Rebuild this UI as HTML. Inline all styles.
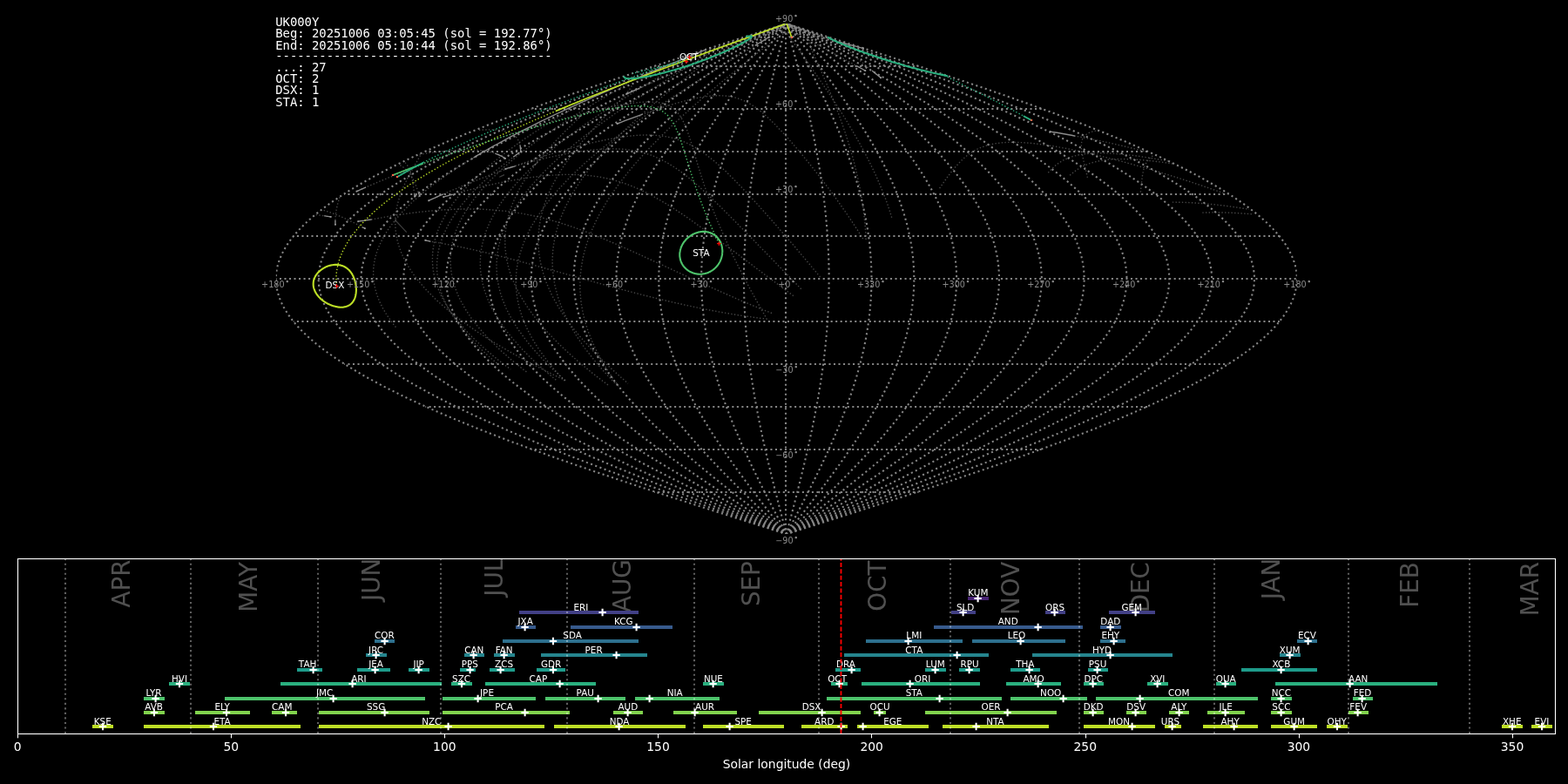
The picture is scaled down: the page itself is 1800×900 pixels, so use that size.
<!DOCTYPE html>
<html lang="en">
<head>
<meta charset="utf-8">
<title>UK000Y shower association</title>
<style>
html,body{margin:0;padding:0;background:#000;overflow:hidden}
body{width:1800px;height:900px}
svg{display:block;position:absolute;left:0;top:0;will-change:transform}
text{font-family:"DejaVu Sans","Liberation Sans",sans-serif}
.mono{font-family:"DejaVu Sans Mono","Liberation Mono",monospace;font-size:13.89px;fill:#fff;white-space:pre}
.gl{font-size:9.64px;fill:#8a8a8a;text-anchor:middle}
.bl{font-size:10.42px;fill:#fff;text-anchor:middle}
.tk{font-size:13.89px;fill:#fff;text-anchor:middle}
.mn{font-size:27.78px;fill:#fff;fill-opacity:0.315}
</style>
</head>
<body>
<svg width="1800" height="900" viewBox="0 0 1800 900">
<rect x="0" y="0" width="1800" height="900" fill="#000"/>
<defs><clipPath id="skyclip"><rect x="316.80" y="27.10" width="1172.00" height="586.00"/></clipPath></defs>
<g clip-path="url(#skyclip)" fill="none">
<g id="grid" stroke="#858585" stroke-width="2.083" stroke-dasharray="2.083 3.437">
<path d="M751.13 565L1054.47 565" stroke-dashoffset="1.4"/>
<path d="M609.80 516L1195.80 516" stroke-dashoffset="1.4"/>
<path d="M488.43 467L1317.17 467" stroke-dashoffset="1.4"/>
<path d="M395.31 418L1410.29 418" stroke-dashoffset="1.4"/>
<path d="M336.77 369L1468.83 369" stroke-dashoffset="1.4"/>
<path d="M316.80 320L1488.80 320" stroke-dashoffset="1.4"/>
<path d="M336.77 271L1468.83 271" stroke-dashoffset="1.4"/>
<path d="M395.31 223L1410.29 223" stroke-dashoffset="1.4"/>
<path d="M488.43 174L1317.17 174" stroke-dashoffset="1.4"/>
<path d="M609.80 125L1195.80 125" stroke-dashoffset="1.4"/>
<path d="M751.13 76L1054.47 76" stroke-dashoffset="1.4"/>
<path d="M902.80 613.10L913.03 609.85L923.25 606.59L933.47 603.33L943.68 600.08L953.87 596.82L964.05 593.57L974.22 590.31L984.36 587.06L994.47 583.80L1004.56 580.55L1014.61 577.29L1024.64 574.03L1034.62 570.78L1044.57 567.52L1054.47 564.27L1064.32 561.01L1074.13 557.76L1083.88 554.50L1093.58 551.24L1103.22 547.99L1112.80 544.73L1122.32 541.48L1131.77 538.22L1141.15 534.97L1150.45 531.71L1159.69 528.46L1168.84 525.20L1177.91 521.94L1186.90 518.69L1195.80 515.43L1204.61 512.18L1213.33 508.92L1221.96 505.67L1230.49 502.41L1238.92 499.16L1247.24 495.90L1255.46 492.64L1263.58 489.39L1271.58 486.13L1279.47 482.88L1287.25 479.62L1294.91 476.37L1302.45 473.11L1309.87 469.86L1317.17 466.60L1324.33 463.34L1331.37 460.09L1338.28 456.83L1345.06 453.58L1351.70 450.32L1358.21 447.07L1364.58 443.81L1370.80 440.56L1376.88 437.30L1382.82 434.04L1388.62 430.79L1394.26 427.53L1399.76 424.28L1405.10 421.02L1410.29 417.77L1415.33 414.51L1420.21 411.26L1424.93 408.00L1429.49 404.74L1433.90 401.49L1438.14 398.23L1442.22 394.98L1446.13 391.72L1449.88 388.47L1453.46 385.21L1456.88 381.96L1460.12 378.70L1463.20 375.44L1466.10 372.19L1468.83 368.93L1471.39 365.68L1473.78 362.42L1476.00 359.17L1478.03 355.91L1479.90 352.66L1481.59 349.40L1483.10 346.14L1484.43 342.89L1485.59 339.63L1486.57 336.38L1487.37 333.12L1488.00 329.87L1488.44 326.61L1488.71 323.36L1488.80 320.10L1488.71 316.84L1488.44 313.59L1488.00 310.33L1487.37 307.08L1486.57 303.82L1485.59 300.57L1484.43 297.31L1483.10 294.06L1481.59 290.80L1479.90 287.54L1478.03 284.29L1476.00 281.03L1473.78 277.78L1471.39 274.52L1468.83 271.27L1466.10 268.01L1463.20 264.76L1460.12 261.50L1456.88 258.24L1453.46 254.99L1449.88 251.73L1446.13 248.48L1442.22 245.22L1438.14 241.97L1433.90 238.71L1429.49 235.46L1424.93 232.20L1420.21 228.94L1415.33 225.69L1410.29 222.43L1405.10 219.18L1399.76 215.92L1394.26 212.67L1388.62 209.41L1382.82 206.16L1376.88 202.90L1370.80 199.64L1364.58 196.39L1358.21 193.13L1351.70 189.88L1345.06 186.62L1338.28 183.37L1331.37 180.11L1324.33 176.86L1317.17 173.60L1309.87 170.34L1302.45 167.09L1294.91 163.83L1287.25 160.58L1279.47 157.32L1271.58 154.07L1263.58 150.81L1255.46 147.56L1247.24 144.30L1238.92 141.04L1230.49 137.79L1221.96 134.53L1213.33 131.28L1204.61 128.02L1195.80 124.77L1186.90 121.51L1177.91 118.26L1168.84 115.00L1159.69 111.74L1150.45 108.49L1141.15 105.23L1131.77 101.98L1122.32 98.72L1112.80 95.47L1103.22 92.21L1093.58 88.96L1083.88 85.70L1074.13 82.44L1064.32 79.19L1054.47 75.93L1044.57 72.68L1034.62 69.42L1024.64 66.17L1014.61 62.91L1004.56 59.65L994.47 56.40L984.36 53.14L974.22 49.89L964.05 46.63L953.87 43.38L943.68 40.12L933.47 36.87L923.25 33.61L913.03 30.35L902.80 27.10" stroke-dashoffset="0.75"/>
<path d="M902.80 613.10L912.17 609.85L921.55 606.59L930.91 603.33L940.27 600.08L949.62 596.82L958.95 593.57L968.26 590.31L977.56 587.06L986.83 583.80L996.08 580.55L1005.30 577.29L1014.48 574.03L1023.64 570.78L1032.75 567.52L1041.83 564.27L1050.86 561.01L1059.85 557.76L1068.79 554.50L1077.68 551.24L1086.52 547.99L1095.30 544.73L1104.03 541.48L1112.69 538.22L1121.29 534.97L1129.82 531.71L1138.28 528.46L1146.67 525.20L1154.99 521.94L1163.22 518.69L1171.38 515.43L1179.46 512.18L1187.46 508.92L1195.36 505.67L1203.18 502.41L1210.91 499.16L1218.54 495.90L1226.08 492.64L1233.51 489.39L1240.85 486.13L1248.08 482.88L1255.21 479.62L1262.24 476.37L1269.15 473.11L1275.95 469.86L1282.64 466.60L1289.21 463.34L1295.66 460.09L1301.99 456.83L1308.21 453.58L1314.29 450.32L1320.26 447.07L1326.09 443.81L1331.80 440.56L1337.38 437.30L1342.82 434.04L1348.13 430.79L1353.31 427.53L1358.34 424.28L1363.24 421.02L1368.00 417.77L1372.62 414.51L1377.09 411.26L1381.42 408.00L1385.60 404.74L1389.64 401.49L1393.53 398.23L1397.27 394.98L1400.85 391.72L1404.29 388.47L1407.57 385.21L1410.70 381.96L1413.68 378.70L1416.50 375.44L1419.16 372.19L1421.66 368.93L1424.01 365.68L1426.20 362.42L1428.23 359.17L1430.10 355.91L1431.81 352.66L1433.35 349.40L1434.74 346.14L1435.96 342.89L1437.03 339.63L1437.92 336.38L1438.66 333.12L1439.23 329.87L1439.64 326.61L1439.89 323.36L1439.97 320.10L1439.89 316.84L1439.64 313.59L1439.23 310.33L1438.66 307.08L1437.92 303.82L1437.03 300.57L1435.96 297.31L1434.74 294.06L1433.35 290.80L1431.81 287.54L1430.10 284.29L1428.23 281.03L1426.20 277.78L1424.01 274.52L1421.66 271.27L1419.16 268.01L1416.50 264.76L1413.68 261.50L1410.70 258.24L1407.57 254.99L1404.29 251.73L1400.85 248.48L1397.27 245.22L1393.53 241.97L1389.64 238.71L1385.60 235.46L1381.42 232.20L1377.09 228.94L1372.62 225.69L1368.00 222.43L1363.24 219.18L1358.34 215.92L1353.31 212.67L1348.13 209.41L1342.82 206.16L1337.38 202.90L1331.80 199.64L1326.09 196.39L1320.26 193.13L1314.29 189.88L1308.21 186.62L1301.99 183.37L1295.66 180.11L1289.21 176.86L1282.64 173.60L1275.95 170.34L1269.15 167.09L1262.24 163.83L1255.21 160.58L1248.08 157.32L1240.85 154.07L1233.51 150.81L1226.08 147.56L1218.54 144.30L1210.91 141.04L1203.18 137.79L1195.36 134.53L1187.46 131.28L1179.46 128.02L1171.38 124.77L1163.22 121.51L1154.99 118.26L1146.67 115.00L1138.28 111.74L1129.82 108.49L1121.29 105.23L1112.69 101.98L1104.03 98.72L1095.30 95.47L1086.52 92.21L1077.68 88.96L1068.79 85.70L1059.85 82.44L1050.86 79.19L1041.83 75.93L1032.75 72.68L1023.64 69.42L1014.48 66.17L1005.30 62.91L996.08 59.65L986.83 56.40L977.56 53.14L968.26 49.89L958.95 46.63L949.62 43.38L940.27 40.12L930.91 36.87L921.55 33.61L912.17 30.35L902.80 27.10" stroke-dashoffset="0.75"/>
<path d="M902.80 613.10L911.32 609.85L919.84 606.59L928.36 603.33L936.86 600.08L945.36 596.82L953.84 593.57L962.31 590.31L970.76 587.06L979.19 583.80L987.60 580.55L995.98 577.29L1004.33 574.03L1012.65 570.78L1020.94 567.52L1029.19 564.27L1037.40 561.01L1045.58 557.76L1053.70 554.50L1061.79 551.24L1069.82 547.99L1077.80 544.73L1085.73 541.48L1093.61 538.22L1101.42 534.97L1109.18 531.71L1116.87 528.46L1124.50 525.20L1132.06 521.94L1139.55 518.69L1146.97 515.43L1154.31 512.18L1161.58 508.92L1168.77 505.67L1175.87 502.41L1182.90 499.16L1189.84 495.90L1196.69 492.64L1203.45 489.39L1210.12 486.13L1216.70 482.88L1223.18 479.62L1229.56 476.37L1235.84 473.11L1242.03 469.86L1248.10 466.60L1254.08 463.34L1259.95 460.09L1265.70 456.83L1271.35 453.58L1276.89 450.32L1282.31 447.07L1287.61 443.81L1292.80 440.56L1297.87 437.30L1302.82 434.04L1307.65 430.79L1312.35 427.53L1316.93 424.28L1321.38 421.02L1325.71 417.77L1329.91 414.51L1333.97 411.26L1337.91 408.00L1341.71 404.74L1345.38 401.49L1348.92 398.23L1352.31 394.98L1355.58 391.72L1358.70 388.47L1361.68 385.21L1364.53 381.96L1367.23 378.70L1369.80 375.44L1372.22 372.19L1374.49 368.93L1376.63 365.68L1378.62 362.42L1380.46 359.17L1382.16 355.91L1383.72 352.66L1385.12 349.40L1386.38 346.14L1387.49 342.89L1388.46 339.63L1389.28 336.38L1389.94 333.12L1390.47 329.87L1390.84 326.61L1391.06 323.36L1391.13 320.10L1391.06 316.84L1390.84 313.59L1390.47 310.33L1389.94 307.08L1389.28 303.82L1388.46 300.57L1387.49 297.31L1386.38 294.06L1385.12 290.80L1383.72 287.54L1382.16 284.29L1380.46 281.03L1378.62 277.78L1376.63 274.52L1374.49 271.27L1372.22 268.01L1369.80 264.76L1367.23 261.50L1364.53 258.24L1361.68 254.99L1358.70 251.73L1355.58 248.48L1352.31 245.22L1348.92 241.97L1345.38 238.71L1341.71 235.46L1337.91 232.20L1333.97 228.94L1329.91 225.69L1325.71 222.43L1321.38 219.18L1316.93 215.92L1312.35 212.67L1307.65 209.41L1302.82 206.16L1297.87 202.90L1292.80 199.64L1287.61 196.39L1282.31 193.13L1276.89 189.88L1271.35 186.62L1265.70 183.37L1259.95 180.11L1254.08 176.86L1248.10 173.60L1242.03 170.34L1235.84 167.09L1229.56 163.83L1223.18 160.58L1216.70 157.32L1210.12 154.07L1203.45 150.81L1196.69 147.56L1189.84 144.30L1182.90 141.04L1175.87 137.79L1168.77 134.53L1161.58 131.28L1154.31 128.02L1146.97 124.77L1139.55 121.51L1132.06 118.26L1124.50 115.00L1116.87 111.74L1109.18 108.49L1101.42 105.23L1093.61 101.98L1085.73 98.72L1077.80 95.47L1069.82 92.21L1061.79 88.96L1053.70 85.70L1045.58 82.44L1037.40 79.19L1029.19 75.93L1020.94 72.68L1012.65 69.42L1004.33 66.17L995.98 62.91L987.60 59.65L979.19 56.40L970.76 53.14L962.31 49.89L953.84 46.63L945.36 43.38L936.86 40.12L928.36 36.87L919.84 33.61L911.32 30.35L902.80 27.10" stroke-dashoffset="0.75"/>
<path d="M902.80 613.10L910.47 609.85L918.14 606.59L925.80 603.33L933.46 600.08L941.11 596.82L948.74 593.57L956.36 590.31L963.97 587.06L971.55 583.80L979.12 580.55L986.66 577.29L994.18 574.03L1001.67 570.78L1009.12 567.52L1016.55 564.27L1023.94 561.01L1031.30 557.76L1038.61 554.50L1045.89 551.24L1053.12 547.99L1060.30 544.73L1067.44 541.48L1074.53 538.22L1081.56 534.97L1088.54 531.71L1095.46 528.46L1102.33 525.20L1109.13 521.94L1115.87 518.69L1122.55 515.43L1129.16 512.18L1135.70 508.92L1142.17 505.67L1148.57 502.41L1154.89 499.16L1161.13 495.90L1167.30 492.64L1173.38 489.39L1179.39 486.13L1185.31 482.88L1191.14 479.62L1196.88 476.37L1202.54 473.11L1208.10 469.86L1213.57 466.60L1218.95 463.34L1224.23 460.09L1229.41 456.83L1234.50 453.58L1239.48 450.32L1244.36 447.07L1249.13 443.81L1253.80 440.56L1258.36 437.30L1262.82 434.04L1267.16 430.79L1271.40 427.53L1275.52 424.28L1279.53 421.02L1283.42 417.77L1287.20 414.51L1290.86 411.26L1294.40 408.00L1297.82 404.74L1301.12 401.49L1304.30 398.23L1307.36 394.98L1310.30 391.72L1313.11 388.47L1315.80 385.21L1318.36 381.96L1320.79 378.70L1323.10 375.44L1325.28 372.19L1327.33 368.93L1329.25 365.68L1331.04 362.42L1332.70 359.17L1334.23 355.91L1335.62 352.66L1336.89 349.40L1338.02 346.14L1339.02 342.89L1339.89 339.63L1340.63 336.38L1341.23 333.12L1341.70 329.87L1342.03 326.61L1342.23 323.36L1342.30 320.10L1342.23 316.84L1342.03 313.59L1341.70 310.33L1341.23 307.08L1340.63 303.82L1339.89 300.57L1339.02 297.31L1338.02 294.06L1336.89 290.80L1335.62 287.54L1334.23 284.29L1332.70 281.03L1331.04 277.78L1329.25 274.52L1327.33 271.27L1325.28 268.01L1323.10 264.76L1320.79 261.50L1318.36 258.24L1315.80 254.99L1313.11 251.73L1310.30 248.48L1307.36 245.22L1304.30 241.97L1301.12 238.71L1297.82 235.46L1294.40 232.20L1290.86 228.94L1287.20 225.69L1283.42 222.43L1279.53 219.18L1275.52 215.92L1271.40 212.67L1267.16 209.41L1262.82 206.16L1258.36 202.90L1253.80 199.64L1249.13 196.39L1244.36 193.13L1239.48 189.88L1234.50 186.62L1229.41 183.37L1224.23 180.11L1218.95 176.86L1213.57 173.60L1208.10 170.34L1202.54 167.09L1196.88 163.83L1191.14 160.58L1185.31 157.32L1179.39 154.07L1173.38 150.81L1167.30 147.56L1161.13 144.30L1154.89 141.04L1148.57 137.79L1142.17 134.53L1135.70 131.28L1129.16 128.02L1122.55 124.77L1115.87 121.51L1109.13 118.26L1102.33 115.00L1095.46 111.74L1088.54 108.49L1081.56 105.23L1074.53 101.98L1067.44 98.72L1060.30 95.47L1053.12 92.21L1045.89 88.96L1038.61 85.70L1031.30 82.44L1023.94 79.19L1016.55 75.93L1009.12 72.68L1001.67 69.42L994.18 66.17L986.66 62.91L979.12 59.65L971.55 56.40L963.97 53.14L956.36 49.89L948.74 46.63L941.11 43.38L933.46 40.12L925.80 36.87L918.14 33.61L910.47 30.35L902.80 27.10" stroke-dashoffset="0.75"/>
<path d="M902.80 613.10L909.62 609.85L916.43 606.59L923.25 603.33L930.05 600.08L936.85 596.82L943.64 593.57L950.41 590.31L957.17 587.06L963.91 583.80L970.64 580.55L977.34 577.29L984.02 574.03L990.68 570.78L997.31 567.52L1003.91 564.27L1010.48 561.01L1017.02 557.76L1023.52 554.50L1029.99 551.24L1036.42 547.99L1042.80 544.73L1049.15 541.48L1055.45 538.22L1061.70 534.97L1067.90 531.71L1074.06 528.46L1080.16 525.20L1086.21 521.94L1092.20 518.69L1098.13 515.43L1104.01 512.18L1109.82 508.92L1115.57 505.67L1121.26 502.41L1126.88 499.16L1132.43 495.90L1137.91 492.64L1143.32 489.39L1148.66 486.13L1153.92 482.88L1159.10 479.62L1164.21 476.37L1169.23 473.11L1174.18 469.86L1179.04 466.60L1183.82 463.34L1188.52 460.09L1193.12 456.83L1197.64 453.58L1202.07 450.32L1206.41 447.07L1210.65 443.81L1214.80 440.56L1218.86 437.30L1222.82 434.04L1226.68 430.79L1230.44 427.53L1234.10 424.28L1237.67 421.02L1241.13 417.77L1244.49 414.51L1247.74 411.26L1250.89 408.00L1253.93 404.74L1256.87 401.49L1259.69 398.23L1262.41 394.98L1265.02 391.72L1267.52 388.47L1269.91 385.21L1272.18 381.96L1274.35 378.70L1276.40 375.44L1278.33 372.19L1280.16 368.93L1281.86 365.68L1283.45 362.42L1284.93 359.17L1286.29 355.91L1287.53 352.66L1288.66 349.40L1289.67 346.14L1290.56 342.89L1291.33 339.63L1291.98 336.38L1292.52 333.12L1292.93 329.87L1293.23 326.61L1293.41 323.36L1293.47 320.10L1293.41 316.84L1293.23 313.59L1292.93 310.33L1292.52 307.08L1291.98 303.82L1291.33 300.57L1290.56 297.31L1289.67 294.06L1288.66 290.80L1287.53 287.54L1286.29 284.29L1284.93 281.03L1283.45 277.78L1281.86 274.52L1280.16 271.27L1278.33 268.01L1276.40 264.76L1274.35 261.50L1272.18 258.24L1269.91 254.99L1267.52 251.73L1265.02 248.48L1262.41 245.22L1259.69 241.97L1256.87 238.71L1253.93 235.46L1250.89 232.20L1247.74 228.94L1244.49 225.69L1241.13 222.43L1237.67 219.18L1234.10 215.92L1230.44 212.67L1226.68 209.41L1222.82 206.16L1218.86 202.90L1214.80 199.64L1210.65 196.39L1206.41 193.13L1202.07 189.88L1197.64 186.62L1193.12 183.37L1188.52 180.11L1183.82 176.86L1179.04 173.60L1174.18 170.34L1169.23 167.09L1164.21 163.83L1159.10 160.58L1153.92 157.32L1148.66 154.07L1143.32 150.81L1137.91 147.56L1132.43 144.30L1126.88 141.04L1121.26 137.79L1115.57 134.53L1109.82 131.28L1104.01 128.02L1098.13 124.77L1092.20 121.51L1086.21 118.26L1080.16 115.00L1074.06 111.74L1067.90 108.49L1061.70 105.23L1055.45 101.98L1049.15 98.72L1042.80 95.47L1036.42 92.21L1029.99 88.96L1023.52 85.70L1017.02 82.44L1010.48 79.19L1003.91 75.93L997.31 72.68L990.68 69.42L984.02 66.17L977.34 62.91L970.64 59.65L963.91 56.40L957.17 53.14L950.41 49.89L943.64 46.63L936.85 43.38L930.05 40.12L923.25 36.87L916.43 33.61L909.62 30.35L902.80 27.10" stroke-dashoffset="0.75"/>
<path d="M902.80 613.10L908.77 609.85L914.73 606.59L920.69 603.33L926.65 600.08L932.59 596.82L938.53 593.57L944.46 590.31L950.37 587.06L956.27 583.80L962.16 580.55L968.03 577.29L973.87 574.03L979.70 570.78L985.50 567.52L991.27 564.27L997.02 561.01L1002.74 557.76L1008.43 554.50L1014.09 551.24L1019.71 547.99L1025.30 544.73L1030.85 541.48L1036.37 538.22L1041.84 534.97L1047.27 531.71L1052.65 528.46L1057.99 525.20L1063.28 521.94L1068.52 518.69L1073.72 515.43L1078.86 512.18L1083.94 508.92L1088.98 505.67L1093.95 502.41L1098.87 499.16L1103.73 495.90L1108.52 492.64L1113.25 489.39L1117.92 486.13L1122.53 482.88L1127.06 479.62L1131.53 476.37L1135.93 473.11L1140.26 469.86L1144.51 466.60L1148.69 463.34L1152.80 460.09L1156.83 456.83L1160.79 453.58L1164.66 450.32L1168.45 447.07L1172.17 443.81L1175.80 440.56L1179.35 437.30L1182.81 434.04L1186.19 430.79L1189.49 427.53L1192.69 424.28L1195.81 421.02L1198.84 417.77L1201.77 414.51L1204.62 411.26L1207.38 408.00L1210.04 404.74L1212.61 401.49L1215.08 398.23L1217.46 394.98L1219.74 391.72L1221.93 388.47L1224.02 385.21L1226.01 381.96L1227.90 378.70L1229.70 375.44L1231.39 372.19L1232.99 368.93L1234.48 365.68L1235.87 362.42L1237.16 359.17L1238.35 355.91L1239.44 352.66L1240.43 349.40L1241.31 346.14L1242.09 342.89L1242.76 339.63L1243.33 336.38L1243.80 333.12L1244.17 329.87L1244.43 326.61L1244.58 323.36L1244.63 320.10L1244.58 316.84L1244.43 313.59L1244.17 310.33L1243.80 307.08L1243.33 303.82L1242.76 300.57L1242.09 297.31L1241.31 294.06L1240.43 290.80L1239.44 287.54L1238.35 284.29L1237.16 281.03L1235.87 277.78L1234.48 274.52L1232.99 271.27L1231.39 268.01L1229.70 264.76L1227.90 261.50L1226.01 258.24L1224.02 254.99L1221.93 251.73L1219.74 248.48L1217.46 245.22L1215.08 241.97L1212.61 238.71L1210.04 235.46L1207.38 232.20L1204.62 228.94L1201.77 225.69L1198.84 222.43L1195.81 219.18L1192.69 215.92L1189.49 212.67L1186.19 209.41L1182.81 206.16L1179.35 202.90L1175.80 199.64L1172.17 196.39L1168.45 193.13L1164.66 189.88L1160.79 186.62L1156.83 183.37L1152.80 180.11L1148.69 176.86L1144.51 173.60L1140.26 170.34L1135.93 167.09L1131.53 163.83L1127.06 160.58L1122.53 157.32L1117.92 154.07L1113.25 150.81L1108.52 147.56L1103.73 144.30L1098.87 141.04L1093.95 137.79L1088.98 134.53L1083.94 131.28L1078.86 128.02L1073.72 124.77L1068.52 121.51L1063.28 118.26L1057.99 115.00L1052.65 111.74L1047.27 108.49L1041.84 105.23L1036.37 101.98L1030.85 98.72L1025.30 95.47L1019.71 92.21L1014.09 88.96L1008.43 85.70L1002.74 82.44L997.02 79.19L991.27 75.93L985.50 72.68L979.70 69.42L973.87 66.17L968.03 62.91L962.16 59.65L956.27 56.40L950.37 53.14L944.46 49.89L938.53 46.63L932.59 43.38L926.65 40.12L920.69 36.87L914.73 33.61L908.77 30.35L902.80 27.10" stroke-dashoffset="0.75"/>
<path d="M902.80 613.10L907.91 609.85L913.03 606.59L918.13 603.33L923.24 600.08L928.34 596.82L933.43 593.57L938.51 590.31L943.58 587.06L948.64 583.80L953.68 580.55L958.71 577.29L963.72 574.03L968.71 570.78L973.68 567.52L978.63 564.27L983.56 561.01L988.47 557.76L993.34 554.50L998.19 551.24L1003.01 547.99L1007.80 544.73L1012.56 541.48L1017.28 538.22L1021.97 534.97L1026.63 531.71L1031.24 528.46L1035.82 525.20L1040.36 521.94L1044.85 518.69L1049.30 515.43L1053.71 512.18L1058.07 508.92L1062.38 505.67L1066.64 502.41L1070.86 499.16L1075.02 495.90L1079.13 492.64L1083.19 489.39L1087.19 486.13L1091.14 482.88L1095.03 479.62L1098.86 476.37L1102.63 473.11L1106.34 469.86L1109.98 466.60L1113.57 463.34L1117.09 460.09L1120.54 456.83L1123.93 453.58L1127.25 450.32L1130.50 447.07L1133.69 443.81L1136.80 440.56L1139.84 437.30L1142.81 434.04L1145.71 430.79L1148.53 427.53L1151.28 424.28L1153.95 421.02L1156.55 417.77L1159.06 414.51L1161.50 411.26L1163.87 408.00L1166.15 404.74L1168.35 401.49L1170.47 398.23L1172.51 394.98L1174.47 391.72L1176.34 388.47L1178.13 385.21L1179.84 381.96L1181.46 378.70L1183.00 375.44L1184.45 372.19L1185.82 368.93L1187.10 365.68L1188.29 362.42L1189.40 359.17L1190.42 355.91L1191.35 352.66L1192.19 349.40L1192.95 346.14L1193.62 342.89L1194.20 339.63L1194.69 336.38L1195.09 333.12L1195.40 329.87L1195.62 326.61L1195.76 323.36L1195.80 320.10L1195.76 316.84L1195.62 313.59L1195.40 310.33L1195.09 307.08L1194.69 303.82L1194.20 300.57L1193.62 297.31L1192.95 294.06L1192.19 290.80L1191.35 287.54L1190.42 284.29L1189.40 281.03L1188.29 277.78L1187.10 274.52L1185.82 271.27L1184.45 268.01L1183.00 264.76L1181.46 261.50L1179.84 258.24L1178.13 254.99L1176.34 251.73L1174.47 248.48L1172.51 245.22L1170.47 241.97L1168.35 238.71L1166.15 235.46L1163.87 232.20L1161.50 228.94L1159.06 225.69L1156.55 222.43L1153.95 219.18L1151.28 215.92L1148.53 212.67L1145.71 209.41L1142.81 206.16L1139.84 202.90L1136.80 199.64L1133.69 196.39L1130.50 193.13L1127.25 189.88L1123.93 186.62L1120.54 183.37L1117.09 180.11L1113.57 176.86L1109.98 173.60L1106.34 170.34L1102.63 167.09L1098.86 163.83L1095.03 160.58L1091.14 157.32L1087.19 154.07L1083.19 150.81L1079.13 147.56L1075.02 144.30L1070.86 141.04L1066.64 137.79L1062.38 134.53L1058.07 131.28L1053.71 128.02L1049.30 124.77L1044.85 121.51L1040.36 118.26L1035.82 115.00L1031.24 111.74L1026.63 108.49L1021.97 105.23L1017.28 101.98L1012.56 98.72L1007.80 95.47L1003.01 92.21L998.19 88.96L993.34 85.70L988.47 82.44L983.56 79.19L978.63 75.93L973.68 72.68L968.71 69.42L963.72 66.17L958.71 62.91L953.68 59.65L948.64 56.40L943.58 53.14L938.51 49.89L933.43 46.63L928.34 43.38L923.24 40.12L918.13 36.87L913.03 33.61L907.91 30.35L902.80 27.10" stroke-dashoffset="0.75"/>
<path d="M902.80 613.10L907.06 609.85L911.32 606.59L915.58 603.33L919.83 600.08L924.08 596.82L928.32 593.57L932.56 590.31L936.78 587.06L941.00 583.80L945.20 580.55L949.39 577.29L953.57 574.03L957.73 570.78L961.87 567.52L966.00 564.27L970.10 561.01L974.19 557.76L978.25 554.50L982.29 551.24L986.31 547.99L990.30 544.73L994.27 541.48L998.20 538.22L1002.11 534.97L1005.99 531.71L1009.84 528.46L1013.65 525.20L1017.43 521.94L1021.17 518.69L1024.88 515.43L1028.56 512.18L1032.19 508.92L1035.78 505.67L1039.34 502.41L1042.85 499.16L1046.32 495.90L1049.74 492.64L1053.12 489.39L1056.46 486.13L1059.75 482.88L1062.99 479.62L1066.18 476.37L1069.32 473.11L1072.41 469.86L1075.45 466.60L1078.44 463.34L1081.37 460.09L1084.25 456.83L1087.08 453.58L1089.84 450.32L1092.55 447.07L1095.21 443.81L1097.80 440.56L1100.34 437.30L1102.81 434.04L1105.22 430.79L1107.58 427.53L1109.87 424.28L1112.09 421.02L1114.25 417.77L1116.35 414.51L1118.39 411.26L1120.35 408.00L1122.26 404.74L1124.09 401.49L1125.86 398.23L1127.56 394.98L1129.19 391.72L1130.75 388.47L1132.24 385.21L1133.66 381.96L1135.02 378.70L1136.30 375.44L1137.51 372.19L1138.65 368.93L1139.71 365.68L1140.71 362.42L1141.63 359.17L1142.48 355.91L1143.26 352.66L1143.96 349.40L1144.59 346.14L1145.15 342.89L1145.63 339.63L1146.04 336.38L1146.37 333.12L1146.63 329.87L1146.82 326.61L1146.93 323.36L1146.97 320.10L1146.93 316.84L1146.82 313.59L1146.63 310.33L1146.37 307.08L1146.04 303.82L1145.63 300.57L1145.15 297.31L1144.59 294.06L1143.96 290.80L1143.26 287.54L1142.48 284.29L1141.63 281.03L1140.71 277.78L1139.71 274.52L1138.65 271.27L1137.51 268.01L1136.30 264.76L1135.02 261.50L1133.66 258.24L1132.24 254.99L1130.75 251.73L1129.19 248.48L1127.56 245.22L1125.86 241.97L1124.09 238.71L1122.26 235.46L1120.35 232.20L1118.39 228.94L1116.35 225.69L1114.25 222.43L1112.09 219.18L1109.87 215.92L1107.58 212.67L1105.22 209.41L1102.81 206.16L1100.34 202.90L1097.80 199.64L1095.21 196.39L1092.55 193.13L1089.84 189.88L1087.08 186.62L1084.25 183.37L1081.37 180.11L1078.44 176.86L1075.45 173.60L1072.41 170.34L1069.32 167.09L1066.18 163.83L1062.99 160.58L1059.75 157.32L1056.46 154.07L1053.12 150.81L1049.74 147.56L1046.32 144.30L1042.85 141.04L1039.34 137.79L1035.78 134.53L1032.19 131.28L1028.56 128.02L1024.88 124.77L1021.17 121.51L1017.43 118.26L1013.65 115.00L1009.84 111.74L1005.99 108.49L1002.11 105.23L998.20 101.98L994.27 98.72L990.30 95.47L986.31 92.21L982.29 88.96L978.25 85.70L974.19 82.44L970.10 79.19L966.00 75.93L961.87 72.68L957.73 69.42L953.57 66.17L949.39 62.91L945.20 59.65L941.00 56.40L936.78 53.14L932.56 49.89L928.32 46.63L924.08 43.38L919.83 40.12L915.58 36.87L911.32 33.61L907.06 30.35L902.80 27.10" stroke-dashoffset="0.75"/>
<path d="M902.80 613.10L906.21 609.85L909.62 606.59L913.02 603.33L916.43 600.08L919.82 596.82L923.22 593.57L926.61 590.31L929.99 587.06L933.36 583.80L936.72 580.55L940.07 577.29L943.41 574.03L946.74 570.78L950.06 567.52L953.36 564.27L956.64 561.01L959.91 557.76L963.16 554.50L966.39 551.24L969.61 547.99L972.80 544.73L975.97 541.48L979.12 538.22L982.25 534.97L985.35 531.71L988.43 528.46L991.48 525.20L994.50 521.94L997.50 518.69L1000.47 515.43L1003.40 512.18L1006.31 508.92L1009.19 505.67L1012.03 502.41L1014.84 499.16L1017.61 495.90L1020.35 492.64L1023.06 489.39L1025.73 486.13L1028.36 482.88L1030.95 479.62L1033.50 476.37L1036.02 473.11L1038.49 469.86L1040.92 466.60L1043.31 463.34L1045.66 460.09L1047.96 456.83L1050.22 453.58L1052.43 450.32L1054.60 447.07L1056.73 443.81L1058.80 440.56L1060.83 437.30L1062.81 434.04L1064.74 430.79L1066.62 427.53L1068.45 424.28L1070.23 421.02L1071.96 417.77L1073.64 414.51L1075.27 411.26L1076.84 408.00L1078.36 404.74L1079.83 401.49L1081.25 398.23L1082.61 394.98L1083.91 391.72L1085.16 388.47L1086.35 385.21L1087.49 381.96L1088.57 378.70L1089.60 375.44L1090.57 372.19L1091.48 368.93L1092.33 365.68L1093.13 362.42L1093.87 359.17L1094.54 355.91L1095.17 352.66L1095.73 349.40L1096.23 346.14L1096.68 342.89L1097.06 339.63L1097.39 336.38L1097.66 333.12L1097.87 329.87L1098.01 326.61L1098.10 323.36L1098.13 320.10L1098.10 316.84L1098.01 313.59L1097.87 310.33L1097.66 307.08L1097.39 303.82L1097.06 300.57L1096.68 297.31L1096.23 294.06L1095.73 290.80L1095.17 287.54L1094.54 284.29L1093.87 281.03L1093.13 277.78L1092.33 274.52L1091.48 271.27L1090.57 268.01L1089.60 264.76L1088.57 261.50L1087.49 258.24L1086.35 254.99L1085.16 251.73L1083.91 248.48L1082.61 245.22L1081.25 241.97L1079.83 238.71L1078.36 235.46L1076.84 232.20L1075.27 228.94L1073.64 225.69L1071.96 222.43L1070.23 219.18L1068.45 215.92L1066.62 212.67L1064.74 209.41L1062.81 206.16L1060.83 202.90L1058.80 199.64L1056.73 196.39L1054.60 193.13L1052.43 189.88L1050.22 186.62L1047.96 183.37L1045.66 180.11L1043.31 176.86L1040.92 173.60L1038.49 170.34L1036.02 167.09L1033.50 163.83L1030.95 160.58L1028.36 157.32L1025.73 154.07L1023.06 150.81L1020.35 147.56L1017.61 144.30L1014.84 141.04L1012.03 137.79L1009.19 134.53L1006.31 131.28L1003.40 128.02L1000.47 124.77L997.50 121.51L994.50 118.26L991.48 115.00L988.43 111.74L985.35 108.49L982.25 105.23L979.12 101.98L975.97 98.72L972.80 95.47L969.61 92.21L966.39 88.96L963.16 85.70L959.91 82.44L956.64 79.19L953.36 75.93L950.06 72.68L946.74 69.42L943.41 66.17L940.07 62.91L936.72 59.65L933.36 56.40L929.99 53.14L926.61 49.89L923.22 46.63L919.82 43.38L916.43 40.12L913.02 36.87L909.62 33.61L906.21 30.35L902.80 27.10" stroke-dashoffset="0.75"/>
<path d="M902.80 613.10L905.36 609.85L907.91 606.59L910.47 603.33L913.02 600.08L915.57 596.82L918.11 593.57L920.65 590.31L923.19 587.06L925.72 583.80L928.24 580.55L930.75 577.29L933.26 574.03L935.76 570.78L938.24 567.52L940.72 564.27L943.18 561.01L945.63 557.76L948.07 554.50L950.50 551.24L952.91 547.99L955.30 544.73L957.68 541.48L960.04 538.22L962.39 534.97L964.71 531.71L967.02 528.46L969.31 525.20L971.58 521.94L973.82 518.69L976.05 515.43L978.25 512.18L980.43 508.92L982.59 505.67L984.72 502.41L986.83 499.16L988.91 495.90L990.97 492.64L992.99 489.39L995.00 486.13L996.97 482.88L998.91 479.62L1000.83 476.37L1002.71 473.11L1004.57 469.86L1006.39 466.60L1008.18 463.34L1009.94 460.09L1011.67 456.83L1013.37 453.58L1015.03 450.32L1016.65 447.07L1018.24 443.81L1019.80 440.56L1021.32 437.30L1022.81 434.04L1024.25 430.79L1025.67 427.53L1027.04 424.28L1028.38 421.02L1029.67 417.77L1030.93 414.51L1032.15 411.26L1033.33 408.00L1034.47 404.74L1035.57 401.49L1036.63 398.23L1037.65 394.98L1038.63 391.72L1039.57 388.47L1040.47 385.21L1041.32 381.96L1042.13 378.70L1042.90 375.44L1043.63 372.19L1044.31 368.93L1044.95 365.68L1045.55 362.42L1046.10 359.17L1046.61 355.91L1047.07 352.66L1047.50 349.40L1047.87 346.14L1048.21 342.89L1048.50 339.63L1048.74 336.38L1048.94 333.12L1049.10 329.87L1049.21 326.61L1049.28 323.36L1049.30 320.10L1049.28 316.84L1049.21 313.59L1049.10 310.33L1048.94 307.08L1048.74 303.82L1048.50 300.57L1048.21 297.31L1047.87 294.06L1047.50 290.80L1047.07 287.54L1046.61 284.29L1046.10 281.03L1045.55 277.78L1044.95 274.52L1044.31 271.27L1043.63 268.01L1042.90 264.76L1042.13 261.50L1041.32 258.24L1040.47 254.99L1039.57 251.73L1038.63 248.48L1037.65 245.22L1036.63 241.97L1035.57 238.71L1034.47 235.46L1033.33 232.20L1032.15 228.94L1030.93 225.69L1029.67 222.43L1028.38 219.18L1027.04 215.92L1025.67 212.67L1024.25 209.41L1022.81 206.16L1021.32 202.90L1019.80 199.64L1018.24 196.39L1016.65 193.13L1015.03 189.88L1013.37 186.62L1011.67 183.37L1009.94 180.11L1008.18 176.86L1006.39 173.60L1004.57 170.34L1002.71 167.09L1000.83 163.83L998.91 160.58L996.97 157.32L995.00 154.07L992.99 150.81L990.97 147.56L988.91 144.30L986.83 141.04L984.72 137.79L982.59 134.53L980.43 131.28L978.25 128.02L976.05 124.77L973.82 121.51L971.58 118.26L969.31 115.00L967.02 111.74L964.71 108.49L962.39 105.23L960.04 101.98L957.68 98.72L955.30 95.47L952.91 92.21L950.50 88.96L948.07 85.70L945.63 82.44L943.18 79.19L940.72 75.93L938.24 72.68L935.76 69.42L933.26 66.17L930.75 62.91L928.24 59.65L925.72 56.40L923.19 53.14L920.65 49.89L918.11 46.63L915.57 43.38L913.02 40.12L910.47 36.87L907.91 33.61L905.36 30.35L902.80 27.10" stroke-dashoffset="0.75"/>
<path d="M902.80 613.10L904.50 609.85L906.21 606.59L907.91 603.33L909.61 600.08L911.31 596.82L913.01 593.57L914.70 590.31L916.39 587.06L918.08 583.80L919.76 580.55L921.44 577.29L923.11 574.03L924.77 570.78L926.43 567.52L928.08 564.27L929.72 561.01L931.36 557.76L932.98 554.50L934.60 551.24L936.20 547.99L937.80 544.73L939.39 541.48L940.96 538.22L942.52 534.97L944.08 531.71L945.61 528.46L947.14 525.20L948.65 521.94L950.15 518.69L951.63 515.43L953.10 512.18L954.56 508.92L955.99 505.67L957.41 502.41L958.82 499.16L960.21 495.90L961.58 492.64L962.93 489.39L964.26 486.13L965.58 482.88L966.88 479.62L968.15 476.37L969.41 473.11L970.65 469.86L971.86 466.60L973.06 463.34L974.23 460.09L975.38 456.83L976.51 453.58L977.62 450.32L978.70 447.07L979.76 443.81L980.80 440.56L981.81 437.30L982.80 434.04L983.77 430.79L984.71 427.53L985.63 424.28L986.52 421.02L987.38 417.77L988.22 414.51L989.03 411.26L989.82 408.00L990.58 404.74L991.32 401.49L992.02 398.23L992.70 394.98L993.36 391.72L993.98 388.47L994.58 385.21L995.15 381.96L995.69 378.70L996.20 375.44L996.68 372.19L997.14 368.93L997.57 365.68L997.96 362.42L998.33 359.17L998.67 355.91L998.98 352.66L999.26 349.40L999.52 346.14L999.74 342.89L999.93 339.63L1000.10 336.38L1000.23 333.12L1000.33 329.87L1000.41 326.61L1000.45 323.36L1000.47 320.10L1000.45 316.84L1000.41 313.59L1000.33 310.33L1000.23 307.08L1000.10 303.82L999.93 300.57L999.74 297.31L999.52 294.06L999.26 290.80L998.98 287.54L998.67 284.29L998.33 281.03L997.96 277.78L997.57 274.52L997.14 271.27L996.68 268.01L996.20 264.76L995.69 261.50L995.15 258.24L994.58 254.99L993.98 251.73L993.36 248.48L992.70 245.22L992.02 241.97L991.32 238.71L990.58 235.46L989.82 232.20L989.03 228.94L988.22 225.69L987.38 222.43L986.52 219.18L985.63 215.92L984.71 212.67L983.77 209.41L982.80 206.16L981.81 202.90L980.80 199.64L979.76 196.39L978.70 193.13L977.62 189.88L976.51 186.62L975.38 183.37L974.23 180.11L973.06 176.86L971.86 173.60L970.65 170.34L969.41 167.09L968.15 163.83L966.88 160.58L965.58 157.32L964.26 154.07L962.93 150.81L961.58 147.56L960.21 144.30L958.82 141.04L957.41 137.79L955.99 134.53L954.56 131.28L953.10 128.02L951.63 124.77L950.15 121.51L948.65 118.26L947.14 115.00L945.61 111.74L944.08 108.49L942.52 105.23L940.96 101.98L939.39 98.72L937.80 95.47L936.20 92.21L934.60 88.96L932.98 85.70L931.36 82.44L929.72 79.19L928.08 75.93L926.43 72.68L924.77 69.42L923.11 66.17L921.44 62.91L919.76 59.65L918.08 56.40L916.39 53.14L914.70 49.89L913.01 46.63L911.31 43.38L909.61 40.12L907.91 36.87L906.21 33.61L904.50 30.35L902.80 27.10" stroke-dashoffset="0.75"/>
<path d="M902.80 613.10L903.65 609.85L904.50 606.59L905.36 603.33L906.21 600.08L907.06 596.82L907.90 593.57L908.75 590.31L909.60 587.06L910.44 583.80L911.28 580.55L912.12 577.29L912.95 574.03L913.79 570.78L914.61 567.52L915.44 564.27L916.26 561.01L917.08 557.76L917.89 554.50L918.70 551.24L919.50 547.99L920.30 544.73L921.09 541.48L921.88 538.22L922.66 534.97L923.44 531.71L924.21 528.46L924.97 525.20L925.73 521.94L926.47 518.69L927.22 515.43L927.95 512.18L928.68 508.92L929.40 505.67L930.11 502.41L930.81 499.16L931.50 495.90L932.19 492.64L932.86 489.39L933.53 486.13L934.19 482.88L934.84 479.62L935.48 476.37L936.10 473.11L936.72 469.86L937.33 466.60L937.93 463.34L938.51 460.09L939.09 456.83L939.66 453.58L940.21 450.32L940.75 447.07L941.28 443.81L941.80 440.56L942.31 437.30L942.80 434.04L943.28 430.79L943.76 427.53L944.21 424.28L944.66 421.02L945.09 417.77L945.51 414.51L945.92 411.26L946.31 408.00L946.69 404.74L947.06 401.49L947.41 398.23L947.75 394.98L948.08 391.72L948.39 388.47L948.69 385.21L948.97 381.96L949.24 378.70L949.50 375.44L949.74 372.19L949.97 368.93L950.18 365.68L950.38 362.42L950.57 359.17L950.74 355.91L950.89 352.66L951.03 349.40L951.16 346.14L951.27 342.89L951.37 339.63L951.45 336.38L951.51 333.12L951.57 329.87L951.60 326.61L951.63 323.36L951.63 320.10L951.63 316.84L951.60 313.59L951.57 310.33L951.51 307.08L951.45 303.82L951.37 300.57L951.27 297.31L951.16 294.06L951.03 290.80L950.89 287.54L950.74 284.29L950.57 281.03L950.38 277.78L950.18 274.52L949.97 271.27L949.74 268.01L949.50 264.76L949.24 261.50L948.97 258.24L948.69 254.99L948.39 251.73L948.08 248.48L947.75 245.22L947.41 241.97L947.06 238.71L946.69 235.46L946.31 232.20L945.92 228.94L945.51 225.69L945.09 222.43L944.66 219.18L944.21 215.92L943.76 212.67L943.28 209.41L942.80 206.16L942.31 202.90L941.80 199.64L941.28 196.39L940.75 193.13L940.21 189.88L939.66 186.62L939.09 183.37L938.51 180.11L937.93 176.86L937.33 173.60L936.72 170.34L936.10 167.09L935.48 163.83L934.84 160.58L934.19 157.32L933.53 154.07L932.86 150.81L932.19 147.56L931.50 144.30L930.81 141.04L930.11 137.79L929.40 134.53L928.68 131.28L927.95 128.02L927.22 124.77L926.47 121.51L925.73 118.26L924.97 115.00L924.21 111.74L923.44 108.49L922.66 105.23L921.88 101.98L921.09 98.72L920.30 95.47L919.50 92.21L918.70 88.96L917.89 85.70L917.08 82.44L916.26 79.19L915.44 75.93L914.61 72.68L913.79 69.42L912.95 66.17L912.12 62.91L911.28 59.65L910.44 56.40L909.60 53.14L908.75 49.89L907.90 46.63L907.06 43.38L906.21 40.12L905.36 36.87L904.50 33.61L903.65 30.35L902.80 27.10" stroke-dashoffset="0.75"/>
<path d="M902.00 613.10L902.00 609.85L902.00 606.59L902.00 603.33L902.00 600.08L902.00 596.82L902.00 593.57L902.00 590.31L902.00 587.06L902.00 583.80L902.00 580.55L902.00 577.29L902.00 574.03L902.00 570.78L902.00 567.52L902.00 564.27L902.00 561.01L902.00 557.76L902.00 554.50L902.00 551.24L902.00 547.99L902.00 544.73L902.00 541.48L902.00 538.22L902.00 534.97L902.00 531.71L902.00 528.46L902.00 525.20L902.00 521.94L902.00 518.69L902.00 515.43L902.00 512.18L902.00 508.92L902.00 505.67L902.00 502.41L902.00 499.16L902.00 495.90L902.00 492.64L902.00 489.39L902.00 486.13L902.00 482.88L902.00 479.62L902.00 476.37L902.00 473.11L902.00 469.86L902.00 466.60L902.00 463.34L902.00 460.09L902.00 456.83L902.00 453.58L902.00 450.32L902.00 447.07L902.00 443.81L902.00 440.56L902.00 437.30L902.00 434.04L902.00 430.79L902.00 427.53L902.00 424.28L902.00 421.02L902.00 417.77L902.00 414.51L902.00 411.26L902.00 408.00L902.00 404.74L902.00 401.49L902.00 398.23L902.00 394.98L902.00 391.72L902.00 388.47L902.00 385.21L902.00 381.96L902.00 378.70L902.00 375.44L902.00 372.19L902.00 368.93L902.00 365.68L902.00 362.42L902.00 359.17L902.00 355.91L902.00 352.66L902.00 349.40L902.00 346.14L902.00 342.89L902.00 339.63L902.00 336.38L902.00 333.12L902.00 329.87L902.00 326.61L902.00 323.36L902.00 320.10L902.00 316.84L902.00 313.59L902.00 310.33L902.00 307.08L902.00 303.82L902.00 300.57L902.00 297.31L902.00 294.06L902.00 290.80L902.00 287.54L902.00 284.29L902.00 281.03L902.00 277.78L902.00 274.52L902.00 271.27L902.00 268.01L902.00 264.76L902.00 261.50L902.00 258.24L902.00 254.99L902.00 251.73L902.00 248.48L902.00 245.22L902.00 241.97L902.00 238.71L902.00 235.46L902.00 232.20L902.00 228.94L902.00 225.69L902.00 222.43L902.00 219.18L902.00 215.92L902.00 212.67L902.00 209.41L902.00 206.16L902.00 202.90L902.00 199.64L902.00 196.39L902.00 193.13L902.00 189.88L902.00 186.62L902.00 183.37L902.00 180.11L902.00 176.86L902.00 173.60L902.00 170.34L902.00 167.09L902.00 163.83L902.00 160.58L902.00 157.32L902.00 154.07L902.00 150.81L902.00 147.56L902.00 144.30L902.00 141.04L902.00 137.79L902.00 134.53L902.00 131.28L902.00 128.02L902.00 124.77L902.00 121.51L902.00 118.26L902.00 115.00L902.00 111.74L902.00 108.49L902.00 105.23L902.00 101.98L902.00 98.72L902.00 95.47L902.00 92.21L902.00 88.96L902.00 85.70L902.00 82.44L902.00 79.19L902.00 75.93L902.00 72.68L902.00 69.42L902.00 66.17L902.00 62.91L902.00 59.65L902.00 56.40L902.00 53.14L902.00 49.89L902.00 46.63L902.00 43.38L902.00 40.12L902.00 36.87L902.00 33.61L902.00 30.35L902.00 27.10" stroke-dashoffset="0.75"/>
<path d="M902.80 613.10L901.95 609.85L901.10 606.59L900.24 603.33L899.39 600.08L898.54 596.82L897.70 593.57L896.85 590.31L896.00 587.06L895.16 583.80L894.32 580.55L893.48 577.29L892.65 574.03L891.81 570.78L890.99 567.52L890.16 564.27L889.34 561.01L888.52 557.76L887.71 554.50L886.90 551.24L886.10 547.99L885.30 544.73L884.51 541.48L883.72 538.22L882.94 534.97L882.16 531.71L881.39 528.46L880.63 525.20L879.87 521.94L879.13 518.69L878.38 515.43L877.65 512.18L876.92 508.92L876.20 505.67L875.49 502.41L874.79 499.16L874.10 495.90L873.41 492.64L872.74 489.39L872.07 486.13L871.41 482.88L870.76 479.62L870.12 476.37L869.50 473.11L868.88 469.86L868.27 466.60L867.67 463.34L867.09 460.09L866.51 456.83L865.94 453.58L865.39 450.32L864.85 447.07L864.32 443.81L863.80 440.56L863.29 437.30L862.80 434.04L862.32 430.79L861.84 427.53L861.39 424.28L860.94 421.02L860.51 417.77L860.09 414.51L859.68 411.26L859.29 408.00L858.91 404.74L858.54 401.49L858.19 398.23L857.85 394.98L857.52 391.72L857.21 388.47L856.91 385.21L856.63 381.96L856.36 378.70L856.10 375.44L855.86 372.19L855.63 368.93L855.42 365.68L855.22 362.42L855.03 359.17L854.86 355.91L854.71 352.66L854.57 349.40L854.44 346.14L854.33 342.89L854.23 339.63L854.15 336.38L854.09 333.12L854.03 329.87L854.00 326.61L853.97 323.36L853.97 320.10L853.97 316.84L854.00 313.59L854.03 310.33L854.09 307.08L854.15 303.82L854.23 300.57L854.33 297.31L854.44 294.06L854.57 290.80L854.71 287.54L854.86 284.29L855.03 281.03L855.22 277.78L855.42 274.52L855.63 271.27L855.86 268.01L856.10 264.76L856.36 261.50L856.63 258.24L856.91 254.99L857.21 251.73L857.52 248.48L857.85 245.22L858.19 241.97L858.54 238.71L858.91 235.46L859.29 232.20L859.68 228.94L860.09 225.69L860.51 222.43L860.94 219.18L861.39 215.92L861.84 212.67L862.32 209.41L862.80 206.16L863.29 202.90L863.80 199.64L864.32 196.39L864.85 193.13L865.39 189.88L865.94 186.62L866.51 183.37L867.09 180.11L867.67 176.86L868.27 173.60L868.88 170.34L869.50 167.09L870.12 163.83L870.76 160.58L871.41 157.32L872.07 154.07L872.74 150.81L873.41 147.56L874.10 144.30L874.79 141.04L875.49 137.79L876.20 134.53L876.92 131.28L877.65 128.02L878.38 124.77L879.13 121.51L879.87 118.26L880.63 115.00L881.39 111.74L882.16 108.49L882.94 105.23L883.72 101.98L884.51 98.72L885.30 95.47L886.10 92.21L886.90 88.96L887.71 85.70L888.52 82.44L889.34 79.19L890.16 75.93L890.99 72.68L891.81 69.42L892.65 66.17L893.48 62.91L894.32 59.65L895.16 56.40L896.00 53.14L896.85 49.89L897.70 46.63L898.54 43.38L899.39 40.12L900.24 36.87L901.10 33.61L901.95 30.35L902.80 27.10" stroke-dashoffset="0.75"/>
<path d="M902.80 613.10L901.10 609.85L899.39 606.59L897.69 603.33L895.99 600.08L894.29 596.82L892.59 593.57L890.90 590.31L889.21 587.06L887.52 583.80L885.84 580.55L884.16 577.29L882.49 574.03L880.83 570.78L879.17 567.52L877.52 564.27L875.88 561.01L874.24 557.76L872.62 554.50L871.00 551.24L869.40 547.99L867.80 544.73L866.21 541.48L864.64 538.22L863.08 534.97L861.52 531.71L859.99 528.46L858.46 525.20L856.95 521.94L855.45 518.69L853.97 515.43L852.50 512.18L851.04 508.92L849.61 505.67L848.19 502.41L846.78 499.16L845.39 495.90L844.02 492.64L842.67 489.39L841.34 486.13L840.02 482.88L838.72 479.62L837.45 476.37L836.19 473.11L834.95 469.86L833.74 466.60L832.54 463.34L831.37 460.09L830.22 456.83L829.09 453.58L827.98 450.32L826.90 447.07L825.84 443.81L824.80 440.56L823.79 437.30L822.80 434.04L821.83 430.79L820.89 427.53L819.97 424.28L819.08 421.02L818.22 417.77L817.38 414.51L816.57 411.26L815.78 408.00L815.02 404.74L814.28 401.49L813.58 398.23L812.90 394.98L812.24 391.72L811.62 388.47L811.02 385.21L810.45 381.96L809.91 378.70L809.40 375.44L808.92 372.19L808.46 368.93L808.03 365.68L807.64 362.42L807.27 359.17L806.93 355.91L806.62 352.66L806.34 349.40L806.08 346.14L805.86 342.89L805.67 339.63L805.50 336.38L805.37 333.12L805.27 329.87L805.19 326.61L805.15 323.36L805.13 320.10L805.15 316.84L805.19 313.59L805.27 310.33L805.37 307.08L805.50 303.82L805.67 300.57L805.86 297.31L806.08 294.06L806.34 290.80L806.62 287.54L806.93 284.29L807.27 281.03L807.64 277.78L808.03 274.52L808.46 271.27L808.92 268.01L809.40 264.76L809.91 261.50L810.45 258.24L811.02 254.99L811.62 251.73L812.24 248.48L812.90 245.22L813.58 241.97L814.28 238.71L815.02 235.46L815.78 232.20L816.57 228.94L817.38 225.69L818.22 222.43L819.08 219.18L819.97 215.92L820.89 212.67L821.83 209.41L822.80 206.16L823.79 202.90L824.80 199.64L825.84 196.39L826.90 193.13L827.98 189.88L829.09 186.62L830.22 183.37L831.37 180.11L832.54 176.86L833.74 173.60L834.95 170.34L836.19 167.09L837.45 163.83L838.72 160.58L840.02 157.32L841.34 154.07L842.67 150.81L844.02 147.56L845.39 144.30L846.78 141.04L848.19 137.79L849.61 134.53L851.04 131.28L852.50 128.02L853.97 124.77L855.45 121.51L856.95 118.26L858.46 115.00L859.99 111.74L861.52 108.49L863.08 105.23L864.64 101.98L866.21 98.72L867.80 95.47L869.40 92.21L871.00 88.96L872.62 85.70L874.24 82.44L875.88 79.19L877.52 75.93L879.17 72.68L880.83 69.42L882.49 66.17L884.16 62.91L885.84 59.65L887.52 56.40L889.21 53.14L890.90 49.89L892.59 46.63L894.29 43.38L895.99 40.12L897.69 36.87L899.39 33.61L901.10 30.35L902.80 27.10" stroke-dashoffset="0.75"/>
<path d="M902.80 613.10L900.24 609.85L897.69 606.59L895.13 603.33L892.58 600.08L890.03 596.82L887.49 593.57L884.95 590.31L882.41 587.06L879.88 583.80L877.36 580.55L874.85 577.29L872.34 574.03L869.84 570.78L867.36 567.52L864.88 564.27L862.42 561.01L859.97 557.76L857.53 554.50L855.10 551.24L852.69 547.99L850.30 544.73L847.92 541.48L845.56 538.22L843.21 534.97L840.89 531.71L838.58 528.46L836.29 525.20L834.02 521.94L831.78 518.69L829.55 515.43L827.35 512.18L825.17 508.92L823.01 505.67L820.88 502.41L818.77 499.16L816.69 495.90L814.63 492.64L812.61 489.39L810.60 486.13L808.63 482.88L806.69 479.62L804.77 476.37L802.89 473.11L801.03 469.86L799.21 466.60L797.42 463.34L795.66 460.09L793.93 456.83L792.23 453.58L790.57 450.32L788.95 447.07L787.36 443.81L785.80 440.56L784.28 437.30L782.79 434.04L781.35 430.79L779.93 427.53L778.56 424.28L777.22 421.02L775.93 417.77L774.67 414.51L773.45 411.26L772.27 408.00L771.13 404.74L770.03 401.49L768.97 398.23L767.95 394.98L766.97 391.72L766.03 388.47L765.13 385.21L764.28 381.96L763.47 378.70L762.70 375.44L761.97 372.19L761.29 368.93L760.65 365.68L760.05 362.42L759.50 359.17L758.99 355.91L758.53 352.66L758.10 349.40L757.73 346.14L757.39 342.89L757.10 339.63L756.86 336.38L756.66 333.12L756.50 329.87L756.39 326.61L756.32 323.36L756.30 320.10L756.32 316.84L756.39 313.59L756.50 310.33L756.66 307.08L756.86 303.82L757.10 300.57L757.39 297.31L757.73 294.06L758.10 290.80L758.53 287.54L758.99 284.29L759.50 281.03L760.05 277.78L760.65 274.52L761.29 271.27L761.97 268.01L762.70 264.76L763.47 261.50L764.28 258.24L765.13 254.99L766.03 251.73L766.97 248.48L767.95 245.22L768.97 241.97L770.03 238.71L771.13 235.46L772.27 232.20L773.45 228.94L774.67 225.69L775.93 222.43L777.22 219.18L778.56 215.92L779.93 212.67L781.35 209.41L782.79 206.16L784.28 202.90L785.80 199.64L787.36 196.39L788.95 193.13L790.57 189.88L792.23 186.62L793.93 183.37L795.66 180.11L797.42 176.86L799.21 173.60L801.03 170.34L802.89 167.09L804.77 163.83L806.69 160.58L808.63 157.32L810.60 154.07L812.61 150.81L814.63 147.56L816.69 144.30L818.77 141.04L820.88 137.79L823.01 134.53L825.17 131.28L827.35 128.02L829.55 124.77L831.78 121.51L834.02 118.26L836.29 115.00L838.58 111.74L840.89 108.49L843.21 105.23L845.56 101.98L847.92 98.72L850.30 95.47L852.69 92.21L855.10 88.96L857.53 85.70L859.97 82.44L862.42 79.19L864.88 75.93L867.36 72.68L869.84 69.42L872.34 66.17L874.85 62.91L877.36 59.65L879.88 56.40L882.41 53.14L884.95 49.89L887.49 46.63L890.03 43.38L892.58 40.12L895.13 36.87L897.69 33.61L900.24 30.35L902.80 27.10" stroke-dashoffset="0.75"/>
<path d="M902.80 613.10L899.39 609.85L895.98 606.59L892.58 603.33L889.17 600.08L885.78 596.82L882.38 593.57L878.99 590.31L875.61 587.06L872.24 583.80L868.88 580.55L865.53 577.29L862.19 574.03L858.86 570.78L855.54 567.52L852.24 564.27L848.96 561.01L845.69 557.76L842.44 554.50L839.21 551.24L835.99 547.99L832.80 544.73L829.63 541.48L826.48 538.22L823.35 534.97L820.25 531.71L817.17 528.46L814.12 525.20L811.10 521.94L808.10 518.69L805.13 515.43L802.20 512.18L799.29 508.92L796.41 505.67L793.57 502.41L790.76 499.16L787.99 495.90L785.25 492.64L782.54 489.39L779.87 486.13L777.24 482.88L774.65 479.62L772.10 476.37L769.58 473.11L767.11 469.86L764.68 466.60L762.29 463.34L759.94 460.09L757.64 456.83L755.38 453.58L753.17 450.32L751.00 447.07L748.87 443.81L746.80 440.56L744.77 437.30L742.79 434.04L740.86 430.79L738.98 427.53L737.15 424.28L735.37 421.02L733.64 417.77L731.96 414.51L730.33 411.26L728.76 408.00L727.24 404.74L725.77 401.49L724.35 398.23L722.99 394.98L721.69 391.72L720.44 388.47L719.25 385.21L718.11 381.96L717.03 378.70L716.00 375.44L715.03 372.19L714.12 368.93L713.27 365.68L712.47 362.42L711.73 359.17L711.06 355.91L710.43 352.66L709.87 349.40L709.37 346.14L708.92 342.89L708.54 339.63L708.21 336.38L707.94 333.12L707.73 329.87L707.59 326.61L707.50 323.36L707.47 320.10L707.50 316.84L707.59 313.59L707.73 310.33L707.94 307.08L708.21 303.82L708.54 300.57L708.92 297.31L709.37 294.06L709.87 290.80L710.43 287.54L711.06 284.29L711.73 281.03L712.47 277.78L713.27 274.52L714.12 271.27L715.03 268.01L716.00 264.76L717.03 261.50L718.11 258.24L719.25 254.99L720.44 251.73L721.69 248.48L722.99 245.22L724.35 241.97L725.77 238.71L727.24 235.46L728.76 232.20L730.33 228.94L731.96 225.69L733.64 222.43L735.37 219.18L737.15 215.92L738.98 212.67L740.86 209.41L742.79 206.16L744.77 202.90L746.80 199.64L748.87 196.39L751.00 193.13L753.17 189.88L755.38 186.62L757.64 183.37L759.94 180.11L762.29 176.86L764.68 173.60L767.11 170.34L769.58 167.09L772.10 163.83L774.65 160.58L777.24 157.32L779.87 154.07L782.54 150.81L785.25 147.56L787.99 144.30L790.76 141.04L793.57 137.79L796.41 134.53L799.29 131.28L802.20 128.02L805.13 124.77L808.10 121.51L811.10 118.26L814.12 115.00L817.17 111.74L820.25 108.49L823.35 105.23L826.48 101.98L829.63 98.72L832.80 95.47L835.99 92.21L839.21 88.96L842.44 85.70L845.69 82.44L848.96 79.19L852.24 75.93L855.54 72.68L858.86 69.42L862.19 66.17L865.53 62.91L868.88 59.65L872.24 56.40L875.61 53.14L878.99 49.89L882.38 46.63L885.78 43.38L889.17 40.12L892.58 36.87L895.98 33.61L899.39 30.35L902.80 27.10" stroke-dashoffset="0.75"/>
<path d="M902.80 613.10L898.54 609.85L894.28 606.59L890.02 603.33L885.77 600.08L881.52 596.82L877.28 593.57L873.04 590.31L868.82 587.06L864.60 583.80L860.40 580.55L856.21 577.29L852.03 574.03L847.87 570.78L843.73 567.52L839.60 564.27L835.50 561.01L831.41 557.76L827.35 554.50L823.31 551.24L819.29 547.99L815.30 544.73L811.33 541.48L807.40 538.22L803.49 534.97L799.61 531.71L795.76 528.46L791.95 525.20L788.17 521.94L784.43 518.69L780.72 515.43L777.04 512.18L773.41 508.92L769.82 505.67L766.26 502.41L762.75 499.16L759.28 495.90L755.86 492.64L752.48 489.39L749.14 486.13L745.85 482.88L742.61 479.62L739.42 476.37L736.28 473.11L733.19 469.86L730.15 466.60L727.16 463.34L724.23 460.09L721.35 456.83L718.52 453.58L715.76 450.32L713.05 447.07L710.39 443.81L707.80 440.56L705.26 437.30L702.79 434.04L700.38 430.79L698.02 427.53L695.73 424.28L693.51 421.02L691.35 417.77L689.25 414.51L687.21 411.26L685.25 408.00L683.34 404.74L681.51 401.49L679.74 398.23L678.04 394.98L676.41 391.72L674.85 388.47L673.36 385.21L671.94 381.96L670.58 378.70L669.30 375.44L668.09 372.19L666.95 368.93L665.89 365.68L664.89 362.42L663.97 359.17L663.12 355.91L662.34 352.66L661.64 349.40L661.01 346.14L660.45 342.89L659.97 339.63L659.56 336.38L659.23 333.12L658.97 329.87L658.78 326.61L658.67 323.36L658.63 320.10L658.67 316.84L658.78 313.59L658.97 310.33L659.23 307.08L659.56 303.82L659.97 300.57L660.45 297.31L661.01 294.06L661.64 290.80L662.34 287.54L663.12 284.29L663.97 281.03L664.89 277.78L665.89 274.52L666.95 271.27L668.09 268.01L669.30 264.76L670.58 261.50L671.94 258.24L673.36 254.99L674.85 251.73L676.41 248.48L678.04 245.22L679.74 241.97L681.51 238.71L683.34 235.46L685.25 232.20L687.21 228.94L689.25 225.69L691.35 222.43L693.51 219.18L695.73 215.92L698.02 212.67L700.38 209.41L702.79 206.16L705.26 202.90L707.80 199.64L710.39 196.39L713.05 193.13L715.76 189.88L718.52 186.62L721.35 183.37L724.23 180.11L727.16 176.86L730.15 173.60L733.19 170.34L736.28 167.09L739.42 163.83L742.61 160.58L745.85 157.32L749.14 154.07L752.48 150.81L755.86 147.56L759.28 144.30L762.75 141.04L766.26 137.79L769.82 134.53L773.41 131.28L777.04 128.02L780.72 124.77L784.43 121.51L788.17 118.26L791.95 115.00L795.76 111.74L799.61 108.49L803.49 105.23L807.40 101.98L811.33 98.72L815.30 95.47L819.29 92.21L823.31 88.96L827.35 85.70L831.41 82.44L835.50 79.19L839.60 75.93L843.73 72.68L847.87 69.42L852.03 66.17L856.21 62.91L860.40 59.65L864.60 56.40L868.82 53.14L873.04 49.89L877.28 46.63L881.52 43.38L885.77 40.12L890.02 36.87L894.28 33.61L898.54 30.35L902.80 27.10" stroke-dashoffset="0.75"/>
<path d="M902.80 613.10L897.69 609.85L892.57 606.59L887.47 603.33L882.36 600.08L877.26 596.82L872.17 593.57L867.09 590.31L862.02 587.06L856.96 583.80L851.92 580.55L846.89 577.29L841.88 574.03L836.89 570.78L831.92 567.52L826.97 564.27L822.04 561.01L817.13 557.76L812.26 554.50L807.41 551.24L802.59 547.99L797.80 544.73L793.04 541.48L788.32 538.22L783.63 534.97L778.97 531.71L774.36 528.46L769.78 525.20L765.24 521.94L760.75 518.69L756.30 515.43L751.89 512.18L747.53 508.92L743.22 505.67L738.96 502.41L734.74 499.16L730.58 495.90L726.47 492.64L722.41 489.39L718.41 486.13L714.46 482.88L710.57 479.62L706.74 476.37L702.97 473.11L699.26 469.86L695.62 466.60L692.03 463.34L688.51 460.09L685.06 456.83L681.67 453.58L678.35 450.32L675.10 447.07L671.91 443.81L668.80 440.56L665.76 437.30L662.79 434.04L659.89 430.79L657.07 427.53L654.32 424.28L651.65 421.02L649.05 417.77L646.54 414.51L644.10 411.26L641.73 408.00L639.45 404.74L637.25 401.49L635.13 398.23L633.09 394.98L631.13 391.72L629.26 388.47L627.47 385.21L625.76 381.96L624.14 378.70L622.60 375.44L621.15 372.19L619.78 368.93L618.50 365.68L617.31 362.42L616.20 359.17L615.18 355.91L614.25 352.66L613.41 349.40L612.65 346.14L611.98 342.89L611.40 339.63L610.91 336.38L610.51 333.12L610.20 329.87L609.98 326.61L609.84 323.36L609.80 320.10L609.84 316.84L609.98 313.59L610.20 310.33L610.51 307.08L610.91 303.82L611.40 300.57L611.98 297.31L612.65 294.06L613.41 290.80L614.25 287.54L615.18 284.29L616.20 281.03L617.31 277.78L618.50 274.52L619.78 271.27L621.15 268.01L622.60 264.76L624.14 261.50L625.76 258.24L627.47 254.99L629.26 251.73L631.13 248.48L633.09 245.22L635.13 241.97L637.25 238.71L639.45 235.46L641.73 232.20L644.10 228.94L646.54 225.69L649.05 222.43L651.65 219.18L654.32 215.92L657.07 212.67L659.89 209.41L662.79 206.16L665.76 202.90L668.80 199.64L671.91 196.39L675.10 193.13L678.35 189.88L681.67 186.62L685.06 183.37L688.51 180.11L692.03 176.86L695.62 173.60L699.26 170.34L702.97 167.09L706.74 163.83L710.57 160.58L714.46 157.32L718.41 154.07L722.41 150.81L726.47 147.56L730.58 144.30L734.74 141.04L738.96 137.79L743.22 134.53L747.53 131.28L751.89 128.02L756.30 124.77L760.75 121.51L765.24 118.26L769.78 115.00L774.36 111.74L778.97 108.49L783.63 105.23L788.32 101.98L793.04 98.72L797.80 95.47L802.59 92.21L807.41 88.96L812.26 85.70L817.13 82.44L822.04 79.19L826.97 75.93L831.92 72.68L836.89 69.42L841.88 66.17L846.89 62.91L851.92 59.65L856.96 56.40L862.02 53.14L867.09 49.89L872.17 46.63L877.26 43.38L882.36 40.12L887.47 36.87L892.57 33.61L897.69 30.35L902.80 27.10" stroke-dashoffset="0.75"/>
<path d="M902.80 613.10L896.83 609.85L890.87 606.59L884.91 603.33L878.95 600.08L873.01 596.82L867.07 593.57L861.14 590.31L855.23 587.06L849.33 583.80L843.44 580.55L837.57 577.29L831.73 574.03L825.90 570.78L820.10 567.52L814.33 564.27L808.58 561.01L802.86 557.76L797.17 554.50L791.51 551.24L785.89 547.99L780.30 544.73L774.75 541.48L769.23 538.22L763.76 534.97L758.33 531.71L752.95 528.46L747.61 525.20L742.32 521.94L737.08 518.69L731.88 515.43L726.74 512.18L721.66 508.92L716.62 505.67L711.65 502.41L706.73 499.16L701.87 495.90L697.08 492.64L692.35 489.39L687.68 486.13L683.07 482.88L678.54 479.62L674.07 476.37L669.67 473.11L665.34 469.86L661.09 466.60L656.91 463.34L652.80 460.09L648.77 456.83L644.81 453.58L640.94 450.32L637.15 447.07L633.43 443.81L629.80 440.56L626.25 437.30L622.79 434.04L619.41 430.79L616.11 427.53L612.91 424.28L609.79 421.02L606.76 417.77L603.83 414.51L600.98 411.26L598.22 408.00L595.56 404.74L592.99 401.49L590.52 398.23L588.14 394.98L585.86 391.72L583.67 388.47L581.58 385.21L579.59 381.96L577.70 378.70L575.90 375.44L574.21 372.19L572.61 368.93L571.12 365.68L569.73 362.42L568.44 359.17L567.25 355.91L566.16 352.66L565.17 349.40L564.29 346.14L563.51 342.89L562.84 339.63L562.27 336.38L561.80 333.12L561.43 329.87L561.17 326.61L561.02 323.36L560.97 320.10L561.02 316.84L561.17 313.59L561.43 310.33L561.80 307.08L562.27 303.82L562.84 300.57L563.51 297.31L564.29 294.06L565.17 290.80L566.16 287.54L567.25 284.29L568.44 281.03L569.73 277.78L571.12 274.52L572.61 271.27L574.21 268.01L575.90 264.76L577.70 261.50L579.59 258.24L581.58 254.99L583.67 251.73L585.86 248.48L588.14 245.22L590.52 241.97L592.99 238.71L595.56 235.46L598.22 232.20L600.98 228.94L603.83 225.69L606.76 222.43L609.79 219.18L612.91 215.92L616.11 212.67L619.41 209.41L622.79 206.16L626.25 202.90L629.80 199.64L633.43 196.39L637.15 193.13L640.94 189.88L644.81 186.62L648.77 183.37L652.80 180.11L656.91 176.86L661.09 173.60L665.34 170.34L669.67 167.09L674.07 163.83L678.54 160.58L683.07 157.32L687.68 154.07L692.35 150.81L697.08 147.56L701.87 144.30L706.73 141.04L711.65 137.79L716.62 134.53L721.66 131.28L726.74 128.02L731.88 124.77L737.08 121.51L742.32 118.26L747.61 115.00L752.95 111.74L758.33 108.49L763.76 105.23L769.23 101.98L774.75 98.72L780.30 95.47L785.89 92.21L791.51 88.96L797.17 85.70L802.86 82.44L808.58 79.19L814.33 75.93L820.10 72.68L825.90 69.42L831.73 66.17L837.57 62.91L843.44 59.65L849.33 56.40L855.23 53.14L861.14 49.89L867.07 46.63L873.01 43.38L878.95 40.12L884.91 36.87L890.87 33.61L896.83 30.35L902.80 27.10" stroke-dashoffset="0.75"/>
<path d="M902.80 613.10L895.98 609.85L889.17 606.59L882.35 603.33L875.55 600.08L868.75 596.82L861.96 593.57L855.19 590.31L848.43 587.06L841.69 583.80L834.96 580.55L828.26 577.29L821.58 574.03L814.92 570.78L808.29 567.52L801.69 564.27L795.12 561.01L788.58 557.76L782.08 554.50L775.61 551.24L769.18 547.99L762.80 544.73L756.45 541.48L750.15 538.22L743.90 534.97L737.70 531.71L731.54 528.46L725.44 525.20L719.39 521.94L713.40 518.69L707.47 515.43L701.59 512.18L695.78 508.92L690.03 505.67L684.34 502.41L678.72 499.16L673.17 495.90L667.69 492.64L662.28 489.39L656.94 486.13L651.68 482.88L646.50 479.62L641.39 476.37L636.37 473.11L631.42 469.86L626.56 466.60L621.78 463.34L617.08 460.09L612.48 456.83L607.96 453.58L603.53 450.32L599.19 447.07L594.95 443.81L590.80 440.56L586.74 437.30L582.78 434.04L578.92 430.79L575.16 427.53L571.50 424.28L567.93 421.02L564.47 417.77L561.11 414.51L557.86 411.26L554.71 408.00L551.67 404.74L548.73 401.49L545.91 398.23L543.19 394.98L540.58 391.72L538.08 388.47L535.69 385.21L533.42 381.96L531.25 378.70L529.20 375.44L527.27 372.19L525.44 368.93L523.74 365.68L522.15 362.42L520.67 359.17L519.31 355.91L518.07 352.66L516.94 349.40L515.93 346.14L515.04 342.89L514.27 339.63L513.62 336.38L513.08 333.12L512.67 329.87L512.37 326.61L512.19 323.36L512.13 320.10L512.19 316.84L512.37 313.59L512.67 310.33L513.08 307.08L513.62 303.82L514.27 300.57L515.04 297.31L515.93 294.06L516.94 290.80L518.07 287.54L519.31 284.29L520.67 281.03L522.15 277.78L523.74 274.52L525.44 271.27L527.27 268.01L529.20 264.76L531.25 261.50L533.42 258.24L535.69 254.99L538.08 251.73L540.58 248.48L543.19 245.22L545.91 241.97L548.73 238.71L551.67 235.46L554.71 232.20L557.86 228.94L561.11 225.69L564.47 222.43L567.93 219.18L571.50 215.92L575.16 212.67L578.92 209.41L582.78 206.16L586.74 202.90L590.80 199.64L594.95 196.39L599.19 193.13L603.53 189.88L607.96 186.62L612.48 183.37L617.08 180.11L621.78 176.86L626.56 173.60L631.42 170.34L636.37 167.09L641.39 163.83L646.50 160.58L651.68 157.32L656.94 154.07L662.28 150.81L667.69 147.56L673.17 144.30L678.72 141.04L684.34 137.79L690.03 134.53L695.78 131.28L701.59 128.02L707.47 124.77L713.40 121.51L719.39 118.26L725.44 115.00L731.54 111.74L737.70 108.49L743.90 105.23L750.15 101.98L756.45 98.72L762.80 95.47L769.18 92.21L775.61 88.96L782.08 85.70L788.58 82.44L795.12 79.19L801.69 75.93L808.29 72.68L814.92 69.42L821.58 66.17L828.26 62.91L834.96 59.65L841.69 56.40L848.43 53.14L855.19 49.89L861.96 46.63L868.75 43.38L875.55 40.12L882.35 36.87L889.17 33.61L895.98 30.35L902.80 27.10" stroke-dashoffset="0.75"/>
<path d="M902.80 613.10L895.13 609.85L887.46 606.59L879.80 603.33L872.14 600.08L864.49 596.82L856.86 593.57L849.24 590.31L841.63 587.06L834.05 583.80L826.48 580.55L818.94 577.29L811.42 574.03L803.93 570.78L796.48 567.52L789.05 564.27L781.66 561.01L774.30 557.76L766.99 554.50L759.71 551.24L752.48 547.99L745.30 544.73L738.16 541.48L731.07 538.22L724.04 534.97L717.06 531.71L710.14 528.46L703.27 525.20L696.47 521.94L689.73 518.69L683.05 515.43L676.44 512.18L669.90 508.92L663.43 505.67L657.03 502.41L650.71 499.16L644.47 495.90L638.30 492.64L632.22 489.39L626.21 486.13L620.29 482.88L614.46 479.62L608.72 476.37L603.06 473.11L597.50 469.86L592.03 466.60L586.65 463.34L581.37 460.09L576.19 456.83L571.10 453.58L566.12 450.32L561.24 447.07L556.47 443.81L551.80 440.56L547.24 437.30L542.78 434.04L538.44 430.79L534.20 427.53L530.08 424.28L526.07 421.02L522.18 417.77L518.40 414.51L514.74 411.26L511.20 408.00L507.78 404.74L504.48 401.49L501.30 398.23L498.24 394.98L495.30 391.72L492.49 388.47L489.80 385.21L487.24 381.96L484.81 378.70L482.50 375.44L480.32 372.19L478.27 368.93L476.35 365.68L474.56 362.42L472.90 359.17L471.37 355.91L469.98 352.66L468.71 349.40L467.58 346.14L466.58 342.89L465.71 339.63L464.97 336.38L464.37 333.12L463.90 329.87L463.57 326.61L463.37 323.36L463.30 320.10L463.37 316.84L463.57 313.59L463.90 310.33L464.37 307.08L464.97 303.82L465.71 300.57L466.58 297.31L467.58 294.06L468.71 290.80L469.98 287.54L471.37 284.29L472.90 281.03L474.56 277.78L476.35 274.52L478.27 271.27L480.32 268.01L482.50 264.76L484.81 261.50L487.24 258.24L489.80 254.99L492.49 251.73L495.30 248.48L498.24 245.22L501.30 241.97L504.48 238.71L507.78 235.46L511.20 232.20L514.74 228.94L518.40 225.69L522.18 222.43L526.07 219.18L530.08 215.92L534.20 212.67L538.44 209.41L542.78 206.16L547.24 202.90L551.80 199.64L556.47 196.39L561.24 193.13L566.12 189.88L571.10 186.62L576.19 183.37L581.37 180.11L586.65 176.86L592.03 173.60L597.50 170.34L603.06 167.09L608.72 163.83L614.46 160.58L620.29 157.32L626.21 154.07L632.22 150.81L638.30 147.56L644.47 144.30L650.71 141.04L657.03 137.79L663.43 134.53L669.90 131.28L676.44 128.02L683.05 124.77L689.73 121.51L696.47 118.26L703.27 115.00L710.14 111.74L717.06 108.49L724.04 105.23L731.07 101.98L738.16 98.72L745.30 95.47L752.48 92.21L759.71 88.96L766.99 85.70L774.30 82.44L781.66 79.19L789.05 75.93L796.48 72.68L803.93 69.42L811.42 66.17L818.94 62.91L826.48 59.65L834.05 56.40L841.63 53.14L849.24 49.89L856.86 46.63L864.49 43.38L872.14 40.12L879.80 36.87L887.46 33.61L895.13 30.35L902.80 27.10" stroke-dashoffset="0.75"/>
<path d="M902.80 613.10L894.28 609.85L885.76 606.59L877.24 603.33L868.74 600.08L860.24 596.82L851.76 593.57L843.29 590.31L834.84 587.06L826.41 583.80L818.00 580.55L809.62 577.29L801.27 574.03L792.95 570.78L784.66 567.52L776.41 564.27L768.20 561.01L760.02 557.76L751.90 554.50L743.81 551.24L735.78 547.99L727.80 544.73L719.87 541.48L711.99 538.22L704.18 534.97L696.42 531.71L688.73 528.46L681.10 525.20L673.54 521.94L666.05 518.69L658.63 515.43L651.29 512.18L644.02 508.92L636.83 505.67L629.73 502.41L622.70 499.16L615.76 495.90L608.91 492.64L602.15 489.39L595.48 486.13L588.90 482.88L582.42 479.62L576.04 476.37L569.76 473.11L563.57 469.86L557.50 466.60L551.52 463.34L545.65 460.09L539.90 456.83L534.25 453.58L528.71 450.32L523.29 447.07L517.99 443.81L512.80 440.56L507.73 437.30L502.78 434.04L497.95 430.79L493.25 427.53L488.67 424.28L484.22 421.02L479.89 417.77L475.69 414.51L471.63 411.26L467.69 408.00L463.89 404.74L460.22 401.49L456.68 398.23L453.29 394.98L450.02 391.72L446.90 388.47L443.92 385.21L441.07 381.96L438.37 378.70L435.80 375.44L433.38 372.19L431.11 368.93L428.97 365.68L426.98 362.42L425.14 359.17L423.44 355.91L421.88 352.66L420.48 349.40L419.22 346.14L418.11 342.89L417.14 339.63L416.32 336.38L415.66 333.12L415.13 329.87L414.76 326.61L414.54 323.36L414.47 320.10L414.54 316.84L414.76 313.59L415.13 310.33L415.66 307.08L416.32 303.82L417.14 300.57L418.11 297.31L419.22 294.06L420.48 290.80L421.88 287.54L423.44 284.29L425.14 281.03L426.98 277.78L428.97 274.52L431.11 271.27L433.38 268.01L435.80 264.76L438.37 261.50L441.07 258.24L443.92 254.99L446.90 251.73L450.02 248.48L453.29 245.22L456.68 241.97L460.22 238.71L463.89 235.46L467.69 232.20L471.63 228.94L475.69 225.69L479.89 222.43L484.22 219.18L488.67 215.92L493.25 212.67L497.95 209.41L502.78 206.16L507.73 202.90L512.80 199.64L517.99 196.39L523.29 193.13L528.71 189.88L534.25 186.62L539.90 183.37L545.65 180.11L551.52 176.86L557.50 173.60L563.57 170.34L569.76 167.09L576.04 163.83L582.42 160.58L588.90 157.32L595.48 154.07L602.15 150.81L608.91 147.56L615.76 144.30L622.70 141.04L629.73 137.79L636.83 134.53L644.02 131.28L651.29 128.02L658.63 124.77L666.05 121.51L673.54 118.26L681.10 115.00L688.73 111.74L696.42 108.49L704.18 105.23L711.99 101.98L719.87 98.72L727.80 95.47L735.78 92.21L743.81 88.96L751.90 85.70L760.02 82.44L768.20 79.19L776.41 75.93L784.66 72.68L792.95 69.42L801.27 66.17L809.62 62.91L818.00 59.65L826.41 56.40L834.84 53.14L843.29 49.89L851.76 46.63L860.24 43.38L868.74 40.12L877.24 36.87L885.76 33.61L894.28 30.35L902.80 27.10" stroke-dashoffset="0.75"/>
<path d="M902.80 613.10L893.43 609.85L884.05 606.59L874.69 603.33L865.33 600.08L855.98 596.82L846.65 593.57L837.34 590.31L828.04 587.06L818.77 583.80L809.52 580.55L800.30 577.29L791.12 574.03L781.96 570.78L772.85 567.52L763.77 564.27L754.74 561.01L745.75 557.76L736.81 554.50L727.92 551.24L719.08 547.99L710.30 544.73L701.57 541.48L692.91 538.22L684.31 534.97L675.78 531.71L667.32 528.46L658.93 525.20L650.61 521.94L642.38 518.69L634.22 515.43L626.14 512.18L618.14 508.92L610.24 505.67L602.42 502.41L594.69 499.16L587.06 495.90L579.52 492.64L572.09 489.39L564.75 486.13L557.52 482.88L550.39 479.62L543.36 476.37L536.45 473.11L529.65 469.86L522.96 466.60L516.39 463.34L509.94 460.09L503.61 456.83L497.39 453.58L491.31 450.32L485.34 447.07L479.51 443.81L473.80 440.56L468.22 437.30L462.78 434.04L457.47 430.79L452.29 427.53L447.26 424.28L442.36 421.02L437.60 417.77L432.98 414.51L428.51 411.26L424.18 408.00L420.00 404.74L415.96 401.49L412.07 398.23L408.33 394.98L404.75 391.72L401.31 388.47L398.03 385.21L394.90 381.96L391.92 378.70L389.10 375.44L386.44 372.19L383.94 368.93L381.59 365.68L379.40 362.42L377.37 359.17L375.50 355.91L373.79 352.66L372.25 349.40L370.86 346.14L369.64 342.89L368.57 339.63L367.68 336.38L366.94 333.12L366.37 329.87L365.96 326.61L365.71 323.36L365.63 320.10L365.71 316.84L365.96 313.59L366.37 310.33L366.94 307.08L367.68 303.82L368.57 300.57L369.64 297.31L370.86 294.06L372.25 290.80L373.79 287.54L375.50 284.29L377.37 281.03L379.40 277.78L381.59 274.52L383.94 271.27L386.44 268.01L389.10 264.76L391.92 261.50L394.90 258.24L398.03 254.99L401.31 251.73L404.75 248.48L408.33 245.22L412.07 241.97L415.96 238.71L420.00 235.46L424.18 232.20L428.51 228.94L432.98 225.69L437.60 222.43L442.36 219.18L447.26 215.92L452.29 212.67L457.47 209.41L462.78 206.16L468.22 202.90L473.80 199.64L479.51 196.39L485.34 193.13L491.31 189.88L497.39 186.62L503.61 183.37L509.94 180.11L516.39 176.86L522.96 173.60L529.65 170.34L536.45 167.09L543.36 163.83L550.39 160.58L557.52 157.32L564.75 154.07L572.09 150.81L579.52 147.56L587.06 144.30L594.69 141.04L602.42 137.79L610.24 134.53L618.14 131.28L626.14 128.02L634.22 124.77L642.38 121.51L650.61 118.26L658.93 115.00L667.32 111.74L675.78 108.49L684.31 105.23L692.91 101.98L701.57 98.72L710.30 95.47L719.08 92.21L727.92 88.96L736.81 85.70L745.75 82.44L754.74 79.19L763.77 75.93L772.85 72.68L781.96 69.42L791.12 66.17L800.30 62.91L809.52 59.65L818.77 56.40L828.04 53.14L837.34 49.89L846.65 46.63L855.98 43.38L865.33 40.12L874.69 36.87L884.05 33.61L893.43 30.35L902.80 27.10" stroke-dashoffset="0.75"/>
<path d="M902.80 613.10L892.57 609.85L882.35 606.59L872.13 603.33L861.92 600.08L851.73 596.82L841.55 593.57L831.38 590.31L821.24 587.06L811.13 583.80L801.04 580.55L790.99 577.29L780.96 574.03L770.98 570.78L761.03 567.52L751.13 564.27L741.28 561.01L731.47 557.76L721.72 554.50L712.02 551.24L702.38 547.99L692.80 544.73L683.28 541.48L673.83 538.22L664.45 534.97L655.15 531.71L645.91 528.46L636.76 525.20L627.69 521.94L618.70 518.69L609.80 515.43L600.99 512.18L592.27 508.92L583.64 505.67L575.11 502.41L566.68 499.16L558.36 495.90L550.14 492.64L542.02 489.39L534.02 486.13L526.13 482.88L518.35 479.62L510.69 476.37L503.15 473.11L495.73 469.86L488.43 466.60L481.27 463.34L474.23 460.09L467.32 456.83L460.54 453.58L453.90 450.32L447.39 447.07L441.02 443.81L434.80 440.56L428.72 437.30L422.78 434.04L416.98 430.79L411.34 427.53L405.84 424.28L400.50 421.02L395.31 417.77L390.27 414.51L385.39 411.26L380.67 408.00L376.11 404.74L371.70 401.49L367.46 398.23L363.38 394.98L359.47 391.72L355.72 388.47L352.14 385.21L348.72 381.96L345.48 378.70L342.40 375.44L339.50 372.19L336.77 368.93L334.21 365.68L331.82 362.42L329.60 359.17L327.57 355.91L325.70 352.66L324.01 349.40L322.50 346.14L321.17 342.89L320.01 339.63L319.03 336.38L318.23 333.12L317.60 329.87L317.16 326.61L316.89 323.36L316.80 320.10L316.89 316.84L317.16 313.59L317.60 310.33L318.23 307.08L319.03 303.82L320.01 300.57L321.17 297.31L322.50 294.06L324.01 290.80L325.70 287.54L327.57 284.29L329.60 281.03L331.82 277.78L334.21 274.52L336.77 271.27L339.50 268.01L342.40 264.76L345.48 261.50L348.72 258.24L352.14 254.99L355.72 251.73L359.47 248.48L363.38 245.22L367.46 241.97L371.70 238.71L376.11 235.46L380.67 232.20L385.39 228.94L390.27 225.69L395.31 222.43L400.50 219.18L405.84 215.92L411.34 212.67L416.98 209.41L422.78 206.16L428.72 202.90L434.80 199.64L441.02 196.39L447.39 193.13L453.90 189.88L460.54 186.62L467.32 183.37L474.23 180.11L481.27 176.86L488.43 173.60L495.73 170.34L503.15 167.09L510.69 163.83L518.35 160.58L526.13 157.32L534.02 154.07L542.02 150.81L550.14 147.56L558.36 144.30L566.68 141.04L575.11 137.79L583.64 134.53L592.27 131.28L600.99 128.02L609.80 124.77L618.70 121.51L627.69 118.26L636.76 115.00L645.91 111.74L655.15 108.49L664.45 105.23L673.83 101.98L683.28 98.72L692.80 95.47L702.38 92.21L712.02 88.96L721.72 85.70L731.47 82.44L741.28 79.19L751.13 75.93L761.03 72.68L770.98 69.42L780.96 66.17L790.99 62.91L801.04 59.65L811.13 56.40L821.24 53.14L831.38 49.89L841.55 46.63L851.73 43.38L861.92 40.12L872.13 36.87L882.35 33.61L892.57 30.35L902.80 27.10" stroke-dashoffset="0.75"/>
</g>
<path d="M420.0 215.0L418.5 215.7L416.9 216.3L415.4 217.0L413.9 217.7L412.4 218.4L410.9 219.0L409.4 219.7" stroke="#8c8c8c" stroke-width="1.389"/>
<path d="M878.7 363.4L875.9 358.5L873.1 353.5L870.4 348.6L867.6 343.7L864.9 338.7L862.2 333.8L859.5 328.8L856.9 323.9L854.3 318.9L851.8 314.0L849.2 309.0L846.7 304.1L844.3 299.1L841.9 294.2L839.5 289.2L837.2 284.3L834.9 279.4L832.7 274.5L830.5 269.5L828.4 264.6L826.3 259.8L824.2 254.9L822.2 250.0L820.3 245.2L818.4 240.4L816.6 235.6L814.8 230.8L813.1 226.0L811.4 221.3L809.8 216.6L808.2 211.9L806.7 207.3L805.2 202.7L803.8 198.1L802.4 193.6L801.0 189.2L799.7 184.7L798.4 180.4L797.1 176.1L795.9 171.8L794.6 167.7L793.4 163.6L792.1 159.6L790.9 155.8L789.6 152.0L788.2 148.3L786.8 144.8L785.3 141.4L783.7 138.2L782.0 135.1L780.2 132.2L778.1 129.5L775.9 127.1L773.3 124.8L770.6 122.9L767.5 121.1L764.0 119.7L760.1 118.5L755.8 117.7L751.1 117.2L745.8 117.0L740.1 117.1L733.8 117.5L726.9 118.2L719.6 119.3L711.7 120.6L703.2 122.2L694.3 124.1L684.9 126.3L675.1 128.7L664.9 131.3L654.3 134.1L643.3 137.1L632.1 140.3L620.6 143.6L608.9 147.1L597.1 150.7L585.1 154.4L573.0 158.3L560.8 162.2L548.6 166.3L536.4 170.4L524.2 174.6L512.1 178.9L500.1 183.2L488.1 187.6L476.3 192.1L464.7 196.6L453.2 201.1L441.9 205.7L430.8 210.3L420.0 215.0" stroke="#808080" stroke-opacity="0.55" stroke-width="1.389" stroke-dasharray="1.389 2.292"/>
<path d="M372.2 247.8L373.3 247.9L374.4 248.1L375.4 248.3L376.5 248.4L377.6 248.6L378.6 248.7L379.7 248.9" stroke="#8c8c8c" stroke-width="1.389"/>
<path d="M1380.3 244.1L1385.8 244.0L1391.3 243.9L1396.9 243.9L1402.5 244.0L1408.3 244.1L1414.1 244.3L1420.0 244.6L1426.0 245.0L1432.1 245.4L1438.3 245.9" stroke="#808080" stroke-opacity="0.55" stroke-width="1.389" stroke-dasharray="1.389 2.292"/>
<path d="M362.7 246.5L367.5 247.1L372.2 247.8" stroke="#808080" stroke-opacity="0.55" stroke-width="1.389" stroke-dasharray="1.389 2.292"/>
<path d="M384.9 252.8L384.9 253.5L384.9 254.2L384.9 254.9L384.9 255.7L384.9 256.4L384.9 257.1L384.9 257.8" stroke="#8c8c8c" stroke-width="1.389"/>
<path d="M1078.6 216.1L1081.0 212.7L1083.3 209.3L1085.6 206.0L1088.0 202.8L1090.3 199.7L1092.7 196.7L1095.0 193.7L1097.4 190.9L1099.9 188.2L1102.4 185.5L1105.0 183.0L1107.7 180.6L1110.4 178.4L1113.3 176.3L1116.3 174.3L1119.5 172.4L1122.8 170.8L1126.3 169.2L1130.0 167.9L1133.9 166.7L1138.0 165.7L1142.4 164.8L1147.0 164.2L1151.8 163.7L1157.0 163.4L1162.4 163.3L1168.1 163.4L1174.2 163.7L1180.5 164.1L1187.1 164.7L1194.0 165.6L1201.2 166.6L1208.7 167.7L1216.5 169.1L1224.6 170.6L1232.9 172.2L1241.4 174.1L1250.2 176.0L1259.2 178.1L1268.4 180.4L1277.8 182.7L1287.4 185.2L1297.0 187.9L1306.9 190.6L1316.8 193.4L1326.7 196.3L1336.8 199.4L1346.9 202.5L1357.0 205.7L1367.1 208.9L1377.2 212.3L1387.2 215.7L1397.2 219.2L1407.1 222.7" stroke="#808080" stroke-opacity="0.55" stroke-width="1.389" stroke-dasharray="1.389 2.292"/>
<path d="M390.0 226.3L388.8 230.0L387.7 233.7L386.8 237.4L386.1 241.2L385.5 245.0L385.1 248.9L384.9 252.8" stroke="#808080" stroke-opacity="0.55" stroke-width="1.389" stroke-dasharray="1.389 2.292"/>
<path d="M426.9 251.9L424.7 252.2L422.4 252.5L420.2 252.8L417.9 253.2L415.6 253.5L413.4 253.8L411.1 254.2" stroke="#8c8c8c" stroke-width="1.389"/>
<path d="M886.0 359.5L880.8 357.5L875.5 355.4L870.3 353.2L865.1 351.1L859.8 348.9L854.6 346.7L849.4 344.5L844.2 342.3L839.0 340.0L833.8 337.7L828.6 335.4L823.5 333.1L818.3 330.8L813.2 328.5L808.0 326.2L802.9 323.9L797.8 321.6L792.7 319.2L787.7 316.9L782.6 314.6L777.6 312.3L772.6 309.9L767.6 307.6L762.6 305.3L757.6 303.0L752.7 300.8L747.8 298.5L742.9 296.3L738.0 294.0L733.2 291.8L728.4 289.7L723.6 287.5L718.8 285.4L714.0 283.3L709.3 281.2L704.5 279.1L699.8 277.1L695.1 275.1L690.4 273.2L685.7 271.3L681.1 269.4L676.4 267.6L671.8 265.8L667.1 264.1L662.5 262.4L657.8 260.7L653.2 259.1L648.5 257.6L643.8 256.1L639.1 254.7L634.4 253.3L629.7 252.0L625.0 250.7L620.2 249.6L615.5 248.4L610.6 247.4L605.8 246.4L600.9 245.4L596.0 244.6L591.0 243.8L586.0 243.1L580.9 242.4L575.8 241.9L570.6 241.4L565.4 241.0L560.1 240.6L554.7 240.3L549.3 240.1L543.8 240.0L538.3 240.0L532.7 240.0L527.0 240.1L521.2 240.3L515.4 240.6L509.5 240.9L503.5 241.3L497.4 241.8L491.3 242.4L485.2 243.0L478.9 243.7L472.6 244.5L466.2 245.4L459.8 246.3L453.3 247.3L446.8 248.3L440.2 249.5L433.6 250.7L426.9 251.9" stroke="#808080" stroke-opacity="0.55" stroke-width="1.389" stroke-dasharray="1.389 2.292"/>
<path d="M415.6 260.6L416.1 260.8L416.5 261.1L417.0 261.3L417.5 261.5L418.0 261.7L418.4 262.0L418.9 262.2" stroke="#8c8c8c" stroke-width="1.389"/>
<path d="M1345.8 232.1L1351.4 232.2L1357.1 232.3L1363.0 232.5L1369.0 232.8L1375.0 233.2L1381.2 233.6L1387.4 234.2L1393.8 234.8L1400.3 235.5L1406.9 236.3L1413.5 237.2L1420.3 238.1L1427.1 239.2L1434.0 240.3" stroke="#808080" stroke-opacity="0.55" stroke-width="1.389" stroke-dasharray="1.389 2.292"/>
<path d="M371.6 241.4L375.5 242.7L379.3 244.0L383.1 245.4L386.8 246.8L390.5 248.4L394.1 249.9L397.7 251.6L401.3 253.3L404.9 255.0L408.5 256.8L412.0 258.7L415.6 260.6" stroke="#808080" stroke-opacity="0.55" stroke-width="1.389" stroke-dasharray="1.389 2.292"/>
<path d="M508.9 222.8L506.5 223.9L504.1 224.9L501.7 226.0L499.3 227.1L496.9 228.1L494.6 229.2L492.2 230.3" stroke="#8c8c8c" stroke-width="1.389"/>
<path d="M941.5 318.0L937.9 313.7L934.3 309.4L930.7 305.0L927.1 300.7L923.5 296.4L919.8 292.1L916.2 287.8L912.6 283.5L908.9 279.3L905.2 275.0L901.6 270.8L897.9 266.6L894.3 262.4L890.6 258.2L887.0 254.1L883.3 250.0L879.7 245.9L876.1 241.9L872.5 237.9L868.9 233.9L865.3 230.0L861.7 226.1L858.1 222.2L854.6 218.5L851.0 214.7L847.5 211.1L844.0 207.5L840.4 203.9L836.9 200.4L833.4 197.1L829.9 193.8L826.4 190.5L822.8 187.4L819.3 184.4L815.7 181.5L812.1 178.7L808.5 176.0L804.8 173.5L801.1 171.1L797.3 168.8L793.4 166.7L789.5 164.7L785.4 162.9L781.2 161.3L777.0 159.8L772.5 158.5L768.0 157.5L763.2 156.6L758.3 155.9L753.2 155.4L747.9 155.1L742.4 155.0L736.7 155.1L730.8 155.4L724.6 156.0L718.2 156.7L711.6 157.6L704.7 158.7L697.7 160.0L690.4 161.5L682.9 163.2L675.2 165.0L667.3 167.0L659.2 169.1L650.9 171.4L642.5 173.8L634.0 176.4L625.3 179.1L616.5 181.9L607.6 184.9L598.7 187.9L589.7 191.0L580.7 194.2L571.6 197.6L562.5 201.0L553.5 204.4L544.4 208.0L535.5 211.6L526.5 215.3L517.7 219.0L508.9 222.8" stroke="#808080" stroke-opacity="0.55" stroke-width="1.389" stroke-dasharray="1.389 2.292"/>
<path d="M519.7 223.1L518.2 223.5L516.7 223.9L515.2 224.4L513.7 224.8L512.2 225.2L510.7 225.7L509.2 226.1" stroke="#8c8c8c" stroke-width="1.389"/>
<path d="M910.8 339.6L906.3 336.3L901.8 333.0L897.3 329.6L892.8 326.3L888.3 323.0L883.8 319.6L879.4 316.3L874.9 312.9L870.4 309.6L866.0 306.2L861.6 302.9L857.1 299.6L852.7 296.3L848.3 293.0L844.0 289.7L839.6 286.5L835.3 283.2L830.9 280.0L826.6 276.8L822.3 273.7L818.1 270.6L813.8 267.5L809.6 264.4L805.4 261.4L801.2 258.4L797.0 255.4L792.9 252.5L788.8 249.6L784.6 246.8L780.5 244.1L776.4 241.4L772.3 238.7L768.2 236.1L764.2 233.6L760.1 231.2L756.0 228.8L751.9 226.5L747.8 224.2L743.7 222.1L739.5 220.0L735.4 218.0L731.2 216.1L726.9 214.3L722.6 212.6L718.3 211.0L713.9 209.5L709.5 208.1L705.0 206.9L700.4 205.7L695.7 204.6L691.0 203.7L686.2 202.8L681.2 202.1L676.2 201.5L671.0 201.1L665.8 200.7L660.4 200.5L654.9 200.4L649.3 200.4L643.5 200.6L637.7 200.9L631.7 201.3L625.5 201.8L619.3 202.4L612.9 203.2L606.3 204.1L599.7 205.1L592.9 206.2L586.0 207.4L579.0 208.8L571.9 210.2L564.7 211.8L557.4 213.4L550.0 215.2L542.5 217.0L535.0 219.0L527.4 221.0L519.7 223.1" stroke="#808080" stroke-opacity="0.55" stroke-width="1.389" stroke-dasharray="1.389 2.292"/>
<path d="M494.4 277.2L493.5 277.0L492.7 276.8L491.8 276.6L490.9 276.4L490.0 276.2L489.2 276.0L488.3 275.8" stroke="#8c8c8c" stroke-width="1.389"/>
<path d="M880.7 366.2L875.2 365.6L869.6 364.9L864.0 364.1L858.4 363.3L852.8 362.5L847.3 361.7L841.7 360.8L836.1 359.8L830.5 358.9L824.9 357.9L819.4 356.8L813.8 355.8L808.2 354.7L802.6 353.5L797.0 352.4L791.4 351.2L785.9 350.0L780.3 348.7L774.7 347.5L769.1 346.2L763.6 344.9L758.0 343.6L752.4 342.2L746.9 340.8L741.4 339.5L735.8 338.1L730.3 336.6L724.8 335.2L719.3 333.8L713.8 332.3L708.3 330.8L702.8 329.4L697.3 327.9L691.9 326.4L686.5 324.9L681.0 323.4L675.6 321.9L670.2 320.4L664.8 318.9L659.5 317.4L654.1 315.9L648.8 314.4L643.5 312.9L638.2 311.4L632.9 310.0L627.6 308.5L622.4 307.0L617.1 305.6L611.9 304.1L606.7 302.7L601.5 301.3L596.3 299.9L591.2 298.5L586.0 297.2L580.9 295.9L575.8 294.5L570.6 293.2L565.5 292.0L560.4 290.7L555.4 289.5L550.3 288.3L545.2 287.1L540.1 286.0L535.1 284.9L530.0 283.8L524.9 282.8L519.8 281.7L514.8 280.8L509.7 279.8L504.6 278.9L499.5 278.0L494.4 277.2" stroke="#808080" stroke-opacity="0.55" stroke-width="1.389" stroke-dasharray="1.389 2.292"/>
<path d="M543.9 180.8L547.6 178.6L551.3 176.4L555.1 174.2L558.9 172.0L562.7 169.8L566.6 167.6L570.6 165.5L574.6 163.3L578.6 161.1L582.7 158.9L586.8 156.7L591.0 154.5L595.2 152.3L599.5 150.1L603.8 147.9L608.1 145.8L612.5 143.6L616.9 141.4L621.3 139.2L625.8 137.0L630.3 134.8L634.9 132.7L639.4 130.5L644.1 128.3L648.7 126.1L653.4 124.0L658.1 121.8L662.9 119.6L667.6 117.4L672.4 115.3L677.3 113.1L682.1 110.9L687.0 108.8L691.9 106.6L696.8 104.5L701.8 102.3L706.7 100.1L711.7 98.0L716.7 95.9L721.7 93.7L726.7 91.6L731.8 89.4L736.8 87.3L741.9 85.2L746.9 83.1L752.0 81.0L757.0 78.9L762.1 76.8L767.1 74.7L772.1 72.6L777.1 70.6L782.1 68.5L787.0 66.5L791.9 64.5L796.7 62.5L801.4 60.6L806.1 58.7L810.6 56.8" stroke="#8c8c8c" stroke-width="1.389"/>
<path d="M454.4 375.6L450.0 370.0L446.0 364.5L442.4 358.9L439.2 353.3L436.4 347.7L434.1 342.2L432.1 336.6L430.6 331.0L429.5 325.5L428.8 319.9L428.6 314.3L428.7 308.8L429.3 303.2L430.3 297.6L431.7 292.1L433.6 286.5L435.9 280.9L438.5 275.4L441.6 269.8L445.1 264.2L449.1 258.7L453.4 253.1L458.1 247.5L463.2 242.0L468.7 236.4L474.6 230.8L480.9 225.3L487.5 219.7L494.5 214.1L501.9 208.6L509.6 203.0L517.7 197.5L526.1 191.9L534.8 186.4L543.9 180.8" stroke="#808080" stroke-opacity="0.55" stroke-width="1.389" stroke-dasharray="1.389 2.292"/>
<path d="M568.3 176.1L570.2 176.8L572.0 177.5L573.7 178.3L575.4 179.1L577.0 180.0L578.5 180.9L580.0 181.9" stroke="#8c8c8c" stroke-width="1.389"/>
<path d="M1309.3 220.6L1309.7 217.4L1310.0 214.2L1310.3 211.2L1310.6 208.2L1311.0 205.3L1311.3 202.4L1311.8 199.7L1312.3 197.1L1312.9 194.5L1313.6 192.1L1314.5 189.8L1315.5 187.6L1316.7 185.5L1318.1 183.6L1319.7 181.8L1321.6 180.1L1323.7 178.6" stroke="#808080" stroke-opacity="0.55" stroke-width="1.389" stroke-dasharray="1.389 2.292"/>
<path d="M481.6 177.2L489.7 176.0L497.5 174.9L505.0 174.0L512.1 173.2L518.9 172.6L525.3 172.2L531.4 172.0L537.1 171.9L542.5 172.0L547.6 172.3L552.4 172.7L556.8 173.3L560.9 174.1L564.7 175.0L568.3 176.1" stroke="#808080" stroke-opacity="0.55" stroke-width="1.389" stroke-dasharray="1.389 2.292"/>
<path d="M596.9 166.4L597.1 167.4L597.3 168.5L597.5 169.6L597.6 170.7L597.7 171.9L597.7 173.0L597.8 174.2" stroke="#8c8c8c" stroke-width="1.389"/>
<path d="M1248.4 203.9L1247.6 200.2L1246.8 196.6L1245.9 193.1L1245.1 189.7L1244.3 186.3L1243.6 183.0L1242.9 179.9L1242.3 176.8L1241.8 173.9L1241.5 171.1L1241.3 168.4L1241.3 165.9L1241.6 163.5L1242.1 161.2L1242.9 159.1L1244.1 157.2L1245.6 155.5L1247.5 154.0L1249.8 152.6L1252.5 151.5L1255.8 150.5L1259.5 149.8" stroke="#808080" stroke-opacity="0.55" stroke-width="1.389" stroke-dasharray="1.389 2.292"/>
<path d="M549.9 149.3L556.2 149.0L562.0 148.9L567.3 149.0L572.1 149.4L576.3 149.9L580.1 150.7L583.5 151.7L586.4 152.9L588.8 154.3L591.0 155.9L592.7 157.6L594.2 159.6L595.3 161.7L596.2 164.0L596.9 166.4" stroke="#808080" stroke-opacity="0.55" stroke-width="1.389" stroke-dasharray="1.389 2.292"/>
<path d="M589.2 180.3L590.1 179.6L591.0 179.0L591.9 178.3L592.8 177.6L593.8 176.9L594.7 176.3L595.6 175.6" stroke="#8c8c8c" stroke-width="1.389"/>
<path d="M570.5 417.0L564.0 411.5L557.8 406.0L551.9 400.5L546.3 395.0L541.0 389.5L536.0 384.0L531.4 378.5L527.1 373.0L523.1 367.5L519.4 362.0L516.0 356.4L513.1 350.9L510.4 345.4L508.1 339.9L506.1 334.4L504.5 328.9L503.2 323.3L502.3 317.8L501.7 312.3L501.5 306.8L501.6 301.3L502.1 295.7L502.9 290.2L504.1 284.7L505.6 279.2L507.5 273.7L509.7 268.2L512.3 262.7L515.2 257.1L518.4 251.6L522.0 246.1L525.9 240.6L530.1 235.1L534.7 229.6L539.6 224.1L544.7 218.6L550.2 213.1L556.0 207.7L562.1 202.2L568.4 196.7L575.1 191.2L582.0 185.8L589.2 180.3" stroke="#808080" stroke-opacity="0.55" stroke-width="1.389" stroke-dasharray="1.389 2.292"/>
<path d="M591.7 190.6L590.1 191.1L588.5 191.5L586.8 192.0L585.2 192.5L583.6 192.9L581.9 193.4L580.3 193.9" stroke="#8c8c8c" stroke-width="1.389"/>
<path d="M919.7 331.8L915.9 327.8L912.0 323.8L908.1 319.8L904.2 315.8L900.3 311.8L896.4 307.8L892.5 303.8L888.6 299.8L884.7 295.8L880.9 291.9L877.0 287.9L873.1 284.0L869.3 280.0L865.5 276.1L861.7 272.2L857.9 268.4L854.1 264.5L850.3 260.7L846.6 256.9L842.9 253.2L839.2 249.5L835.5 245.8L831.8 242.1L828.2 238.5L824.6 235.0L821.0 231.5L817.4 228.0L813.8 224.7L810.2 221.3L806.7 218.1L803.2 214.9L799.6 211.7L796.1 208.7L792.5 205.7L789.0 202.8L785.4 200.0L781.8 197.3L778.2 194.7L774.6 192.2L770.9 189.9L767.2 187.6L763.4 185.5L759.5 183.4L755.6 181.6L751.6 179.8L747.5 178.2L743.2 176.8L738.9 175.5L734.4 174.3L729.8 173.3L725.1 172.5L720.2 171.8L715.1 171.3L709.9 171.0L704.4 170.9L698.8 170.9L693.0 171.1L687.0 171.5L680.8 172.0L674.4 172.7L667.7 173.6L660.9 174.6L653.9 175.8L646.7 177.2L639.3 178.7L631.8 180.3L624.1 182.1L616.2 184.1L608.2 186.1L600.0 188.3L591.7 190.6" stroke="#808080" stroke-opacity="0.55" stroke-width="1.389" stroke-dasharray="1.389 2.292"/>
<path d="M737.8 131.1L733.7 132.6L729.6 134.1L725.5 135.6L721.3 137.2L717.1 138.7L712.9 140.4L708.6 142.0" stroke="#8c8c8c" stroke-width="1.389"/>
<path d="M990.7 274.2L987.6 269.2L984.4 264.2L981.2 259.2L977.9 254.2L974.6 249.3L971.2 244.3L967.8 239.4L964.4 234.5L960.9 229.6L957.4 224.7L953.8 219.8L950.2 215.0L946.6 210.2L942.9 205.4L939.3 200.7L935.6 196.0L931.9 191.3L928.2 186.7L924.4 182.1L920.7 177.6L917.0 173.1L913.2 168.7L909.5 164.4L905.8 160.1L902.0 155.9L898.3 151.8L894.5 147.9L890.8 144.0L887.0 140.2L883.3 136.6L879.5 133.1L875.7 129.9L871.9 126.7L868.0 123.8L864.0 121.1L860.0 118.7L855.8 116.5L851.6 114.6L847.1 113.0L842.5 111.6L837.7 110.7L832.6 110.0L827.3 109.8L821.6 109.8L815.7 110.2L809.3 111.0L802.7 112.1L795.7 113.5L788.3 115.3L780.6 117.3L772.6 119.6L764.3 122.1L755.7 124.9L746.9 127.9L737.8 131.1" stroke="#808080" stroke-opacity="0.55" stroke-width="1.389" stroke-dasharray="1.389 2.292"/>
<path d="M734.4 101.1L732.2 102.1L730.1 103.0L727.9 104.0L725.8 104.9L723.7 105.9L721.5 106.8L719.4 107.8" stroke="#8c8c8c" stroke-width="1.389"/>
<path d="M1023.7 249.8L1022.0 244.2L1020.2 238.6L1018.3 233.0L1016.2 227.4L1014.1 221.9L1011.8 216.3L1009.5 210.7L1007.1 205.1L1004.6 199.5L1001.9 193.9L999.2 188.3L996.5 182.8L993.6 177.2L990.6 171.6L987.6 166.0L984.5 160.4L981.3 154.9L978.1 149.3L974.7 143.7L971.4 138.1L967.9 132.5L964.4 127.0L960.9 121.4L957.3 115.8L953.6 110.3L949.9 104.7L946.2 99.1L942.4 93.6L938.6 88.0L934.8 82.5L930.9 76.9L927.0 71.4L923.2 65.9L919.3 60.4L915.4 55.0L911.5 49.6L907.7 44.4L904.0 39.6L900.3 35.7L895.6 34.4L887.2 36.9L876.0 41.2L863.7 46.3L850.9 51.5L837.9 56.9L824.8 62.4L811.7 67.9L798.6 73.4L785.6 78.9L772.6 84.4L759.8 90.0L747.0 95.5L734.4 101.1" stroke="#808080" stroke-opacity="0.55" stroke-width="1.389" stroke-dasharray="1.389 2.292"/>
<path d="M962.2 47.8L966.1 48.8L970.0 49.9L974.1 51.0L978.3 52.1L982.5 53.2L986.8 54.4L991.1 55.6" stroke="#8c8c8c" stroke-width="1.389"/>
<path d="M994.1 274.9L993.9 269.3L993.5 263.7L993.1 258.2L992.5 252.6L991.9 247.0L991.3 241.4L990.5 235.9L989.7 230.3L988.7 224.7L987.8 219.2L986.7 213.6L985.5 208.0L984.3 202.5L983.0 196.9L981.7 191.3L980.3 185.8L978.8 180.2L977.2 174.6L975.6 169.1L973.9 163.5L972.1 158.0L970.3 152.4L968.4 146.9L966.5 141.3L964.5 135.8L962.5 130.3L960.4 124.7L958.3 119.2L956.1 113.7L953.9 108.2L951.6 102.7L949.3 97.2L947.0 91.8L944.7 86.3L942.3 80.9L940.0 75.6L937.6 70.3L935.3 65.0L933.1 59.9L931.0 55.0L929.2 50.3L928.0 46.2L928.0 43.0L930.4 41.4L937.0 41.8L947.9 44.2L962.2 47.8" stroke="#808080" stroke-opacity="0.55" stroke-width="1.389" stroke-dasharray="1.389 2.292"/>
<path d="M983.3 75.6L984.7 76.4L986.2 77.2L987.6 78.0L989.0 78.7L990.4 79.5L991.9 80.3L993.3 81.1" stroke="#8c8c8c" stroke-width="1.389"/>
<path d="M710.0 443.3L706.0 437.8L702.1 432.2L698.4 426.6L694.9 421.0L691.6 415.4L688.5 409.9L685.6 404.3L682.8 398.7L680.3 393.1L678.0 387.5L675.8 381.9L673.9 376.4L672.2 370.8L670.6 365.2L669.3 359.6L668.2 354.0L667.3 348.5L666.6 342.9L666.2 337.3L665.9 331.7L665.9 326.1L666.0 320.5L666.4 315.0L667.0 309.4L667.8 303.8L668.8 298.2L670.0 292.6L671.4 287.0L673.1 281.5L674.9 275.9L677.0 270.3L679.2 264.7L681.7 259.1L684.3 253.5L687.1 248.0L690.2 242.4L693.4 236.8L696.8 231.2L700.4 225.6L704.2 220.1L708.1 214.5L712.3 208.9L716.6 203.3L721.0 197.7L725.6 192.2L730.4 186.6L735.4 181.0L740.4 175.4L745.7 169.9L751.1 164.3L756.6 158.7L762.2 153.1L767.9 147.6L773.8 142.0L779.8 136.4L785.9 130.9L792.1 125.3L798.4 119.7L804.8 114.2L811.3 108.6L817.8 103.1L824.4 97.5L831.1 92.0L837.8 86.5L844.6 81.0L851.4 75.5L858.2 70.0L865.0 64.6L871.8 59.2L878.5 53.9L885.1 48.8L891.5 44.0L897.5 39.8L903.0 37.0L908.7 37.1L915.9 39.8L924.4 44.1L933.7 48.9L943.4 54.0L953.3 59.3L963.3 64.7L973.3 70.1L983.3 75.6" stroke="#808080" stroke-opacity="0.55" stroke-width="1.389" stroke-dasharray="1.389 2.292"/>
<path d="M1001.1 81.1L1002.5 82.3L1003.9 83.4L1005.3 84.6L1006.8 85.8L1008.2 86.9L1009.7 88.1L1011.1 89.3" stroke="#8c8c8c" stroke-width="1.389"/>
<path d="M648.7 436.6L642.5 431.0L636.5 425.5L630.7 420.0L625.1 414.5L619.8 409.0L614.7 403.4L609.9 397.9L605.4 392.4L601.1 386.9L597.1 381.3L593.3 375.8L589.8 370.3L586.6 364.7L583.6 359.2L581.0 353.7L578.6 348.1L576.5 342.6L574.7 337.0L573.2 331.5L572.0 326.0L571.1 320.4L570.4 314.9L570.1 309.4L570.0 303.8L570.3 298.3L570.8 292.8L571.6 287.2L572.7 281.7L574.2 276.1L575.9 270.6L577.8 265.1L580.1 259.5L582.7 254.0L585.5 248.5L588.6 243.0L592.0 237.4L595.6 231.9L599.6 226.4L603.8 220.9L608.2 215.3L612.9 209.8L617.9 204.3L623.1 198.8L628.5 193.3L634.2 187.8L640.1 182.3L646.2 176.8L652.5 171.3L659.1 165.9L665.8 160.4L672.7 154.9L679.9 149.5L687.1 144.0L694.6 138.6L702.2 133.2L709.9 127.8L717.8 122.4L725.8 117.1L733.9 111.7L742.0 106.4L750.2 101.2L758.4 96.0L766.6 90.8L774.8 85.8L782.8 80.8L790.6 76.0L798.1 71.4L805.1 66.9L811.4 62.9L816.5 59.2L820.1 56.2L821.3 54.0" stroke="#808080" stroke-opacity="0.55" stroke-width="1.389" stroke-dasharray="1.389 2.292"/>
<path d="M980.9 52.9L975.3 52.9L973.1 54.1L973.6 56.4L975.9 59.4L979.7 63.1L984.3 67.2L989.6 71.6L995.2 76.3L1001.1 81.1" stroke="#808080" stroke-opacity="0.55" stroke-width="1.389" stroke-dasharray="1.389 2.292"/>
<path d="M1234.4 156.2L1230.0 155.3L1225.7 154.5L1221.5 153.7L1217.4 153.0L1213.4 152.3L1209.4 151.7L1205.6 151.1" stroke="#8c8c8c" stroke-width="1.389"/>
<path d="M649.2 436.7L641.4 433.1L633.6 429.3L625.9 425.5L618.3 421.6L610.7 417.7L603.2 413.8L595.9 409.8L588.6 405.7L581.4 401.6L574.4 397.5L567.5 393.3L560.7 389.2L554.1 384.9L547.7 380.7L541.4 376.4L535.3 372.1L529.4 367.8L523.7 363.5L518.2 359.2L512.9 354.8L507.8 350.4L502.9 346.1L498.2 341.7L493.8 337.3L489.5 332.9L485.5 328.5L481.8 324.1L478.2 319.7L474.9 315.2L471.9 310.8L469.1 306.4L466.5 302.0L464.2 297.6L462.1 293.3L460.2 288.9L458.6 284.5L457.2 280.2L456.1 275.8L455.2 271.5L454.5 267.2L454.0 262.9L453.8 258.7L453.8 254.4L453.9 250.2L454.3 246.0L454.9 241.9L455.6 237.8L456.6 233.7L457.7 229.6L458.9 225.6L460.3 221.7L461.8 217.8L463.4 213.9L465.2 210.1L467.0 206.4L468.8 202.7L470.8 199.1L472.7 195.6L474.7 192.2L476.6 188.8L478.5 185.6L480.3 182.4L482.0 179.4L483.6 176.4" stroke="#808080" stroke-opacity="0.55" stroke-width="1.389" stroke-dasharray="1.389 2.292"/>
<path d="M1313.6 173.6L1302.8 170.9L1292.2 168.3L1281.8 165.9L1271.7 163.6L1261.8 161.5L1252.3 159.6L1243.2 157.8L1234.4 156.2" stroke="#808080" stroke-opacity="0.55" stroke-width="1.389" stroke-dasharray="1.389 2.292"/>
<path d="M866.7 52.3L869.0 50.9L871.3 49.5L873.6 48.1L875.9 46.8L878.2 45.4L880.5 44.0L882.7 42.7" stroke="#8c8c8c" stroke-width="1.389"/>
<path d="M648.3 437.3L643.1 431.7L638.1 426.1L633.3 420.6L628.8 415.0L624.6 409.4L620.6 403.8L616.8 398.2L613.3 392.6L610.1 387.0L607.1 381.4L604.4 375.9L602.0 370.3L599.8 364.7L597.9 359.1L596.3 353.5L594.9 347.9L593.9 342.3L593.1 336.7L592.5 331.2L592.3 325.6L592.3 320.0L592.6 314.4L593.2 308.8L594.1 303.2L595.3 297.6L596.7 292.0L598.4 286.5L600.4 280.9L602.6 275.3L605.1 269.7L607.9 264.1L610.9 258.5L614.3 252.9L617.8 247.3L621.6 241.8L625.7 236.2L630.0 230.6L634.6 225.0L639.4 219.4L644.5 213.8L649.7 208.2L655.2 202.6L661.0 197.1L666.9 191.5L673.1 185.9L679.4 180.3L686.0 174.7L692.7 169.1L699.7 163.6L706.8 158.0L714.1 152.4L721.5 146.8L729.2 141.2L737.0 135.6L744.9 130.1L752.9 124.5L761.1 118.9L769.5 113.3L777.9 107.7L786.5 102.2L795.1 96.6L803.9 91.0L812.7 85.5L821.6 79.9L830.5 74.3L839.6 68.8L848.6 63.3L857.7 57.8L866.7 52.3" stroke="#808080" stroke-opacity="0.55" stroke-width="1.389" stroke-dasharray="1.389 2.292"/>
<path d="M475.6 222.2L475.7 222.7L475.7 223.2L475.8 223.6L475.9 224.1L476.0 224.6L476.0 225.1L476.1 225.6" stroke="#8c8c8c" stroke-width="1.389"/>
<path d="M1203.3 198.3L1205.4 196.0L1207.6 193.7L1209.9 191.5L1212.2 189.5L1214.8 187.6L1217.5 185.8L1220.3 184.1L1223.4 182.6L1226.6 181.2L1230.1 180.0L1233.8 178.9L1237.7 178.0L1241.9 177.2L1246.4 176.6L1251.2 176.2L1256.2 175.9L1261.6 175.8L1267.3 175.8L1273.2 176.0L1279.5 176.4L1286.1 176.9L1293.0 177.6L1300.3 178.4L1307.8 179.4L1315.6 180.6L1323.7 181.9L1332.1 183.3L1340.8 184.9" stroke="#808080" stroke-opacity="0.55" stroke-width="1.389" stroke-dasharray="1.389 2.292"/>
<path d="M465.1 186.6L466.7 188.5L468.0 190.4L469.2 192.5L470.2 194.7L471.1 197.1L471.8 199.5L472.4 202.0L473.0 204.7L473.5 207.4L473.9 210.2L474.3 213.1L474.8 216.0L475.2 219.1L475.6 222.2" stroke="#808080" stroke-opacity="0.55" stroke-width="1.389" stroke-dasharray="1.389 2.292"/>
<path d="M480.2 220.6L480.4 221.2L480.6 221.8L480.8 222.5L481.1 223.1L481.3 223.7L481.5 224.4L481.7 225.0" stroke="#8c8c8c" stroke-width="1.389"/>
<path d="M1228.2 201.3L1230.6 199.2L1233.1 197.2L1235.7 195.3L1238.4 193.5L1241.3 191.8L1244.4 190.3L1247.6 188.9L1251.0 187.6L1254.6 186.5L1258.5 185.5L1262.5 184.6L1266.9 183.9L1271.4 183.3L1276.3 182.9L1281.4 182.7L1286.8 182.6L1292.5 182.6L1298.4 182.8L1304.7 183.2L1311.2 183.7L1318.0 184.3L1325.2 185.1L1332.6 186.0L1340.2 187.1L1348.2 188.3" stroke="#808080" stroke-opacity="0.55" stroke-width="1.389" stroke-dasharray="1.389 2.292"/>
<path d="M459.3 189.7L461.7 191.2L464.0 192.8L466.0 194.5L467.9 196.4L469.5 198.4L471.1 200.4L472.5 202.6L473.8 204.9L475.0 207.3L476.1 209.8L477.2 212.4L478.2 215.0L479.2 217.8L480.2 220.6" stroke="#808080" stroke-opacity="0.55" stroke-width="1.389" stroke-dasharray="1.389 2.292"/>
<path d="M678.6 112.3L672.1 116.0L665.6 119.8L659.0 123.7L652.4 127.6L645.8 131.5L639.3 135.5L632.8 139.5L626.3 143.6L620.0 147.7L613.7 151.8L607.5 155.9L601.4 160.0L595.4 164.2L589.6 168.4L583.9 172.6L578.3 176.8L572.8 181.1L567.6 185.3L562.4 189.6L557.5 193.8L552.7 198.1L548.0 202.4L543.6 206.7L539.3 211.0L535.2 215.3L531.3 219.6L527.6 223.9L524.1 228.2L520.8 232.5L517.7 236.9L514.8 241.2L512.1 245.5L509.6 249.9L507.3 254.2L505.2 258.6L503.4 262.9L501.7 267.3L500.3 271.6L499.1 276.0L498.1 280.4L497.3 284.7L496.8 289.1L496.5 293.4L496.4 297.8L496.5 302.2L496.8 306.5L497.4 310.9L498.2 315.3L499.2 319.6L500.4 324.0L501.9 328.4L503.5 332.7L505.4 337.1L507.5 341.5L509.9 345.8L512.4 350.2L515.1 354.6L518.1 358.9L521.3 363.3L524.7 367.6L528.2 372.0L532.0 376.3L536.0 380.7L540.2 385.0L544.6 389.4L549.2 393.7L553.9 398.1L558.9 402.4L564.0 406.7L569.3 411.1L574.8 415.4L580.4 419.7L586.2 424.0" stroke="#808080" stroke-opacity="0.55" stroke-width="1.389" stroke-dasharray="1.389 2.292"/>
<path d="M719.5 96.7L713.2 100.4L706.7 104.2L700.1 108.0L693.5 112.0L686.7 116.0L680.0 120.1L673.2 124.2L666.5 128.3L659.8 132.5L653.2 136.7L646.6 141.0L640.1 145.3L633.7 149.6L627.4 153.9L621.3 158.3L615.2 162.6L609.3 167.0L603.5 171.4L597.9 175.8L592.4 180.2L587.1 184.6L581.9 189.1L576.9 193.5L572.1 198.0L567.5 202.4L563.0 206.9L558.7 211.3L554.7 215.8L550.8 220.3L547.1 224.8L543.6 229.3L540.3 233.8L537.3 238.3L534.4 242.8L531.8 247.3L529.3 251.8L527.1 256.3L525.1 260.8L523.3 265.3L521.8 269.9L520.4 274.4L519.3 278.9L518.4 283.4L517.7 287.9L517.3 292.5L517.1 297.0L517.1 301.5L517.4 306.1L517.8 310.6L518.5 315.1L519.4 319.6L520.6 324.2L522.0 328.7L523.6 333.2L525.4 337.8L527.4 342.3L529.7 346.8L532.2 351.3L534.9 355.9L537.8 360.4L540.9 364.9L544.3 369.4L547.8 373.9L551.6 378.5L555.6 383.0L559.7 387.5L564.1 392.0L568.7 396.5L573.4 401.0L578.4 405.5L583.5 410.0L588.8 414.5L594.3 419.0L599.9 423.5L605.8 427.9" stroke="#808080" stroke-opacity="0.55" stroke-width="1.389" stroke-dasharray="1.389 2.292"/>
<path d="M759.2 86.5L752.8 90.4L746.2 94.4L739.5 98.5L732.7 102.7L725.9 106.9L719.1 111.2L712.4 115.5L705.6 119.8L698.9 124.2L692.2 128.6L685.7 133.0L679.2 137.5L672.8 141.9L666.5 146.4L660.3 150.9L654.2 155.4L648.3 159.9L642.5 164.5L636.9 169.0L631.4 173.6L626.0 178.1L620.8 182.7L615.7 187.2L610.9 191.8L606.1 196.4L601.6 201.0L597.2 205.6L593.1 210.2L589.1 214.8L585.3 219.4L581.6 224.0L578.2 228.6L575.0 233.2L571.9 237.8L569.1 242.4L566.5 247.0L564.1 251.6L561.8 256.3L559.8 260.9L558.0 265.5L556.4 270.1L555.1 274.8L553.9 279.4L552.9 284.0L552.2 288.6L551.7 293.3L551.4 297.9L551.3 302.5L551.4 307.2L551.8 311.8L552.3 316.4L553.1 321.0L554.1 325.7L555.3 330.3L556.7 334.9L558.4 339.6L560.2 344.2L562.3 348.8L564.5 353.4L567.0 358.1L569.7 362.7L572.6 367.3L575.7 371.9L578.9 376.6L582.4 381.2L586.1 385.8L590.0 390.4L594.1 395.0L598.3 399.7L602.7 404.3L607.4 408.9L612.2 413.5L617.1 418.1L622.3 422.7L627.6 427.3L633.1 431.9L638.7 436.5" stroke="#808080" stroke-opacity="0.55" stroke-width="1.389" stroke-dasharray="1.389 2.292"/>
<path d="M667.8 132.5L664.4 135.7L660.9 139.0L657.4 142.4L653.9 145.8L650.3 149.3L646.7 152.9L643.2 156.4L639.7 160.0L636.2 163.7L632.8 167.4L629.4 171.1L626.2 174.8L622.9 178.6L619.8 182.4L616.7 186.2L613.8 190.1L610.9 193.9L608.1 197.8L605.5 201.7L603.0 205.6L600.5 209.5L598.2 213.5L596.0 217.4L594.0 221.4L592.1 225.4L590.3 229.3L588.6 233.3L587.1 237.3L585.7 241.3L584.4 245.4L583.3 249.4L582.4 253.4L581.6 257.5L580.9 261.5L580.4 265.5L580.0 269.6L579.8 273.6L579.8 277.7L579.8 281.8L580.1 285.8L580.5 289.9L581.0 294.0L581.7 298.0L582.6 302.1L583.6 306.2L584.7 310.2L586.0 314.3L587.5 318.4L589.1 322.5L590.9 326.5L592.8 330.6L594.8 334.7L597.0 338.8L599.4 342.8L601.9 346.9L604.5 351.0L607.3 355.0L610.2 359.1L613.2 363.2L616.4 367.2L619.8 371.3L623.2 375.3L626.8 379.4L630.5 383.4L634.3 387.4L638.3 391.5L642.4 395.5L646.6 399.5L650.9 403.5L655.3 407.5L659.8 411.5L664.4 415.5L669.2 419.5L674.0 423.4L678.9 427.4L683.9 431.3L689.0 435.2L694.2 439.1L699.5 443.0" stroke="#808080" stroke-opacity="0.55" stroke-width="1.389" stroke-dasharray="1.389 2.292"/>
<path d="M725.2 98.4L724.0 100.7L722.4 103.2L720.3 106.0L717.9 108.9L715.2 111.9L712.3 115.1L709.1 118.5L705.8 121.9L702.4 125.5L698.9 129.1L695.3 132.8L691.7 136.6L688.0 140.5L684.4 144.4L680.7 148.4L677.1 152.4L673.5 156.5L670.0 160.6L666.5 164.7L663.1 168.9L659.8 173.1L656.5 177.4L653.4 181.6L650.4 185.9L647.4 190.2L644.6 194.5L641.9 198.9L639.4 203.2L636.9 207.6L634.6 212.0L632.5 216.4L630.5 220.8L628.6 225.2L626.8 229.7L625.2 234.1L623.8 238.6L622.5 243.0L621.4 247.5L620.4 252.0L619.6 256.4L619.0 260.9L618.5 265.4L618.2 269.9L618.0 274.4L618.0 278.9L618.2 283.4L618.5 287.9L619.0 292.4L619.7 296.9L620.5 301.4L621.5 306.0L622.7 310.5L624.0 315.0L625.5 319.5L627.1 324.0L628.9 328.5L630.9 333.0L633.0 337.6L635.3 342.1L637.8 346.6L640.4 351.1L643.1 355.6L646.0 360.1L649.1 364.6L652.3 369.1L655.6 373.6L659.1 378.1L662.7 382.6L666.5 387.0L670.4 391.5L674.4 396.0L678.5 400.5L682.8 404.9L687.2 409.3L691.7 413.8L696.3 418.2L701.1 422.6L705.9 427.0L710.9 431.4L715.9 435.8L721.0 440.2" stroke="#808080" stroke-opacity="0.55" stroke-width="1.389" stroke-dasharray="1.389 2.292"/>
<path d="M811.8 69.7L807.4 73.4L802.5 77.3L797.5 81.3L792.2 85.4L786.9 89.7L781.4 94.0L776.0 98.3L770.5 102.8L765.0 107.2L759.5 111.7L754.1 116.3L748.7 120.8L743.4 125.4L738.1 130.0L733.0 134.6L727.9 139.3L722.9 143.9L718.0 148.6L713.2 153.2L708.5 157.9L703.9 162.6L699.4 167.3L695.1 172.0L690.8 176.7L686.7 181.4L682.8 186.1L679.0 190.8L675.3 195.5L671.7 200.3L668.3 205.0L665.1 209.7L662.0 214.5L659.0 219.2L656.3 223.9L653.6 228.7L651.2 233.4L648.8 238.2L646.7 242.9L644.7 247.7L642.9 252.4L641.2 257.2L639.8 261.9L638.5 266.7L637.3 271.4L636.4 276.2L635.6 280.9L634.9 285.7L634.5 290.5L634.2 295.2L634.1 300.0L634.2 304.7L634.5 309.5L634.9 314.2L635.5 319.0L636.3 323.8L637.2 328.5L638.4 333.3L639.7 338.0L641.1 342.8L642.8 347.6L644.6 352.3L646.5 357.1L648.7 361.8L651.0 366.6L653.5 371.3L656.1 376.1L658.9 380.8L661.8 385.6L664.9 390.4L668.2 395.1L671.6 399.9L675.2 404.6L678.9 409.3L682.7 414.1L686.7 418.8L690.8 423.6L695.1 428.3L699.5 433.0L704.0 437.8L708.7 442.5" stroke="#808080" stroke-opacity="0.55" stroke-width="1.389" stroke-dasharray="1.389 2.292"/>
<path d="M616.9 186.9L611.1 191.1" stroke="#8c8c8c" stroke-opacity="0.45" stroke-width="1.2"/>
<path d="M578.9 200.6L573.3 203.3" stroke="#8c8c8c" stroke-opacity="0.45" stroke-width="1.2"/>
<path d="M453.3 252.2L466.7 266.7" stroke="#8c8c8c" stroke-opacity="0.45" stroke-width="1.2"/>
<rect x="408.5" y="218.8" width="1.8" height="1.8" fill="#9a9a9a" stroke="none"/>
<rect x="378.8" y="248.0" width="1.8" height="1.8" fill="#9a9a9a" stroke="none"/>
<rect x="384.0" y="256.9" width="1.8" height="1.8" fill="#9a9a9a" stroke="none"/>
<rect x="410.2" y="253.3" width="1.8" height="1.8" fill="#9a9a9a" stroke="none"/>
<rect x="418.0" y="261.3" width="1.8" height="1.8" fill="#9a9a9a" stroke="none"/>
<rect x="491.3" y="229.4" width="1.8" height="1.8" fill="#9a9a9a" stroke="none"/>
<rect x="508.3" y="225.2" width="1.8" height="1.8" fill="#9a9a9a" stroke="none"/>
<rect x="487.4" y="274.9" width="1.8" height="1.8" fill="#9a9a9a" stroke="none"/>
<rect x="814.1" y="54.1" width="1.8" height="1.8" fill="#9a9a9a" stroke="none"/>
<rect x="579.1" y="181.0" width="1.8" height="1.8" fill="#9a9a9a" stroke="none"/>
<rect x="596.9" y="173.3" width="1.8" height="1.8" fill="#9a9a9a" stroke="none"/>
<rect x="594.7" y="174.7" width="1.8" height="1.8" fill="#9a9a9a" stroke="none"/>
<rect x="579.4" y="193.0" width="1.8" height="1.8" fill="#9a9a9a" stroke="none"/>
<rect x="707.7" y="141.1" width="1.8" height="1.8" fill="#9a9a9a" stroke="none"/>
<rect x="718.5" y="106.9" width="1.8" height="1.8" fill="#9a9a9a" stroke="none"/>
<rect x="990.2" y="54.7" width="1.8" height="1.8" fill="#9a9a9a" stroke="none"/>
<rect x="992.4" y="80.2" width="1.8" height="1.8" fill="#9a9a9a" stroke="none"/>
<rect x="1010.2" y="88.4" width="1.8" height="1.8" fill="#9a9a9a" stroke="none"/>
<rect x="1204.7" y="150.2" width="1.8" height="1.8" fill="#9a9a9a" stroke="none"/>
<rect x="881.8" y="41.8" width="1.8" height="1.8" fill="#9a9a9a" stroke="none"/>
<rect x="475.2" y="224.7" width="1.8" height="1.8" fill="#9a9a9a" stroke="none"/>
<rect x="480.8" y="224.1" width="1.8" height="1.8" fill="#9a9a9a" stroke="none"/>
<path d="M386.5 328.5L386.3 326.5L386.1 324.4L386.0 322.4L386.0 320.4L386.0 318.4L386.1 316.3L386.2 314.3L386.4 312.3L386.7 310.2L387.0 308.2L387.4 306.2L387.9 304.1L388.4 302.1L389.0 300.1L389.6 298.1L390.3 296.0L391.1 294.0L391.9 292.0L392.8 289.9L393.7 287.9L394.7 285.9L395.8 283.9L396.9 281.8L398.0 279.8L399.3 277.8L400.6 275.7L401.9 273.7L403.4 271.7L404.8 269.7L406.4 267.6L408.0 265.6L409.6 263.6L411.3 261.5L413.1 259.5L414.9 257.5L416.8 255.4L418.7 253.4L420.7 251.4L422.8 249.4L424.9 247.3L427.1 245.3L429.3 243.3L431.6 241.2L433.9 239.2L436.3 237.2L438.7 235.2L441.3 233.1L443.8 231.1L446.4 229.1L449.1 227.0L451.8 225.0L454.6 223.0L457.4 220.9L460.3 218.9L463.2 216.9L466.2 214.9L469.2 212.8L472.3 210.8L475.4 208.8L478.6 206.7L481.9 204.7L485.2 202.7L488.5 200.7L491.9 198.6L495.3 196.6L498.8 194.6L502.3 192.5L505.9 190.5L509.5 188.5L513.2 186.4L516.9 184.4L520.7 182.4L524.5 180.4L528.3 178.3L532.2 176.3L536.2 174.3L540.2 172.2L544.2 170.2L548.3 168.2L552.4 166.2L556.5 164.1L560.7 162.1L565.0 160.1L569.2 158.0L573.5 156.0L577.9 154.0L582.3 152.0L586.7 149.9L591.2 147.9L595.7 145.9L600.2 143.8L604.8 141.8L609.4 139.8L614.1 137.7L618.7 135.7L623.5 133.7L628.2 131.7L633.0 129.6L637.8 127.6" stroke="#bddf26" stroke-width="1.389" stroke-dasharray="1.389 2.292"/>
<path d="M637.8 127.6L638.5 127.3L639.2 127.0L639.9 126.7L640.6 126.4L641.3 126.1L642.0 125.9L642.7 125.6L643.4 125.3L644.1 125.0L644.8 124.7L645.5 124.4L646.2 124.1L646.9 123.8L647.6 123.5L648.3 123.2L649.0 122.9L649.7 122.6L650.4 122.4L651.1 122.1L651.8 121.8L652.5 121.5L653.2 121.2L653.9 120.9L654.6 120.6L655.3 120.3L656.0 120.0L656.7 119.7L657.4 119.4L658.1 119.1L658.8 118.9L659.6 118.6L660.3 118.3L661.0 118.0L661.7 117.7L662.4 117.4L663.1 117.1L663.8 116.8L664.6 116.5L665.3 116.2L666.0 115.9L666.7 115.6L667.4 115.4L668.1 115.1L668.9 114.8L669.6 114.5L670.3 114.2L671.0 113.9L671.7 113.6L672.5 113.3L673.2 113.0L673.9 112.7L674.6 112.4L675.3 112.2L676.1 111.9L676.8 111.6L677.5 111.3L678.3 111.0L679.0 110.7L679.7 110.4L680.4 110.1L681.2 109.8L681.9 109.5L682.6 109.2L683.3 108.9L684.1 108.7L684.8 108.4L685.5 108.1L686.3 107.8L687.0 107.5L687.7 107.2L688.5 106.9L689.2 106.6L689.9 106.3L690.7 106.0L691.4 105.7L692.1 105.4L692.9 105.2L693.6 104.9L694.4 104.6L695.1 104.3L695.8 104.0L696.6 103.7L697.3 103.4L698.1 103.1L698.8 102.8L699.5 102.5L700.3 102.2L701.0 101.9L701.8 101.7L702.5 101.4L703.2 101.1L704.0 100.8L704.7 100.5L705.5 100.2L706.2 99.9L707.0 99.6L707.7 99.3L708.5 99.0L709.2 98.7L710.0 98.5L710.7 98.2L711.5 97.9L712.2 97.6L713.0 97.3L713.7 97.0L714.5 96.7L715.2 96.4L716.0 96.1L716.7 95.8L717.5 95.5L718.2 95.2L719.0 95.0L719.7 94.7L720.5 94.4L721.2 94.1L722.0 93.8L722.7 93.5L723.5 93.2L724.3 92.9L725.0 92.6L725.8 92.3L726.5 92.0L727.3 91.7L728.0 91.5L728.8 91.2L729.6 90.9L730.3 90.6L731.1 90.3L731.8 90.0L732.6 89.7L733.4 89.4L734.1 89.1L734.9 88.8L735.7 88.5L736.4 88.3L737.2 88.0L737.9 87.7L738.7 87.4L739.5 87.1L740.2 86.8L741.0 86.5L741.8 86.2L742.5 85.9L743.3 85.6L744.1 85.3L744.8 85.0L745.6 84.8L746.4 84.5L747.1 84.2L747.9 83.9L748.7 83.6L749.5 83.3L750.2 83.0L751.0 82.7L751.8 82.4L752.5 82.1L753.3 81.8L754.1 81.5L754.9 81.3L755.6 81.0L756.4 80.7L757.2 80.4L758.0 80.1L758.7 79.8L759.5 79.5L760.3 79.2L761.1 78.9L761.8 78.6L762.6 78.3L763.4 78.0L764.2 77.8L764.9 77.5L765.7 77.2L766.5 76.9L767.3 76.6L768.0 76.3L768.8 76.0L769.6 75.7L770.4 75.4L771.2 75.1L771.9 74.8L772.7 74.6L773.5 74.3L774.3 74.0L775.1 73.7L775.8 73.4L776.6 73.1L777.4 72.8L778.2 72.5L779.0 72.2L779.8 71.9L780.5 71.6L781.3 71.3L782.1 71.1L782.9 70.8L783.7 70.5L784.5 70.2L785.2 69.9L786.0 69.6L786.8 69.3L787.6 69.0L788.4 68.7L789.2 68.4L790.0 68.1L790.8 67.8L791.5 67.6L792.3 67.3L793.1 67.0L793.9 66.7L794.7 66.4L795.5 66.1L796.3 65.8L797.1 65.5L797.9 65.2L798.6 64.9L799.4 64.6L800.2 64.3L801.0 64.1L801.8 63.8L802.6 63.5L803.4 63.2L804.2 62.9L805.0 62.6L805.8 62.3L806.6 62.0L807.3 61.7L808.1 61.4L808.9 61.1L809.7 60.9L810.5 60.6L811.3 60.3L812.1 60.0L812.9 59.7L813.7 59.4L814.5 59.1L815.3 58.8L816.1 58.5L816.9 58.2L817.7 57.9L818.5 57.6L819.3 57.4L820.1 57.1L820.9 56.8L821.6 56.5L822.4 56.2L823.2 55.9L824.0 55.6L824.8 55.3L825.6 55.0L826.4 54.7L827.2 54.4L828.0 54.1L828.8 53.9L829.6 53.6L830.4 53.3L831.2 53.0L832.0 52.7L832.8 52.4L833.6 52.1L834.4 51.8L835.2 51.5L836.0 51.2L836.8 50.9L837.6 50.7L838.4 50.4L839.2 50.1L840.0 49.8L840.8 49.5L841.6 49.2L842.4 48.9L843.2 48.6L844.0 48.3L844.8 48.0L845.6 47.7L846.4 47.4L847.2 47.2L848.0 46.9L848.8 46.6L849.6 46.3L850.4 46.0L851.2 45.7L852.0 45.4L852.8 45.1L853.6 44.8L854.4 44.5L855.3 44.2L856.1 43.9L856.9 43.7L857.7 43.4L858.5 43.1L859.3 42.8L860.1 42.5L860.9 42.2L861.7 41.9L862.5 41.6L863.3 41.3L864.1 41.0L864.9 40.7L865.7 40.4L866.5 40.2L867.3 39.9L868.1 39.6L868.9 39.3L869.7 39.0L870.5 38.7L871.3 38.4L872.1 38.1L872.9 37.8L873.7 37.5L874.6 37.2L875.4 37.0L876.2 36.7L877.0 36.4L877.8 36.1L878.6 35.8L879.4 35.5L880.2 35.2L881.0 34.9L881.8 34.6L882.6 34.3L883.4 34.0L884.2 33.7L885.0 33.5L885.8 33.2L886.6 32.9L887.4 32.6L888.2 32.3L889.1 32.0L889.9 31.7L890.7 31.4L891.5 31.1L892.3 30.8L893.1 30.5L893.9 30.3L894.7 30.0L895.5 29.7L896.3 29.4L897.1 29.1L897.9 28.8L898.7 28.5L899.5 28.2L900.3 27.9L901.1 27.7" stroke="#bddf26" stroke-width="1.7"/>
<path d="M903.6 27.4L903.1 27.3L903.1 27.5L903.2 27.8L903.3 28.1L903.5 28.3L903.6 28.6L903.7 28.9L903.8 29.2L903.9 29.5L904.0 29.8L904.1 30.1L904.2 30.4L904.3 30.7L904.4 31.0L904.5 31.2L904.7 31.5L904.8 31.8L904.9 32.1L905.0 32.4L905.1 32.7L905.2 33.0L905.3 33.3L905.4 33.6L905.5 33.9L905.6 34.2L905.7 34.4L905.9 34.7L906.0 35.0L906.1 35.3L906.2 35.6L906.3 35.9L906.4 36.2L906.5 36.5L906.6 36.8L906.7 37.1L906.8 37.4L906.9 37.7L907.0 37.9L907.2 38.2L907.3 38.5L907.4 38.8L907.5 39.1L907.6 39.4L907.7 39.7L907.8 40.0L907.9 40.3L908.0 40.6L908.1 40.9L908.2 41.2L908.4 41.4L908.5 41.7L908.6 42.0L908.7 42.3L908.8 42.6L908.9 42.9" stroke="#bddf26" stroke-width="1.7"/>
<rect x="907.9" y="41.9" width="2.1" height="2.1" fill="#ff6347" stroke="none"/>
<path d="M825.4 279.6L823.8 276.2L822.2 272.9L820.7 269.5L819.2 266.2L817.7 262.9L816.2 259.5L814.7 256.2L813.3 252.9L811.9 249.6L810.6 246.3L809.2 243.0L807.9 239.8L806.6 236.5L805.4 233.2L804.1 230.0L802.9 226.8L801.7 223.5L800.6 220.3L799.5 217.2L798.4 214.0L797.3 210.8L796.2 207.7L795.2 204.6L794.2 201.5L793.2 198.4L792.2 195.3L791.2 192.3L790.3 189.3L789.4 186.3L788.5 183.4L787.6 180.5L786.7 177.6L785.8 174.7L784.9 171.9L784.0 169.2L783.2 166.4L782.3 163.7L781.4 161.1L780.5 158.5L779.5 156.0L778.6 153.5L777.6 151.1L776.6 148.7L775.6 146.4L774.5 144.2L773.3 142.1L772.1 140.0L770.8 138.0L769.5 136.1L768.0 134.3L766.5 132.6L764.8 131.0L763.0 129.5L761.1 128.2L759.1 126.9L756.9 125.8L754.5 124.8L752.0 123.9L749.2 123.1L746.3 122.5L743.2 122.1L739.8 121.7L736.3 121.5L732.5 121.5L728.4 121.6L724.1 121.9L719.6 122.3L714.8 122.8L709.8 123.5L704.5 124.3L699.0 125.2L693.3 126.3L687.3 127.5L681.1 128.8L674.7 130.2L668.0 131.8L661.2 133.4L654.2 135.2L647.1 137.0L639.7 139.0L632.2 141.0L624.6 143.1L616.9 145.3L609.0 147.5L601.1 149.9L593.0 152.3L584.9 154.7L576.7 157.2L568.5 159.8L560.2 162.4L551.9 165.1L543.6 167.8L535.2 170.5L526.9 173.3L518.6 176.1L510.3 179.0L502.0 181.9L493.7 184.8L485.5 187.8" stroke="#4ec36b" stroke-width="1.389" stroke-dasharray="1.389 2.292"/>
<path d="M485.5 187.8L485.4 187.8L485.3 187.9L485.2 187.9L485.1 187.9L485.1 188.0L485.0 188.0L484.9 188.0L484.8 188.1L484.7 188.1L484.6 188.1L484.5 188.2L484.4 188.2L484.4 188.2L484.3 188.3L484.2 188.3L484.1 188.3L484.0 188.4L483.9 188.4L483.8 188.4L483.7 188.5L483.7 188.5L483.6 188.5L483.5 188.5L483.4 188.6L483.3 188.6L483.2 188.6L483.1 188.7L483.0 188.7L482.9 188.7L482.9 188.8L482.8 188.8L482.7 188.8L482.6 188.9L482.5 188.9L482.4 188.9L482.3 189.0L482.2 189.0L482.2 189.0L482.1 189.1L482.0 189.1L481.9 189.1L481.8 189.2L481.7 189.2L481.6 189.2L481.5 189.3L481.5 189.3L481.4 189.3L481.3 189.4L481.2 189.4L481.1 189.4L481.0 189.5L480.9 189.5L480.8 189.5L480.8 189.6L480.7 189.6L480.6 189.6L480.5 189.7L480.4 189.7L480.3 189.7L480.2 189.8L480.1 189.8L480.1 189.8L480.0 189.9L479.9 189.9L479.8 189.9L479.7 190.0L479.6 190.0L479.5 190.0L479.4 190.1L479.4 190.1L479.3 190.1L479.2 190.1L479.1 190.2L479.0 190.2L478.9 190.2L478.8 190.3L478.7 190.3L478.7 190.3L478.6 190.4L478.5 190.4L478.4 190.4L478.3 190.5L478.2 190.5L478.1 190.5L478.0 190.6L478.0 190.6L477.9 190.6L477.8 190.7L477.7 190.7L477.6 190.7L477.5 190.8L477.4 190.8L477.3 190.8L477.3 190.9L477.2 190.9L477.1 190.9L477.0 191.0L476.9 191.0L476.8 191.0L476.7 191.1L476.6 191.1L476.6 191.1L476.5 191.2L476.4 191.2L476.3 191.2L476.2 191.3L476.1 191.3L476.0 191.3L475.9 191.4L475.9 191.4L475.8 191.4L475.7 191.5L475.6 191.5L475.5 191.5L475.4 191.6L475.3 191.6L475.2 191.6L475.2 191.7L475.1 191.7L475.0 191.7L474.9 191.8L474.8 191.8L474.7 191.8L474.6 191.9L474.5 191.9L474.5 191.9L474.4 192.0L474.3 192.0L474.2 192.0L474.1 192.1L474.0 192.1L473.9 192.1L473.8 192.2L473.8 192.2L473.7 192.2L473.6 192.3L473.5 192.3L473.4 192.3L473.3 192.3L473.2 192.4L473.2 192.4L473.1 192.4L473.0 192.5L472.9 192.5L472.8 192.5L472.7 192.6L472.6 192.6L472.5 192.6L472.5 192.7L472.4 192.7L472.3 192.7L472.2 192.8L472.1 192.8L472.0 192.8L471.9 192.9L471.8 192.9L471.8 192.9L471.7 193.0L471.6 193.0L471.5 193.0L471.4 193.1L471.3 193.1L471.2 193.1L471.2 193.2L471.1 193.2L471.0 193.2L470.9 193.3L470.8 193.3L470.7 193.3L470.6 193.4L470.5 193.4L470.5 193.4L470.4 193.5L470.3 193.5L470.2 193.5L470.1 193.6L470.0 193.6L469.9 193.6L469.9 193.7L469.8 193.7L469.7 193.7L469.6 193.8L469.5 193.8L469.4 193.8L469.3 193.9L469.2 193.9L469.2 193.9L469.1 194.0L469.0 194.0L468.9 194.0L468.8 194.1L468.7 194.1L468.6 194.1L468.6 194.2L468.5 194.2L468.4 194.2L468.3 194.3L468.2 194.3L468.1 194.3L468.0 194.4L467.9 194.4L467.9 194.4L467.8 194.5L467.7 194.5L467.6 194.5L467.5 194.6L467.4 194.6L467.3 194.6L467.3 194.7L467.2 194.7L467.1 194.7L467.0 194.8L466.9 194.8L466.8 194.8L466.7 194.9L466.6 194.9L466.6 194.9L466.5 195.0L466.4 195.0L466.3 195.0L466.2 195.1L466.1 195.1L466.0 195.1L466.0 195.2L465.9 195.2L465.8 195.2L465.7 195.3L465.6 195.3L465.5 195.3L465.4 195.4L465.4 195.4L465.3 195.4L465.2 195.5L465.1 195.5L465.0 195.5L464.9 195.6L464.8 195.6L464.8 195.6L464.7 195.7L464.6 195.7L464.5 195.7L464.4 195.8L464.3 195.8L464.2 195.8L464.1 195.9L464.1 195.9L464.0 195.9L463.9 196.0L463.8 196.0L463.7 196.0L463.6 196.1L463.5 196.1L463.5 196.1L463.4 196.2L463.3 196.2L463.2 196.2L463.1 196.3L463.0 196.3L462.9 196.3L462.9 196.4L462.8 196.4L462.7 196.4L462.6 196.5L462.5 196.5L462.4 196.5L462.3 196.6L462.3 196.6L462.2 196.6L462.1 196.7L462.0 196.7L461.9 196.7L461.8 196.8L461.7 196.8L461.7 196.8L461.6 196.9L461.5 196.9L461.4 196.9L461.3 197.0L461.2 197.0L461.1 197.0L461.1 197.1L461.0 197.1L460.9 197.1L460.8 197.2L460.7 197.2L460.6 197.2L460.5 197.3L460.5 197.3L460.4 197.3L460.3 197.4L460.2 197.4L460.1 197.4L460.0 197.5L459.9 197.5L459.9 197.5L459.8 197.6L459.7 197.6L459.6 197.6L459.5 197.7L459.4 197.7L459.3 197.7L459.3 197.8L459.2 197.8L459.1 197.8L459.0 197.9L458.9 197.9L458.8 197.9L458.7 198.0L458.7 198.0L458.6 198.0L458.5 198.1L458.4 198.1L458.3 198.1L458.2 198.2L458.1 198.2L458.1 198.2L458.0 198.3L457.9 198.3L457.8 198.3L457.7 198.4L457.6 198.4L457.5 198.4L457.5 198.5L457.4 198.5L457.3 198.5L457.2 198.6L457.1 198.6L457.0 198.6L456.9 198.7L456.9 198.7L456.8 198.7L456.7 198.8L456.6 198.8L456.5 198.8L456.4 198.9L456.4 198.9L456.3 198.9L456.2 199.0L456.1 199.0L456.0 199.0L455.9 199.1L455.8 199.1L455.8 199.1L455.7 199.2L455.6 199.2L455.5 199.2L455.4 199.3L455.3 199.3L455.2 199.3L455.2 199.4L455.1 199.4L455.0 199.4L454.9 199.5L454.8 199.5L454.7 199.5L454.6 199.6L454.6 199.6L454.5 199.6L454.4 199.7L454.3 199.7L454.2 199.7L454.1 199.8L454.1 199.8L454.0 199.8L453.9 199.9L453.8 199.9L453.7 199.9L453.6 200.0L453.5 200.0L453.5 200.0L453.4 200.1L453.3 200.1L453.2 200.1L453.1 200.2L453.0 200.2L452.9 200.2L452.9 200.3L452.8 200.3L452.7 200.3L452.6 200.4L452.5 200.4L452.4 200.4L452.4 200.5L452.3 200.5L452.2 200.5L452.1 200.6L452.0 200.6L451.9 200.6L451.8 200.7L451.8 200.7L451.7 200.7L451.6 200.8L451.5 200.8L451.4 200.8L451.3 200.9L451.3 200.9L451.2 200.9L451.1 201.0L451.0 201.0" stroke="#4ec36b" stroke-width="1.45"/>
<rect x="449.9" y="199.9" width="2.1" height="2.1" fill="#ff6347" stroke="none"/>
<path d="M791.5 65.7L787.7 67.0L784.9 68.0L781.1 69.3L777.3 70.6L773.6 71.9L770.7 72.8L767.0 74.1L763.2 75.4L759.5 76.7L756.7 77.7L753.0 79.0L749.2 80.3L745.5 81.6L742.7 82.6L739.0 83.9L735.3 85.2L731.7 86.5L728.9 87.5L725.2 88.8L721.6 90.1L717.9 91.4L715.2 92.4L711.5 93.7L707.9 95.0L704.3 96.3L701.6 97.2L698.0 98.5L694.4 99.8L690.8 101.1L688.1 102.1L684.5 103.4L681.0 104.7L677.4 106.0L674.8 107.0L671.3 108.3L667.7 109.6L664.2 110.9L661.6 111.9L658.1 113.2L654.7 114.5L651.2 115.8L648.6 116.8L645.2 118.1L641.8 119.4L638.3 120.7L635.8 121.6L632.4 122.9L629.0 124.2L625.7 125.5L623.2 126.5L619.8 127.8L616.5 129.1L613.2 130.4L610.7 131.4L607.4 132.7L604.1 134.0L600.9 135.3L598.4 136.3L595.2 137.6L592.0 138.9L588.8 140.2L586.4 141.2L583.2 142.5L580.1 143.8L576.9 145.1L574.6 146.0L571.5 147.3L568.4 148.6L565.3 149.9L563.0 150.9L559.9 152.2L556.9 153.5L553.8 154.8L551.6 155.8L548.6 157.1L545.6 158.4L542.7 159.7L540.5 160.7L537.5 162.0L534.6 163.3L531.7 164.6L529.6 165.6L526.7 166.9L523.9 168.2L521.1 169.5L519.0 170.5L516.2 171.8L513.4 173.1L510.6 174.4L508.6 175.3L505.9 176.6L503.2 177.9L500.5 179.2L498.5 180.2L495.8 181.5L493.2 182.8L490.6 184.1L488.7 185.1L486.1 186.4" stroke="#2ab07f" stroke-width="1.389" stroke-dasharray="1.389 2.292"/>
<path d="M486.1 186.4L486.0 186.4L485.9 186.5L485.9 186.5L485.8 186.6L485.7 186.6L485.6 186.7L485.5 186.7L485.5 186.7L485.4 186.8L485.3 186.8L485.2 186.9L485.1 186.9L485.1 186.9L485.0 187.0L484.9 187.0L484.8 187.1L484.7 187.1L484.7 187.2L484.6 187.2L484.5 187.2L484.4 187.3L484.4 187.3L484.3 187.4L484.2 187.4L484.1 187.4L484.0 187.5L484.0 187.5L483.9 187.6L483.8 187.6L483.7 187.7L483.6 187.7L483.6 187.7L483.5 187.8L483.4 187.8L483.3 187.9L483.2 187.9L483.2 187.9L483.1 188.0L483.0 188.0L482.9 188.1L482.8 188.1L482.8 188.2L482.7 188.2L482.6 188.2L482.5 188.3L482.5 188.3L482.4 188.4L482.3 188.4L482.2 188.5L482.1 188.5L482.1 188.5L482.0 188.6L481.9 188.6L481.8 188.7L481.7 188.7L481.7 188.7L481.6 188.8L481.5 188.8L481.4 188.9L481.4 188.9L481.3 189.0L481.2 189.0L481.1 189.0L481.0 189.1L481.0 189.1L480.9 189.2L480.8 189.2L480.7 189.2L480.6 189.3L480.6 189.3L480.5 189.4L480.4 189.4L480.3 189.5L480.3 189.5L480.2 189.5L480.1 189.6L480.0 189.6L479.9 189.7L479.9 189.7L479.8 189.7L479.7 189.8L479.6 189.8L479.6 189.9L479.5 189.9L479.4 190.0L479.3 190.0L479.2 190.0L479.2 190.1L479.1 190.1L479.0 190.2L478.9 190.2L478.9 190.3L478.8 190.3L478.7 190.3L478.6 190.4L478.5 190.4L478.5 190.5L478.4 190.5L478.3 190.5L478.2 190.6L478.2 190.6L478.1 190.7L478.0 190.7L477.9 190.8L477.8 190.8L477.8 190.8L477.7 190.9L477.6 190.9L477.5 191.0L477.5 191.0L477.4 191.0L477.3 191.1L477.2 191.1L477.1 191.2L477.1 191.2L477.0 191.3L476.9 191.3L476.8 191.3L476.8 191.4L476.7 191.4L476.6 191.5L476.5 191.5L476.5 191.5L476.4 191.6L476.3 191.6L476.2 191.7L476.1 191.7L476.1 191.8L476.0 191.8L475.9 191.8L475.8 191.9L475.8 191.9L475.7 192.0L475.6 192.0L475.5 192.1L475.5 192.1L475.4 192.1L475.3 192.2L475.2 192.2L475.1 192.3L475.1 192.3L475.0 192.3L474.9 192.4L474.8 192.4L474.8 192.5L474.7 192.5L474.6 192.6L474.5 192.6L474.5 192.6L474.4 192.7L474.3 192.7L474.2 192.8L474.2 192.8L474.1 192.8L474.0 192.9L473.9 192.9L473.8 193.0L473.8 193.0L473.7 193.1L473.6 193.1L473.5 193.1L473.5 193.2L473.4 193.2L473.3 193.3L473.2 193.3L473.2 193.3L473.1 193.4L473.0 193.4L472.9 193.5L472.9 193.5L472.8 193.6L472.7 193.6L472.6 193.6L472.5 193.7L472.5 193.7L472.4 193.8L472.3 193.8L472.2 193.8L472.2 193.9L472.1 193.9L472.0 194.0L471.9 194.0L471.9 194.1L471.8 194.1L471.7 194.1L471.6 194.2L471.6 194.2L471.5 194.3L471.4 194.3L471.3 194.4L471.3 194.4L471.2 194.4L471.1 194.5L471.0 194.5L471.0 194.6L470.9 194.6L470.8 194.6L470.7 194.7L470.7 194.7L470.6 194.8L470.5 194.8L470.4 194.9L470.4 194.9L470.3 194.9L470.2 195.0L470.1 195.0L470.1 195.1L470.0 195.1L469.9 195.1L469.8 195.2L469.8 195.2L469.7 195.3L469.6 195.3L469.5 195.4L469.5 195.4L469.4 195.4L469.3 195.5L469.2 195.5L469.2 195.6L469.1 195.6L469.0 195.6L468.9 195.7L468.9 195.7L468.8 195.8L468.7 195.8L468.6 195.9L468.6 195.9L468.5 195.9L468.4 196.0L468.3 196.0L468.3 196.1L468.2 196.1L468.1 196.2L468.0 196.2L468.0 196.2L467.9 196.3L467.8 196.3L467.7 196.4L467.7 196.4L467.6 196.4L467.5 196.5L467.4 196.5L467.4 196.6L467.3 196.6L467.2 196.7L467.1 196.7L467.1 196.7L467.0 196.8L466.9 196.8L466.8 196.9L466.8 196.9L466.7 196.9L466.6 197.0L466.5 197.0L466.5 197.1L466.4 197.1L466.3 197.2L466.2 197.2L466.2 197.2L466.1 197.3L466.0 197.3L465.9 197.4L465.9 197.4L465.8 197.4L465.7 197.5L465.6 197.5L465.6 197.6L465.5 197.6L465.4 197.7L465.4 197.7L465.3 197.7L465.2 197.8L465.1 197.8L465.1 197.9L465.0 197.9L464.9 198.0L464.8 198.0L464.8 198.0L464.7 198.1L464.6 198.1L464.5 198.2L464.5 198.2L464.4 198.2L464.3 198.3L464.2 198.3L464.2 198.4L464.1 198.4L464.0 198.5L464.0 198.5L463.9 198.5L463.8 198.6L463.7 198.6L463.7 198.7L463.6 198.7L463.5 198.7L463.4 198.8L463.4 198.8L463.3 198.9L463.2 198.9L463.1 199.0L463.1 199.0L463.0 199.0L462.9 199.1L462.9 199.1L462.8 199.2L462.7 199.2L462.6 199.2L462.6 199.3L462.5 199.3L462.4 199.4L462.3 199.4L462.3 199.5L462.2 199.5L462.1 199.5L462.0 199.6L462.0 199.6L461.9 199.7L461.8 199.7L461.8 199.8L461.7 199.8L461.6 199.8L461.5 199.9L461.5 199.9L461.4 200.0L461.3 200.0L461.2 200.0L461.2 200.1L461.1 200.1L461.0 200.2L461.0 200.2L460.9 200.3L460.8 200.3L460.7 200.3L460.7 200.4L460.6 200.4L460.5 200.5L460.4 200.5L460.4 200.5L460.3 200.6L460.2 200.6L460.2 200.7L460.1 200.7L460.0 200.8L459.9 200.8L459.9 200.8L459.8 200.9L459.7 200.9L459.7 201.0L459.6 201.0L459.5 201.0L459.4 201.1L459.4 201.1L459.3 201.2L459.2 201.2L459.1 201.3L459.1 201.3L459.0 201.3L458.9 201.4L458.9 201.4L458.8 201.5L458.7 201.5L458.6 201.6L458.6 201.6L458.5 201.6L458.4 201.7L458.4 201.7L458.3 201.8L458.2 201.8L458.1 201.8L458.1 201.9L458.0 201.9L457.9 202.0L457.9 202.0L457.8 202.1L457.7 202.1L457.6 202.1L457.6 202.2L457.5 202.2L457.4 202.3L457.4 202.3L457.3 202.3L457.2 202.4L457.1 202.4L457.1 202.5L457.0 202.5L456.9 202.6L456.9 202.6L456.8 202.6L456.7 202.7L456.6 202.7L456.6 202.8L456.5 202.8L456.4 202.8L456.4 202.9L456.3 202.9L456.2 203.0L456.1 203.0L456.1 203.1L456.0 203.1" stroke="#2ab07f" stroke-width="1.45"/>
<rect x="454.9" y="202.0" width="2.1" height="2.1" fill="#ff6347" stroke="none"/>
<path d="M787.8 70.6L786.3 70.9L784.8 71.1L783.2 71.4L781.6 71.7L779.9 72.0L778.2 72.4L776.5 72.7L774.7 73.1L772.9 73.4L771.1 73.8L769.2 74.2L767.3 74.6L765.4 75.1L763.4 75.5L761.4 75.9L759.4 76.4L757.3 76.9L755.3 77.3L753.1 77.8L751.0 78.3L748.8 78.8L746.6 79.3L744.4 79.9L742.2 80.4L739.9 80.9L737.6 81.5L735.3 82.0L733.0 82.6L730.6 83.2L728.3 83.8L725.9 84.3" stroke="#2ab07f" stroke-width="1.389" stroke-dasharray="1.389 2.292"/>
<path d="M1081.1 84.9L1082.2 85.5L1083.4 86.1L1084.6 86.8L1085.8 87.4L1087.0 88.0L1088.3 88.6L1089.5 89.3L1090.8 89.9L1092.1 90.5L1093.4 91.2L1094.7 91.9L1096.0 92.5L1097.3 93.2L1098.6 93.9L1100.0 94.5L1101.3 95.2L1102.7 95.9L1104.1 96.6L1105.4 97.3L1106.8 98.0L1108.2 98.7L1109.6 99.4L1111.0 100.1L1112.4 100.8L1113.8 101.5L1115.3 102.2L1116.7 102.9L1118.1 103.6L1119.6 104.3L1121.0 105.1L1122.4 105.8L1123.9 106.5L1125.3 107.3L1126.8 108.0L1128.2 108.7L1129.7 109.5L1131.2 110.2L1132.6 111.0L1134.1 111.7L1135.6 112.5L1137.0 113.2L1138.5 114.0L1140.0 114.7L1141.4 115.5L1142.9 116.2L1144.4 117.0L1145.8 117.8L1147.3 118.5L1148.8 119.3L1150.3 120.0L1151.7 120.8L1153.2 121.6L1154.7 122.4L1156.1 123.1L1157.6 123.9L1159.1 124.7L1160.5 125.5L1162.0 126.2L1163.5 127.0L1164.9 127.8L1166.4 128.6L1167.8 129.4L1169.3 130.1L1170.8 130.9L1172.2 131.7L1173.7 132.5L1175.1 133.3" stroke="#2ab07f" stroke-width="1.389" stroke-dasharray="1.389 2.292"/>
<path d="M1175.1 133.3L1175.1 133.3L1175.1 133.3L1175.2 133.3L1175.2 133.3L1175.2 133.4L1175.2 133.4L1175.3 133.4L1175.3 133.4L1175.3 133.4L1175.3 133.4L1175.3 133.4L1175.4 133.4L1175.4 133.5L1175.4 133.5L1175.4 133.5L1175.5 133.5L1175.5 133.5L1175.5 133.5L1175.5 133.5L1175.5 133.5L1175.6 133.5L1175.6 133.6L1175.6 133.6L1175.6 133.6L1175.7 133.6L1175.7 133.6L1175.7 133.6L1175.7 133.6L1175.8 133.6L1175.8 133.7L1175.8 133.7L1175.8 133.7L1175.8 133.7L1175.9 133.7L1175.9 133.7L1175.9 133.7L1175.9 133.7L1176.0 133.7L1176.0 133.8L1176.0 133.8L1176.0 133.8L1176.0 133.8L1176.1 133.8L1176.1 133.8L1176.1 133.8L1176.1 133.8L1176.2 133.9L1176.2 133.9L1176.2 133.9L1176.2 133.9L1176.2 133.9L1176.3 133.9L1176.3 133.9L1176.3 133.9L1176.3 133.9L1176.4 134.0L1176.4 134.0L1176.4 134.0L1176.4 134.0L1176.4 134.0L1176.5 134.0L1176.5 134.0L1176.5 134.0L1176.5 134.1L1176.6 134.1L1176.6 134.1L1176.6 134.1L1176.6 134.1L1176.6 134.1L1176.7 134.1L1176.7 134.1L1176.7 134.1L1176.7 134.2L1176.8 134.2L1176.8 134.2L1176.8 134.2L1176.8 134.2L1176.8 134.2L1176.9 134.2L1176.9 134.2L1176.9 134.3L1176.9 134.3L1177.0 134.3L1177.0 134.3L1177.0 134.3L1177.0 134.3L1177.1 134.3L1177.1 134.3L1177.1 134.3L1177.1 134.4L1177.1 134.4L1177.2 134.4L1177.2 134.4L1177.2 134.4L1177.2 134.4L1177.3 134.4L1177.3 134.4L1177.3 134.5L1177.3 134.5L1177.3 134.5L1177.4 134.5L1177.4 134.5L1177.4 134.5L1177.4 134.5L1177.5 134.5L1177.5 134.5L1177.5 134.6L1177.5 134.6L1177.5 134.6L1177.6 134.6L1177.6 134.6L1177.6 134.6L1177.6 134.6L1177.7 134.6L1177.7 134.7L1177.7 134.7L1177.7 134.7L1177.7 134.7L1177.8 134.7L1177.8 134.7L1177.8 134.7L1177.8 134.7L1177.9 134.7L1177.9 134.8L1177.9 134.8L1177.9 134.8L1177.9 134.8L1178.0 134.8L1178.0 134.8L1178.0 134.8L1178.0 134.8L1178.1 134.9L1178.1 134.9L1178.1 134.9L1178.1 134.9L1178.1 134.9L1178.2 134.9L1178.2 134.9L1178.2 134.9L1178.2 134.9L1178.3 135.0L1178.3 135.0L1178.3 135.0L1178.3 135.0L1178.3 135.0L1178.4 135.0L1178.4 135.0L1178.4 135.0L1178.4 135.1L1178.5 135.1L1178.5 135.1L1178.5 135.1L1178.5 135.1L1178.5 135.1L1178.6 135.1L1178.6 135.1L1178.6 135.1L1178.6 135.2L1178.7 135.2L1178.7 135.2L1178.7 135.2L1178.7 135.2L1178.8 135.2L1178.8 135.2L1178.8 135.2L1178.8 135.3L1178.8 135.3L1178.9 135.3L1178.9 135.3L1178.9 135.3L1178.9 135.3L1179.0 135.3L1179.0 135.3L1179.0 135.3L1179.0 135.4L1179.0 135.4L1179.1 135.4L1179.1 135.4L1179.1 135.4L1179.1 135.4L1179.2 135.4L1179.2 135.4L1179.2 135.5L1179.2 135.5L1179.2 135.5L1179.3 135.5L1179.3 135.5L1179.3 135.5L1179.3 135.5L1179.4 135.5L1179.4 135.5L1179.4 135.6L1179.4 135.6L1179.4 135.6L1179.5 135.6L1179.5 135.6L1179.5 135.6L1179.5 135.6L1179.6 135.6L1179.6 135.7L1179.6 135.7L1179.6 135.7L1179.6 135.7L1179.7 135.7L1179.7 135.7L1179.7 135.7L1179.7 135.7L1179.8 135.7L1179.8 135.8L1179.8 135.8L1179.8 135.8L1179.8 135.8L1179.9 135.8L1179.9 135.8L1179.9 135.8L1179.9 135.8L1180.0 135.9L1180.0 135.9L1180.0 135.9L1180.0 135.9L1180.0 135.9L1180.1 135.9L1180.1 135.9L1180.1 135.9L1180.1 135.9L1180.2 136.0L1180.2 136.0L1180.2 136.0L1180.2 136.0L1180.2 136.0L1180.3 136.0L1180.3 136.0L1180.3 136.0L1180.3 136.1L1180.4 136.1L1180.4 136.1L1180.4 136.1L1180.4 136.1L1180.4 136.1L1180.5 136.1L1180.5 136.1L1180.5 136.1L1180.5 136.2L1180.6 136.2L1180.6 136.2L1180.6 136.2L1180.6 136.2L1180.6 136.2L1180.7 136.2L1180.7 136.2L1180.7 136.3L1180.7 136.3L1180.8 136.3L1180.8 136.3L1180.8 136.3L1180.8 136.3L1180.8 136.3L1180.9 136.3L1180.9 136.3L1180.9 136.4L1180.9 136.4L1181.0 136.4L1181.0 136.4L1181.0 136.4L1181.0 136.4L1181.0 136.4L1181.1 136.4L1181.1 136.5L1181.1 136.5L1181.1 136.5L1181.2 136.5L1181.2 136.5L1181.2 136.5L1181.2 136.5L1181.2 136.5L1181.3 136.5L1181.3 136.6L1181.3 136.6L1181.3 136.6L1181.4 136.6L1181.4 136.6L1181.4 136.6L1181.4 136.6L1181.4 136.6L1181.5 136.7L1181.5 136.7L1181.5 136.7L1181.5 136.7L1181.6 136.7L1181.6 136.7L1181.6 136.7L1181.6 136.7L1181.6 136.7L1181.7 136.8L1181.7 136.8L1181.7 136.8L1181.7 136.8L1181.8 136.8L1181.8 136.8L1181.8 136.8L1181.8 136.8L1181.8 136.9L1181.9 136.9L1181.9 136.9L1181.9 136.9L1181.9 136.9L1182.0 136.9L1182.0 136.9L1182.0 136.9L1182.0 136.9L1182.0 137.0L1182.1 137.0L1182.1 137.0L1182.1 137.0L1182.1 137.0L1182.2 137.0L1182.2 137.0L1182.2 137.0L1182.2 137.1L1182.2 137.1L1182.3 137.1L1182.3 137.1L1182.3 137.1L1182.3 137.1L1182.4 137.1L1182.4 137.1L1182.4 137.2L1182.4 137.2L1182.4 137.2L1182.5 137.2L1182.5 137.2L1182.5 137.2L1182.5 137.2L1182.6 137.2L1182.6 137.2L1182.6 137.3L1182.6 137.3L1182.6 137.3L1182.7 137.3L1182.7 137.3L1182.7 137.3L1182.7 137.3L1182.8 137.3L1182.8 137.4L1182.8 137.4L1182.8 137.4L1182.8 137.4L1182.9 137.4L1182.9 137.4L1182.9 137.4L1182.9 137.4L1183.0 137.4L1183.0 137.5L1183.0 137.5L1183.0 137.5L1183.0 137.5L1183.1 137.5L1183.1 137.5L1183.1 137.5L1183.1 137.5L1183.2 137.6L1183.2 137.6L1183.2 137.6L1183.2 137.6L1183.2 137.6L1183.3 137.6L1183.3 137.6L1183.3 137.6L1183.3 137.6L1183.4 137.7L1183.4 137.7L1183.4 137.7L1183.4 137.7L1183.4 137.7L1183.5 137.7L1183.5 137.7L1183.5 137.7L1183.5 137.8L1183.6 137.8L1183.6 137.8L1183.6 137.8L1183.6 137.8L1183.6 137.8L1183.7 137.8L1183.7 137.8L1183.7 137.8L1183.7 137.9L1183.8 137.9L1183.8 137.9L1183.8 137.9L1183.8 137.9L1183.8 137.9L1183.9 137.9L1183.9 137.9L1183.9 138.0L1183.9 138.0L1184.0 138.0L1184.0 138.0L1184.0 138.0" stroke="#2ab07f" stroke-width="1.45"/>
<rect x="1183.0" y="136.9" width="2.1" height="2.1" fill="#ff6347" stroke="none"/>
<path d="M797.3 72.8L795.8 73.3L794.2 73.9L792.7 74.4L791.1 74.9L789.5 75.4L788.0 75.9L786.4 76.4L784.9 76.9L783.3 77.4L781.8 77.9L780.3 78.4L778.8 78.8L777.3 79.3L775.7 79.7L774.2 80.2L772.8 80.6L771.3 81.0L769.8 81.4L768.3 81.8L766.9 82.2L765.5 82.6L764.0 83.0L762.6 83.4L761.2 83.7L759.8 84.1L758.5 84.4L757.1 84.8L755.7 85.1L754.4 85.4L753.1 85.7L751.8 86.0L750.5 86.3L749.3 86.6L748.0 86.8L746.8 87.1L745.6 87.3L744.4 87.6L743.2 87.8L742.0 88.0L740.9 88.2L739.8 88.4L738.7 88.6L737.6 88.8L736.6 89.0L735.5 89.1L734.5 89.3L733.5 89.4L732.6 89.5L731.6 89.7L730.7 89.8L729.8 89.9L729.0 89.9L728.1 90.0L727.3 90.1L726.5 90.1L725.8 90.2L725.1 90.2L724.3 90.2L723.7 90.3L723.0 90.3L722.4 90.2L721.8 90.2L721.3 90.2L720.7 90.2L720.2 90.1L719.8 90.1L719.3 90.0L718.9 89.9L718.5 89.8L718.2 89.7L717.9 89.6L717.6 89.5L717.3 89.3L717.1 89.2L717.0 89.0L716.8 88.9L716.7 88.7L716.6 88.5L716.6 88.3L716.6 88.1L716.6 87.9L716.6 87.7L716.7 87.5" stroke="#2ab07f" stroke-width="2.083" stroke-linejoin="round"/>
<path d="M1088.1 87.2L1086.8 87.0L1085.4 86.7L1084.0 86.4L1082.6 86.1L1081.2 85.9L1079.7 85.6L1078.3 85.2L1076.8 84.9L1075.3 84.6L1073.8 84.3L1072.2 83.9L1070.7 83.6L1069.1 83.2L1067.5 82.8L1065.9 82.4L1064.3 82.0L1062.6 81.6L1061.0 81.2L1059.3 80.8L1057.6 80.4L1055.9 80.0L1054.2 79.5L1052.5 79.1L1050.7 78.6L1049.0 78.1L1047.3 77.7L1045.5 77.2L1043.7 76.7L1041.9 76.2L1040.2 75.7L1038.4 75.2L1036.6 74.7L1034.7 74.1L1032.9 73.6L1031.1 73.1L1029.3 72.5L1027.5 72.0L1025.6 71.4L1023.8 70.9L1022.0 70.3L1020.1 69.7L1018.3 69.1L1016.5 68.6L1014.6 68.0L1012.8 67.4L1010.9 66.8L1009.1 66.2L1007.3 65.6L1005.5 64.9L1003.6 64.3L1001.8 63.7L1000.0 63.1L998.2 62.5L996.4 61.8L994.6 61.2L992.8 60.6L991.1 59.9L989.3 59.3L987.6 58.7L985.9 58.0L984.1 57.4L982.4 56.7L980.8 56.1L979.1 55.5L977.4 54.8L975.8 54.2L974.2 53.5L972.6 52.9L971.1 52.3L969.6 51.7L968.1 51.1L966.6 50.4L965.2 49.8L963.8 49.2L962.4 48.7L961.1 48.1L959.9 47.5L958.7 47.0L957.5 46.4L956.4 45.9L955.4 45.4L954.4 44.9L953.5 44.5L952.7 44.0L952.0 43.6L951.3 43.2L950.8 42.9L950.4 42.6L950.1 42.3" stroke="#2ab07f" stroke-width="2.083" stroke-linejoin="round"/>
<path d="M856.2 42.0L857.4 41.8L858.5 41.7L859.5 41.5L860.4 41.5L861.2 41.4L861.8 41.4L862.2 41.5L862.6 41.6L862.8 41.7L862.9 41.9L862.9 42.2L862.8 42.4L862.6 42.7L862.3 43.1L861.9 43.4L861.4 43.8L860.8 44.2L860.2 44.7L859.5 45.2L858.7 45.7L857.9 46.2L857.0 46.7L856.1 47.2L855.1 47.8L854.1 48.4L853.1 49.0L852.0 49.5L850.9 50.1L849.7 50.7L848.5 51.4L847.3 52.0L846.1 52.6L844.8 53.2L843.5 53.9L842.2 54.5L840.9 55.1L839.5 55.8L838.2 56.4L836.8 57.1L835.4 57.7L834.0 58.3L832.5 59.0L831.1 59.6L829.6 60.2L828.2 60.9L826.7 61.5L825.2 62.1L823.7 62.8L822.2 63.4L820.7 64.0L819.1 64.6L817.6 65.2L816.1 65.9L814.5 66.5L813.0 67.1L811.4 67.7L809.9 68.3L808.3 68.8L806.8 69.4L805.2 70.0L803.6 70.6L802.1 71.1L800.5 71.7L798.9 72.3L797.3 72.8" stroke="#2ab07f" stroke-width="2.083" stroke-linejoin="round"/>
<path d="M408.6 328.2L408.7 328.9L408.7 329.5L408.8 330.1L408.8 330.8L408.9 331.4L408.9 332.1L408.9 332.7L408.9 333.3L408.9 333.9L408.8 334.6L408.8 335.2L408.7 335.8L408.7 336.4L408.6 337.0L408.5 337.6L408.4 338.2L408.3 338.8L408.2 339.3L408.0 339.9L407.9 340.5L407.7 341.0L407.6 341.6L407.4 342.1L407.2 342.6L407.0 343.1L406.7 343.7L406.5 344.1L406.3 344.6L406.0 345.1L405.7 345.6L405.4 346.0L405.1 346.4L404.8 346.9L404.5 347.3L404.1 347.7L403.8 348.1L403.4 348.4L403.0 348.8L402.6 349.1L402.2 349.5L401.8 349.8L401.3 350.1L400.9 350.4L400.4 350.6L400.0 350.9L399.5 351.1L399.0 351.3L398.5 351.5L397.9 351.7L397.4 351.9L396.9 352.1L396.3 352.2L395.7 352.3L395.1 352.4L394.6 352.5L394.0 352.6L393.3 352.7L392.7 352.7L392.1 352.7L391.5 352.7L390.8 352.7L390.2 352.7L389.5 352.6L388.8 352.6L388.2 352.5L387.5 352.4L386.8 352.3L386.1 352.1L385.4 352.0L384.7 351.8L384.0 351.6L383.3 351.4L382.6 351.2L381.9 351.0L381.2 350.8L380.5 350.5L379.8 350.2L379.1 349.9L378.4 349.6L377.7 349.3L377.0 349.0L376.3 348.6L375.6 348.3L374.9 347.9L374.3 347.5L373.6 347.1L372.9 346.7L372.3 346.2L371.7 345.8L371.0 345.3L370.4 344.9L369.8 344.4L369.2 343.9L368.6 343.4L368.1 342.9L367.5 342.4L367.0 341.8L366.4 341.3L365.9 340.8L365.4 340.2L365.0 339.6L364.5 339.1L364.1 338.5L363.7 337.9L363.2 337.3L362.9 336.7L362.5 336.1L362.2 335.5L361.8 334.9L361.5 334.3L361.3 333.6L361.0 333.0L360.8 332.4L360.5 331.7L360.4 331.1L360.2 330.5L360.0 329.8L359.9 329.2L359.8 328.5L359.7 327.9L359.7 327.3L359.7 326.6L359.6 326.0L359.7 325.4L359.7 324.7L359.8 324.1L359.8 323.5L359.9 322.8L360.1 322.2L360.2 321.6L360.4 321.0L360.6 320.4L360.8 319.8L361.0 319.2L361.3 318.6L361.6 318.0L361.9 317.4L362.2 316.9L362.5 316.3L362.9 315.7L363.3 315.2L363.7 314.7L364.1 314.1L364.5 313.6L365.0 313.1L365.4 312.6L365.9 312.1L366.4 311.7L366.9 311.2L367.4 310.7L367.9 310.3L368.5 309.9L369.0 309.5L369.6 309.1L370.2 308.7L370.8 308.3L371.3 307.9L371.9 307.6L372.6 307.3L373.2 306.9L373.8 306.6L374.4 306.3L375.1 306.1L375.7 305.8L376.4 305.6L377.0 305.3L377.7 305.1L378.3 304.9L379.0 304.8L379.6 304.6L380.3 304.5L380.9 304.3L381.6 304.2L382.3 304.1L382.9 304.0L383.6 304.0L384.2 303.9L384.9 303.9L385.5 303.9L386.1 303.9L386.8 303.9L387.4 303.9L388.0 304.0L388.6 304.1L389.3 304.2L389.9 304.3L390.5 304.4L391.1 304.5L391.6 304.7L392.2 304.9L392.8 305.0L393.4 305.2L393.9 305.5L394.5 305.7L395.0 305.9L395.5 306.2L396.0 306.5L396.5 306.8L397.0 307.1L397.5 307.4L398.0 307.8L398.5 308.1L399.0 308.5L399.4 308.9L399.8 309.3L400.3 309.7L400.7 310.1L401.1 310.5L401.5 311.0L401.9 311.4L402.3 311.9L402.6 312.4L403.0 312.9L403.3 313.4L403.7 313.9L404.0 314.4L404.3 314.9L404.6 315.5L404.9 316.0L405.2 316.6L405.5 317.1L405.7 317.7L406.0 318.3L406.2 318.9L406.5 319.5L406.7 320.1L406.9 320.7L407.1 321.3L407.3 321.9L407.5 322.5L407.6 323.1L407.8 323.8L407.9 324.4L408.1 325.0L408.2 325.7L408.3 326.3L408.4 327.0L408.5 327.6L408.6 328.2" stroke="#bddf26" stroke-width="2.083" stroke-linejoin="round"/>
<path d="M829.2 290.6L829.1 291.2L829.1 291.8L829.0 292.5L828.9 293.1L828.7 293.7L828.6 294.4L828.4 295.0L828.3 295.6L828.1 296.2L827.9 296.9L827.7 297.5L827.4 298.1L827.2 298.7L826.9 299.3L826.7 299.9L826.4 300.5L826.1 301.0L825.7 301.6L825.4 302.2L825.1 302.7L824.7 303.3L824.3 303.8L824.0 304.3L823.6 304.8L823.2 305.4L822.7 305.8L822.3 306.3L821.9 306.8L821.4 307.3L820.9 307.7L820.5 308.2L820.0 308.6L819.5 309.0L819.0 309.4L818.5 309.8L817.9 310.2L817.4 310.5L816.8 310.9L816.3 311.2L815.7 311.5L815.2 311.9L814.6 312.1L814.0 312.4L813.4 312.7L812.8 312.9L812.2 313.2L811.6 313.4L811.0 313.6L810.4 313.8L809.8 313.9L809.1 314.1L808.5 314.2L807.9 314.3L807.2 314.4L806.6 314.5L806.0 314.6L805.3 314.7L804.7 314.7L804.1 314.7L803.4 314.7L802.8 314.7L802.1 314.7L801.5 314.6L800.9 314.6L800.2 314.5L799.6 314.4L799.0 314.3L798.3 314.2L797.7 314.0L797.1 313.8L796.5 313.7L795.9 313.5L795.3 313.3L794.7 313.0L794.1 312.8L793.5 312.6L793.0 312.3L792.4 312.0L791.8 311.7L791.3 311.4L790.7 311.1L790.2 310.7L789.7 310.4L789.2 310.0L788.7 309.6L788.2 309.2L787.7 308.8L787.2 308.4L786.8 307.9L786.4 307.5L785.9 307.0L785.5 306.6L785.1 306.1L784.7 305.6L784.4 305.1L784.0 304.6L783.7 304.1L783.3 303.5L783.0 303.0L782.7 302.4L782.4 301.9L782.2 301.3L781.9 300.7L781.7 300.2L781.5 299.6L781.3 299.0L781.1 298.4L780.9 297.8L780.8 297.2L780.7 296.6L780.6 295.9L780.5 295.3L780.4 294.7L780.3 294.1L780.3 293.4L780.3 292.8L780.3 292.2L780.3 291.5L780.3 290.9L780.4 290.2L780.5 289.6L780.6 289.0L780.7 288.3L780.8 287.7L780.9 287.0L781.1 286.4L781.3 285.8L781.5 285.1L781.7 284.5L781.9 283.9L782.2 283.3L782.4 282.7L782.7 282.1L783.0 281.5L783.3 280.9L783.6 280.3L784.0 279.7L784.3 279.1L784.7 278.5L785.1 278.0L785.5 277.4L785.9 276.9L786.4 276.4L786.8 275.8L787.3 275.3L787.7 274.8L788.2 274.3L788.7 273.8L789.2 273.4L789.7 272.9L790.3 272.5L790.8 272.0L791.4 271.6L791.9 271.2L792.5 270.8L793.1 270.4L793.6 270.0L794.2 269.7L794.8 269.3L795.4 269.0L796.0 268.7L796.6 268.4L797.3 268.1L797.9 267.9L798.5 267.6L799.2 267.4L799.8 267.2L800.4 267.0L801.1 266.8L801.7 266.6L802.4 266.5L803.0 266.3L803.7 266.2L804.3 266.1L805.0 266.0L805.6 266.0L806.3 265.9L806.9 265.9L807.5 265.9L808.2 265.9L808.8 265.9L809.4 265.9L810.1 266.0L810.7 266.1L811.3 266.2L811.9 266.3L812.5 266.4L813.2 266.5L813.7 266.7L814.3 266.9L814.9 267.1L815.5 267.3L816.1 267.5L816.6 267.7L817.2 268.0L817.7 268.3L818.3 268.6L818.8 268.9L819.3 269.2L819.8 269.5L820.3 269.9L820.8 270.2L821.3 270.6L821.7 271.0L822.2 271.4L822.6 271.8L823.0 272.2L823.4 272.7L823.9 273.1L824.2 273.6L824.6 274.1L825.0 274.6L825.3 275.1L825.7 275.6L826.0 276.1L826.3 276.6L826.6 277.2L826.9 277.7L827.1 278.3L827.4 278.8L827.6 279.4L827.8 280.0L828.0 280.6L828.2 281.2L828.4 281.8L828.6 282.4L828.7 283.0L828.8 283.6L828.9 284.2L829.0 284.8L829.1 285.5L829.2 286.1L829.2 286.7L829.3 287.4L829.3 288.0L829.3 288.6L829.3 289.3L829.2 289.9L829.2 290.6" stroke="#4ec36b" stroke-width="2.083" stroke-linejoin="round"/>
</g>
<text class="gl" x="902.3" y="25.1">+90<tspan font-size="5px" font-weight="bold" stroke="#8a8a8a" stroke-width="0.9" dx="1.9" dy="-4.0">&#176;</tspan></text>
<text class="gl" x="902.3" y="123.0">+60<tspan font-size="5px" font-weight="bold" stroke="#8a8a8a" stroke-width="0.9" dx="1.9" dy="-4.0">&#176;</tspan></text>
<text class="gl" x="902.3" y="221.0">+30<tspan font-size="5px" font-weight="bold" stroke="#8a8a8a" stroke-width="0.9" dx="1.9" dy="-4.0">&#176;</tspan></text>
<text class="gl" x="902.6" y="428.0">−30<tspan font-size="5px" font-weight="bold" stroke="#8a8a8a" stroke-width="0.9" dx="1.9" dy="-4.0">&#176;</tspan></text>
<text class="gl" x="902.6" y="526.0">−60<tspan font-size="5px" font-weight="bold" stroke="#8a8a8a" stroke-width="0.9" dx="1.9" dy="-4.0">&#176;</tspan></text>
<text class="gl" x="902.6" y="624.0">−90<tspan font-size="5px" font-weight="bold" stroke="#8a8a8a" stroke-width="0.9" dx="1.9" dy="-4.0">&#176;</tspan></text>
<text class="gl" x="902.5" y="330.0">+0<tspan font-size="5px" font-weight="bold" stroke="#8a8a8a" stroke-width="0.9" dx="1.9" dy="-4.0">&#176;</tspan></text>
<text class="gl" x="804.8" y="330.0">+30<tspan font-size="5px" font-weight="bold" stroke="#8a8a8a" stroke-width="0.9" dx="1.9" dy="-4.0">&#176;</tspan></text>
<text class="gl" x="707.2" y="330.0">+60<tspan font-size="5px" font-weight="bold" stroke="#8a8a8a" stroke-width="0.9" dx="1.9" dy="-4.0">&#176;</tspan></text>
<text class="gl" x="609.5" y="330.0">+90<tspan font-size="5px" font-weight="bold" stroke="#8a8a8a" stroke-width="0.9" dx="1.9" dy="-4.0">&#176;</tspan></text>
<text class="gl" x="510.9" y="330.0">+120<tspan font-size="5px" font-weight="bold" stroke="#8a8a8a" stroke-width="0.9" dx="1.9" dy="-4.0">&#176;</tspan></text>
<text class="gl" x="413.3" y="330.0">+150<tspan font-size="5px" font-weight="bold" stroke="#8a8a8a" stroke-width="0.9" dx="1.9" dy="-4.0">&#176;</tspan></text>
<text class="gl" x="315.5" y="330.0">+180<tspan font-size="5px" font-weight="bold" stroke="#8a8a8a" stroke-width="0.9" dx="1.9" dy="-4.0">&#176;</tspan></text>
<text class="gl" x="1488.7" y="330.0">+180<tspan font-size="5px" font-weight="bold" stroke="#8a8a8a" stroke-width="0.9" dx="1.9" dy="-4.0">&#176;</tspan></text>
<text class="gl" x="1389.9" y="330.0">+210<tspan font-size="5px" font-weight="bold" stroke="#8a8a8a" stroke-width="0.9" dx="1.9" dy="-4.0">&#176;</tspan></text>
<text class="gl" x="1292.3" y="330.0">+240<tspan font-size="5px" font-weight="bold" stroke="#8a8a8a" stroke-width="0.9" dx="1.9" dy="-4.0">&#176;</tspan></text>
<text class="gl" x="1194.6" y="330.0">+270<tspan font-size="5px" font-weight="bold" stroke="#8a8a8a" stroke-width="0.9" dx="1.9" dy="-4.0">&#176;</tspan></text>
<text class="gl" x="1096.9" y="330.0">+300<tspan font-size="5px" font-weight="bold" stroke="#8a8a8a" stroke-width="0.9" dx="1.9" dy="-4.0">&#176;</tspan></text>
<text class="gl" x="999.3" y="330.0">+330<tspan font-size="5px" font-weight="bold" stroke="#8a8a8a" stroke-width="0.9" dx="1.9" dy="-4.0">&#176;</tspan></text>
<text class="mono" x="316.2" y="30" xml:space="preserve">UK000Y</text>
<text class="mono" x="316.2" y="43" xml:space="preserve">Beg: 20251006 03:05:45 (sol = 192.77°)</text>
<text class="mono" x="316.2" y="57" xml:space="preserve">End: 20251006 05:10:44 (sol = 192.86°)</text>
<text class="mono" x="316.2" y="69" xml:space="preserve">--------------------------------------</text>
<text class="mono" x="316.2" y="82" xml:space="preserve">...: 27</text>
<text class="mono" x="316.2" y="95" xml:space="preserve">OCT: 2</text>
<text class="mono" x="316.2" y="108" xml:space="preserve">DSX: 1</text>
<text class="mono" x="316.2" y="122" xml:space="preserve">STA: 1</text>
<text class="bl" x="790.8" y="68.8">OCT</text>
<text class="bl" x="384.4" y="331.0">DSX</text>
<text class="bl" x="804.9" y="293.7">STA</text>
<g clip-path="url(#skyclip)"><path d="M384.1 328.5h4.8M386.5 326.1v4.8" stroke="#f00" stroke-width="1.1" fill="none"/><path d="M823.0 279.6h4.8M825.4 277.2v4.8" stroke="#f00" stroke-width="1.1" fill="none"/><path d="M789.1 65.7h4.8M791.5 63.3v4.8" stroke="#f00" stroke-width="1.1" fill="none"/><path d="M785.4 70.6h4.8M787.8 68.2v4.8" stroke="#f00" stroke-width="1.1" fill="none"/></g>
<g id="activity">
<defs><clipPath id="axclip"><rect x="20.5" y="641.5" width="1765.0" height="201.0"/></clipPath></defs>
<g clip-path="url(#axclip)">
<text class="mn" transform="translate(148.9 697.42) rotate(-90)">APR</text>
<text class="mn" transform="translate(294.7 702.83) rotate(-90)">MAY</text>
<text class="mn" transform="translate(435.9 690.01) rotate(-90)">JUN</text>
<text class="mn" transform="translate(576.9 684.76) rotate(-90)">JUL</text>
<text class="mn" transform="translate(724.2 703.05) rotate(-90)">AUG</text>
<text class="mn" transform="translate(871.9 696.08) rotate(-90)">SEP</text>
<text class="mn" transform="translate(1016.9 701.70) rotate(-90)">OCT</text>
<text class="mn" transform="translate(1170.0 705.95) rotate(-90)">NOV</text>
<text class="mn" transform="translate(1318.9 703.33) rotate(-90)">DEC</text>
<text class="mn" transform="translate(1469.2 688.26) rotate(-90)">JAN</text>
<text class="mn" transform="translate(1628.0 697.70) rotate(-90)">FEB</text>
<text class="mn" transform="translate(1765.9 707.20) rotate(-90)">MAR</text>
</g>
<g shape-rendering="crispEdges">
<rect x="106" y="832" width="24" height="4" fill="#bddf26"/>
<rect x="165" y="832" width="180" height="4" fill="#bddf26"/>
<rect x="366" y="832" width="259" height="4" fill="#bddf26"/>
<rect x="636" y="832" width="151" height="4" fill="#bddf26"/>
<rect x="807" y="832" width="93" height="4" fill="#bddf26"/>
<rect x="920" y="832" width="53" height="4" fill="#bddf26"/>
<rect x="984" y="832" width="82" height="4" fill="#bddf26"/>
<rect x="1082" y="832" width="122" height="4" fill="#bddf26"/>
<rect x="1244" y="832" width="82" height="4" fill="#bddf26"/>
<rect x="1337" y="832" width="19" height="4" fill="#bddf26"/>
<rect x="1381" y="832" width="63" height="4" fill="#bddf26"/>
<rect x="1459" y="832" width="53" height="4" fill="#bddf26"/>
<rect x="1523" y="832" width="24" height="4" fill="#bddf26"/>
<rect x="1724" y="832" width="24" height="4" fill="#bddf26"/>
<rect x="1758" y="832" width="24" height="4" fill="#bddf26"/>
<rect x="165" y="816" width="24" height="4" fill="#81d34d"/>
<rect x="224" y="816" width="63" height="4" fill="#81d34d"/>
<rect x="312" y="816" width="29" height="4" fill="#81d34d"/>
<rect x="366" y="816" width="127" height="4" fill="#81d34d"/>
<rect x="508" y="816" width="146" height="4" fill="#81d34d"/>
<rect x="704" y="816" width="34" height="4" fill="#81d34d"/>
<rect x="773" y="816" width="73" height="4" fill="#81d34d"/>
<rect x="871" y="816" width="117" height="4" fill="#81d34d"/>
<rect x="1003" y="816" width="14" height="4" fill="#81d34d"/>
<rect x="1062" y="816" width="151" height="4" fill="#81d34d"/>
<rect x="1244" y="816" width="23" height="4" fill="#81d34d"/>
<rect x="1293" y="816" width="23" height="4" fill="#81d34d"/>
<rect x="1342" y="816" width="23" height="4" fill="#81d34d"/>
<rect x="1386" y="816" width="43" height="4" fill="#81d34d"/>
<rect x="1459" y="816" width="24" height="4" fill="#81d34d"/>
<rect x="1548" y="816" width="23" height="4" fill="#81d34d"/>
<rect x="165" y="800" width="24" height="4" fill="#4ec36b"/>
<rect x="258" y="800" width="230" height="4" fill="#4ec36b"/>
<rect x="508" y="800" width="107" height="4" fill="#4ec36b"/>
<rect x="626" y="800" width="92" height="4" fill="#4ec36b"/>
<rect x="729" y="800" width="97" height="4" fill="#4ec36b"/>
<rect x="949" y="800" width="201" height="4" fill="#4ec36b"/>
<rect x="1160" y="800" width="88" height="4" fill="#4ec36b"/>
<rect x="1258" y="800" width="186" height="4" fill="#4ec36b"/>
<rect x="1459" y="800" width="24" height="4" fill="#4ec36b"/>
<rect x="1553" y="800" width="23" height="4" fill="#4ec36b"/>
<rect x="194" y="783" width="24" height="4" fill="#2ab07f"/>
<rect x="322" y="783" width="185" height="4" fill="#2ab07f"/>
<rect x="518" y="783" width="24" height="4" fill="#2ab07f"/>
<rect x="557" y="783" width="127" height="4" fill="#2ab07f"/>
<rect x="807" y="783" width="24" height="4" fill="#2ab07f"/>
<rect x="954" y="783" width="19" height="4" fill="#2ab07f"/>
<rect x="989" y="783" width="136" height="4" fill="#2ab07f"/>
<rect x="1155" y="783" width="63" height="4" fill="#2ab07f"/>
<rect x="1244" y="783" width="23" height="4" fill="#2ab07f"/>
<rect x="1317" y="783" width="24" height="4" fill="#2ab07f"/>
<rect x="1396" y="783" width="23" height="4" fill="#2ab07f"/>
<rect x="1464" y="783" width="186" height="4" fill="#2ab07f"/>
<rect x="341" y="767" width="29" height="4" fill="#1e9b8a"/>
<rect x="410" y="767" width="38" height="4" fill="#1e9b8a"/>
<rect x="469" y="767" width="24" height="4" fill="#1e9b8a"/>
<rect x="528" y="767" width="18" height="4" fill="#1e9b8a"/>
<rect x="562" y="767" width="29" height="4" fill="#1e9b8a"/>
<rect x="616" y="767" width="33" height="4" fill="#1e9b8a"/>
<rect x="959" y="767" width="29" height="4" fill="#1e9b8a"/>
<rect x="1062" y="767" width="24" height="4" fill="#1e9b8a"/>
<rect x="1101" y="767" width="24" height="4" fill="#1e9b8a"/>
<rect x="1160" y="767" width="34" height="4" fill="#1e9b8a"/>
<rect x="1249" y="767" width="23" height="4" fill="#1e9b8a"/>
<rect x="1425" y="767" width="87" height="4" fill="#1e9b8a"/>
<rect x="420" y="750" width="24" height="4" fill="#25858e"/>
<rect x="533" y="750" width="23" height="4" fill="#25858e"/>
<rect x="567" y="750" width="24" height="4" fill="#25858e"/>
<rect x="621" y="750" width="122" height="4" fill="#25858e"/>
<rect x="969" y="750" width="166" height="4" fill="#25858e"/>
<rect x="1185" y="750" width="161" height="4" fill="#25858e"/>
<rect x="1469" y="750" width="24" height="4" fill="#25858e"/>
<rect x="430" y="734" width="23" height="4" fill="#2d708e"/>
<rect x="577" y="734" width="156" height="4" fill="#2d708e"/>
<rect x="994" y="734" width="111" height="4" fill="#2d708e"/>
<rect x="1116" y="734" width="107" height="4" fill="#2d708e"/>
<rect x="1263" y="734" width="29" height="4" fill="#2d708e"/>
<rect x="1489" y="734" width="23" height="4" fill="#2d708e"/>
<rect x="592" y="718" width="23" height="4" fill="#375a8c"/>
<rect x="655" y="718" width="117" height="4" fill="#375a8c"/>
<rect x="1072" y="718" width="171" height="4" fill="#375a8c"/>
<rect x="1263" y="718" width="24" height="4" fill="#375a8c"/>
<rect x="596" y="701" width="137" height="4" fill="#424086"/>
<rect x="1092" y="701" width="28" height="4" fill="#424086"/>
<rect x="1200" y="701" width="23" height="4" fill="#424086"/>
<rect x="1273" y="701" width="53" height="4" fill="#424086"/>
<rect x="1111" y="685" width="24" height="4" fill="#482475"/>
</g>
<g stroke="#fff" stroke-opacity="0.37" stroke-width="2.083" stroke-dasharray="2.083 3.437">
<path d="M75 842L75 641.5"/>
<path d="M219 842L219 641.5"/>
<path d="M365 842L365 641.5"/>
<path d="M506 842L506 641.5"/>
<path d="M651 842L651 641.5"/>
<path d="M797 842L797 641.5"/>
<path d="M940 842L940 641.5"/>
<path d="M1091 842L1091 641.5"/>
<path d="M1239 842L1239 641.5"/>
<path d="M1394 842L1394 641.5"/>
<path d="M1548 842L1548 641.5"/>
<path d="M1687 842L1687 641.5"/>
</g>
<text class="bl" x="117.8" y="832">KSE</text>
<text class="bl" x="255.1" y="832">ETA</text>
<text class="bl" x="495.3" y="832">NZC</text>
<text class="bl" x="711.0" y="832">NDA</text>
<text class="bl" x="853.2" y="832">SPE</text>
<text class="bl" x="946.3" y="832">ARD</text>
<text class="bl" x="1024.8" y="832">EGE</text>
<text class="bl" x="1142.5" y="832">NTA</text>
<text class="bl" x="1284.6" y="832">MON</text>
<text class="bl" x="1343.5" y="832">URS</text>
<text class="bl" x="1412.1" y="832">AHY</text>
<text class="bl" x="1485.7" y="832">GUM</text>
<text class="bl" x="1534.7" y="832">OHY</text>
<text class="bl" x="1735.7" y="832">XHE</text>
<text class="bl" x="1770.0" y="832">EVI</text>
<text class="bl" x="176.6" y="815">AVB</text>
<text class="bl" x="255.1" y="815">ELY</text>
<text class="bl" x="323.7" y="815">CAM</text>
<text class="bl" x="431.6" y="815">SSG</text>
<text class="bl" x="578.6" y="815">PCA</text>
<text class="bl" x="720.8" y="815">AUD</text>
<text class="bl" x="809.1" y="815">AUR</text>
<text class="bl" x="931.6" y="815">DSX</text>
<text class="bl" x="1010.1" y="815">OCU</text>
<text class="bl" x="1137.6" y="815">OER</text>
<text class="bl" x="1255.2" y="815">DKD</text>
<text class="bl" x="1304.2" y="815">DSV</text>
<text class="bl" x="1353.3" y="815">ALY</text>
<text class="bl" x="1407.2" y="815">JLE</text>
<text class="bl" x="1470.9" y="815">SCC</text>
<text class="bl" x="1559.2" y="815">FEV</text>
<text class="bl" x="176.6" y="799">LYR</text>
<text class="bl" x="372.7" y="799">JMC</text>
<text class="bl" x="559.0" y="799">JPE</text>
<text class="bl" x="671.8" y="799">PAU</text>
<text class="bl" x="774.7" y="799">NIA</text>
<text class="bl" x="1049.3" y="799">STA</text>
<text class="bl" x="1206.2" y="799">NOO</text>
<text class="bl" x="1353.3" y="799">COM</text>
<text class="bl" x="1470.9" y="799">NCC</text>
<text class="bl" x="1564.1" y="799">FED</text>
<text class="bl" x="206.0" y="783">HVI</text>
<text class="bl" x="411.9" y="783">ARI</text>
<text class="bl" x="529.6" y="783">SZC</text>
<text class="bl" x="617.9" y="783">CAP</text>
<text class="bl" x="818.9" y="783">NUE</text>
<text class="bl" x="961.1" y="783">OCT</text>
<text class="bl" x="1059.1" y="783">ORI</text>
<text class="bl" x="1186.6" y="783">AMO</text>
<text class="bl" x="1255.2" y="783">DPC</text>
<text class="bl" x="1328.8" y="783">XVI</text>
<text class="bl" x="1407.2" y="783">QUA</text>
<text class="bl" x="1559.2" y="783">AAN</text>
<text class="bl" x="353.1" y="766">TAH</text>
<text class="bl" x="431.6" y="766">JEA</text>
<text class="bl" x="480.6" y="766">JIP</text>
<text class="bl" x="539.4" y="766">PPS</text>
<text class="bl" x="578.6" y="766">ZCS</text>
<text class="bl" x="632.6" y="766">GDR</text>
<text class="bl" x="970.9" y="766">DRA</text>
<text class="bl" x="1073.8" y="766">LUM</text>
<text class="bl" x="1113.0" y="766">RPU</text>
<text class="bl" x="1176.8" y="766">THA</text>
<text class="bl" x="1260.1" y="766">PSU</text>
<text class="bl" x="1470.9" y="766">XCB</text>
<text class="bl" x="431.6" y="750">JRC</text>
<text class="bl" x="544.3" y="750">CAN</text>
<text class="bl" x="578.6" y="750">FAN</text>
<text class="bl" x="681.6" y="750">PER</text>
<text class="bl" x="1049.3" y="750">CTA</text>
<text class="bl" x="1265.0" y="750">HYD</text>
<text class="bl" x="1480.7" y="750">XUM</text>
<text class="bl" x="441.4" y="733">COR</text>
<text class="bl" x="657.1" y="733">SDA</text>
<text class="bl" x="1049.3" y="733">LMI</text>
<text class="bl" x="1167.0" y="733">LEO</text>
<text class="bl" x="1274.8" y="733">EHY</text>
<text class="bl" x="1500.4" y="733">ECV</text>
<text class="bl" x="603.2" y="717">JXA</text>
<text class="bl" x="715.9" y="717">KCG</text>
<text class="bl" x="1157.2" y="717">AND</text>
<text class="bl" x="1274.8" y="717">DAD</text>
<text class="bl" x="666.9" y="701">ERI</text>
<text class="bl" x="1108.1" y="701">SLD</text>
<text class="bl" x="1211.1" y="701">ORS</text>
<text class="bl" x="1299.3" y="701">GEM</text>
<text class="bl" x="1122.8" y="684">KUM</text>
<g stroke="#fff" stroke-width="2.083" fill="none">
<path d="M113.83 834.00h8.33M118.00 829.83v8.33"/>
<path d="M240.83 834.00h8.33M245.00 829.83v8.33"/>
<path d="M510.43 834.00h8.33M514.60 829.83v8.33"/>
<path d="M706.43 834.00h8.33M710.60 829.83v8.33"/>
<path d="M833.43 834.00h8.33M837.60 829.83v8.33"/>
<path d="M961.43 834.00h8.33M965.60 829.83v8.33"/>
<path d="M986.43 834.00h8.33M990.60 829.83v8.33"/>
<path d="M1116.43 834.00h8.33M1120.60 829.83v8.33"/>
<path d="M1295.43 834.00h8.33M1299.60 829.83v8.33"/>
<path d="M1341.43 834.00h8.33M1345.60 829.83v8.33"/>
<path d="M1412.43 834.00h8.33M1416.60 829.83v8.33"/>
<path d="M1481.43 834.00h8.33M1485.60 829.83v8.33"/>
<path d="M1530.83 834.00h8.33M1535.00 829.83v8.33"/>
<path d="M1731.83 834.00h8.33M1736.00 829.83v8.33"/>
<path d="M1765.83 834.00h8.33M1770.00 829.83v8.33"/>
<path d="M172.83 818.00h8.33M177.00 813.83v8.33"/>
<path d="M255.83 818.00h8.33M260.00 813.83v8.33"/>
<path d="M323.83 818.00h8.33M328.00 813.83v8.33"/>
<path d="M437.43 818.00h8.33M441.60 813.83v8.33"/>
<path d="M598.43 818.00h8.33M602.60 813.83v8.33"/>
<path d="M716.43 818.00h8.33M720.60 813.83v8.33"/>
<path d="M793.43 818.00h8.33M797.60 813.83v8.33"/>
<path d="M939.43 818.00h8.33M943.60 813.83v8.33"/>
<path d="M1005.43 818.00h8.33M1009.60 813.83v8.33"/>
<path d="M1152.43 818.00h8.33M1156.60 813.83v8.33"/>
<path d="M1250.43 818.00h8.33M1254.60 813.83v8.33"/>
<path d="M1299.43 818.00h8.33M1303.60 813.83v8.33"/>
<path d="M1349.43 818.00h8.33M1353.60 813.83v8.33"/>
<path d="M1402.43 818.00h8.33M1406.60 813.83v8.33"/>
<path d="M1466.43 818.00h8.33M1470.60 813.83v8.33"/>
<path d="M1554.43 818.00h8.33M1558.60 813.83v8.33"/>
<path d="M174.43 802.00h8.33M178.60 797.83v8.33"/>
<path d="M378.43 802.00h8.33M382.60 797.83v8.33"/>
<path d="M544.43 802.00h8.33M548.60 797.83v8.33"/>
<path d="M682.43 802.00h8.33M686.60 797.83v8.33"/>
<path d="M741.43 802.00h8.33M745.60 797.83v8.33"/>
<path d="M1074.43 802.00h8.33M1078.60 797.83v8.33"/>
<path d="M1216.43 802.00h8.33M1220.60 797.83v8.33"/>
<path d="M1304.43 802.00h8.33M1308.60 797.83v8.33"/>
<path d="M1466.43 802.00h8.33M1470.60 797.83v8.33"/>
<path d="M1559.43 802.00h8.33M1563.60 797.83v8.33"/>
<path d="M201.83 785.00h8.33M206.00 780.83v8.33"/>
<path d="M400.43 785.00h8.33M404.60 780.83v8.33"/>
<path d="M525.83 785.00h8.33M530.00 780.83v8.33"/>
<path d="M638.43 785.00h8.33M642.60 780.83v8.33"/>
<path d="M814.43 785.00h8.33M818.60 780.83v8.33"/>
<path d="M959.43 785.00h8.33M963.60 780.83v8.33"/>
<path d="M1040.43 785.00h8.33M1044.60 780.83v8.33"/>
<path d="M1187.43 785.00h8.33M1191.60 780.83v8.33"/>
<path d="M1250.43 785.00h8.33M1254.60 780.83v8.33"/>
<path d="M1324.43 785.00h8.33M1328.60 780.83v8.33"/>
<path d="M1402.43 785.00h8.33M1406.60 780.83v8.33"/>
<path d="M1545.43 785.00h8.33M1549.60 780.83v8.33"/>
<path d="M355.43 769.00h8.33M359.60 764.83v8.33"/>
<path d="M426.43 769.00h8.33M430.60 764.83v8.33"/>
<path d="M476.43 769.00h8.33M480.60 764.83v8.33"/>
<path d="M535.43 769.00h8.33M539.60 764.83v8.33"/>
<path d="M570.43 769.00h8.33M574.60 764.83v8.33"/>
<path d="M630.83 769.00h8.33M635.00 764.83v8.33"/>
<path d="M973.43 769.00h8.33M977.60 764.83v8.33"/>
<path d="M1069.43 769.00h8.33M1073.60 764.83v8.33"/>
<path d="M1108.43 769.00h8.33M1112.60 764.83v8.33"/>
<path d="M1177.43 769.00h8.33M1181.60 764.83v8.33"/>
<path d="M1255.43 769.00h8.33M1259.60 764.83v8.33"/>
<path d="M1466.43 769.00h8.33M1470.60 764.83v8.33"/>
<path d="M427.43 752.00h8.33M431.60 747.83v8.33"/>
<path d="M539.43 752.00h8.33M543.60 747.83v8.33"/>
<path d="M574.43 752.00h8.33M578.60 747.83v8.33"/>
<path d="M703.43 752.00h8.33M707.60 747.83v8.33"/>
<path d="M1094.43 752.00h8.33M1098.60 747.83v8.33"/>
<path d="M1270.43 752.00h8.33M1274.60 747.83v8.33"/>
<path d="M1476.43 752.00h8.33M1480.60 747.83v8.33"/>
<path d="M437.43 736.00h8.33M441.60 731.83v8.33"/>
<path d="M630.83 736.00h8.33M635.00 731.83v8.33"/>
<path d="M1038.43 736.00h8.33M1042.60 731.83v8.33"/>
<path d="M1167.43 736.00h8.33M1171.60 731.83v8.33"/>
<path d="M1274.43 736.00h8.33M1278.60 731.83v8.33"/>
<path d="M1497.43 736.00h8.33M1501.60 731.83v8.33"/>
<path d="M598.43 720.00h8.33M602.60 715.83v8.33"/>
<path d="M726.43 720.00h8.33M730.60 715.83v8.33"/>
<path d="M1187.43 720.00h8.33M1191.60 715.83v8.33"/>
<path d="M1270.43 720.00h8.33M1274.60 715.83v8.33"/>
<path d="M687.43 703.00h8.33M691.60 698.83v8.33"/>
<path d="M1101.43 703.00h8.33M1105.60 698.83v8.33"/>
<path d="M1206.43 703.00h8.33M1210.60 698.83v8.33"/>
<path d="M1299.43 703.00h8.33M1303.60 698.83v8.33"/>
<path d="M1118.43 687.00h8.33M1122.60 682.83v8.33"/>
</g>
<path d="M965.48 842.5L965.48 641.5" stroke="#f00" stroke-width="1.85" stroke-dasharray="5.139 2.222" fill="none"/>
<rect x="20.5" y="641.5" width="1765.0" height="201.0" fill="none" stroke="#fff" stroke-width="1.11"/>
<g stroke="#fff" stroke-width="1.11">
<path d="M20.50 842.5v4.86"/>
<path d="M265.50 842.5v4.86"/>
<path d="M510.50 842.5v4.86"/>
<path d="M755.50 842.5v4.86"/>
<path d="M1000.50 842.5v4.86"/>
<path d="M1246.50 842.5v4.86"/>
<path d="M1491.50 842.5v4.86"/>
<path d="M1736.50 842.5v4.86"/>
</g>
<text class="tk" x="20.07" y="862.3">0</text>
<text class="tk" x="265.21" y="862.3">50</text>
<text class="tk" x="510.35" y="862.3">100</text>
<text class="tk" x="755.49" y="862.3">150</text>
<text class="tk" x="1000.63" y="862.3">200</text>
<text class="tk" x="1245.76" y="862.3">250</text>
<text class="tk" x="1490.90" y="862.3">300</text>
<text class="tk" x="1736.04" y="862.3">350</text>
<text class="tk" x="903.00" y="881.5">Solar longitude (deg)</text>
</g>
</svg>
</body>
</html>
